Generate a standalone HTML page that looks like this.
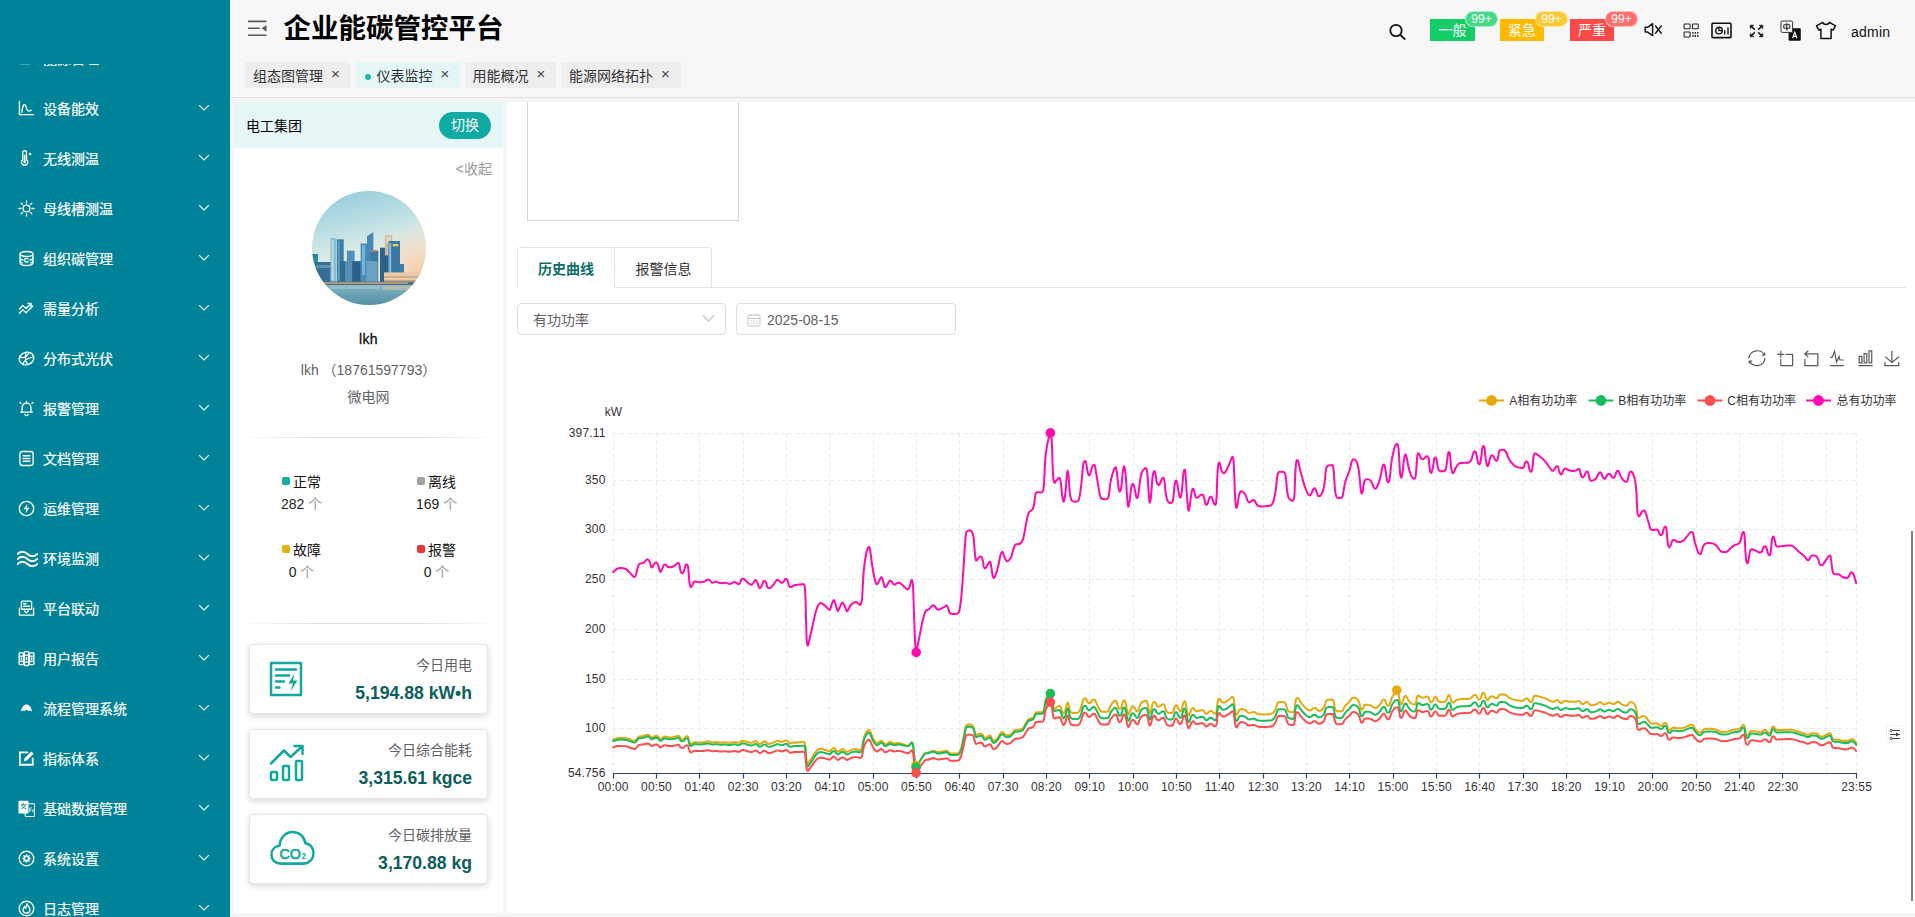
<!DOCTYPE html>
<html lang="zh-CN">
<head>
<meta charset="utf-8">
<title>企业能碳管控平台</title>
<style>
*{box-sizing:border-box;margin:0;padding:0}
html,body{width:1915px;height:917px;overflow:hidden;background:#f5f5f5;font-family:"Liberation Sans","Noto Sans CJK SC",sans-serif;font-size:14px;color:#303133}
.abs{position:absolute}
#side{position:absolute;left:0;top:0;width:230px;height:917px;background:#008299;overflow:hidden}
#side .mi{position:absolute;left:0;width:230px;height:50px;color:#fff;font-size:14px;line-height:50px;letter-spacing:0;-webkit-text-stroke:.2px #fff}
#side .mi span{position:absolute;left:43px;top:0;white-space:nowrap}
#side .mi svg.ic{position:absolute;left:17.8px;top:15.5px;width:17px;height:17px;fill:none;stroke:#fff;stroke-width:1.4;stroke-linecap:round;stroke-linejoin:round}
#side .mi svg.ar{position:absolute;left:198px;top:19px;width:12px;height:10px;fill:none;stroke:#fff;stroke-width:1.1;stroke-linecap:round;stroke-linejoin:round;opacity:.9}
#head{position:absolute;left:230px;top:0;width:1685px;height:98px;background:#f7f7f7;border-bottom:1px solid #e2e2e2}
#title{position:absolute;left:53.5px;top:10px;font-size:27.5px;font-weight:700;color:#000;line-height:38px;white-space:nowrap;letter-spacing:0}
.tag{position:absolute;top:62px;height:26px;background:#eeeeee;color:#303133;font-size:14px;line-height:28px;white-space:nowrap;padding-left:8px}
.tag.on{background:#e5f6f6}
.tag i{font-style:normal;position:absolute;top:-2px;font-size:15px;color:#444}
.lv{position:absolute;top:19px;width:45px;height:22px;color:#fff;font-size:14px;line-height:22px;text-align:center}
.bd{position:absolute;top:11px;width:33px;height:16px;border-radius:8px;color:#fff;font-size:12px;line-height:14px;text-align:center;border:1px solid rgba(255,255,255,.55)}
#lp{position:absolute;left:234px;top:102px;width:269px;height:811px;background:#fff;overflow:hidden}
#rp{position:absolute;left:507px;top:102px;width:1408px;height:811px;background:#fff;overflow:hidden}
.card{position:absolute;left:15px;width:239px;height:70px;background:#fff;border:1px solid #e6e6e6;border-radius:4px;box-shadow:0 2px 6px rgba(0,0,0,.16)}
.card .t{position:absolute;right:15px;top:11px;font-size:14px;color:#606266;line-height:18px;white-space:nowrap}
.card .v{position:absolute;right:15px;top:36px;font-size:17.6px;font-weight:700;color:#0b5e5c;line-height:24px;white-space:nowrap}
.st{position:absolute;font-size:14px;color:#111;white-space:nowrap;line-height:18px}
.st b{display:inline-block;width:8px;height:8px;border-radius:2px;margin-right:3px;position:relative;top:-2px}
.sv{position:absolute;font-size:14px;color:#222;white-space:nowrap;line-height:18px}
.sv em{font-style:normal;color:#999;font-size:14px}
</style>
</head>
<body>
<!-- SIDEBAR -->
<div id="side">
<div style="position:absolute;left:0;top:0;width:230px;height:64px;background:#008299;z-index:3"></div>
<div class="mi" style="top:34px"><svg class="ic" viewBox="0 0 18 18"><rect x="1.5" y="2" width="12.5" height="12.5" rx="1.5"/></svg><span>能源管理</span></div>
<div class="mi" style="top:84px"><svg class="ic" viewBox="0 0 18 18"><path d="M1.5 1.5v14h15"/><path d="M4 13c1.2-9 3.2-10.5 4.6-5.5s2.6 5 5.4 3.2"/></svg><span>设备能效</span><svg class="ar" viewBox="0 0 12 10"><path d="M1.5 2.5L6 7l4.5-4.5"/></svg></div>
<div class="mi" style="top:134px"><svg class="ic" viewBox="0 0 18 18"><path d="M5 2.8a2 2 0 0 1 4 0v7.4a3.3 3.3 0 1 1-4 0z"/><path d="M7 6v6.5" stroke-width="1.8"/><circle cx="7" cy="12.8" r="1.3" fill="#fff" stroke="none"/><circle cx="12.8" cy="4.2" r="1.3" fill="#fff" stroke="none"/></svg><span>无线测温</span><svg class="ar" viewBox="0 0 12 10"><path d="M1.5 2.5L6 7l4.5-4.5"/></svg></div>
<div class="mi" style="top:184px"><svg class="ic" viewBox="0 0 18 18"><circle cx="9" cy="9" r="3.6"/><path d="M9 1v2.2M9 14.8V17M1 9h2.2M14.8 9H17M3.3 3.3l1.6 1.6M13.1 13.1l1.6 1.6M3.3 14.7l1.6-1.6M13.1 4.9l1.6-1.6"/></svg><span>母线槽测温</span><svg class="ar" viewBox="0 0 12 10"><path d="M1.5 2.5L6 7l4.5-4.5"/></svg></div>
<div class="mi" style="top:234px"><svg class="ic" viewBox="0 0 18 18"><ellipse cx="9" cy="4.2" rx="6.8" ry="2.6"/><path d="M2.2 4.2v9.6c0 1.5 3 2.6 6.8 2.6s6.8-1.1 6.8-2.6V4.2"/><path d="M2.2 8.4c0 1 1.4 1.8 3 2.2M15.8 8.4c0 1-1.4 1.8-3 2.2M2.2 12c0 .8 1 1.4 2.4 1.9M15.8 12c0 .8-1 1.4-2.4 1.9"/><path d="M10.6 9.3a2.1 2.1 0 1 0 0 2.8" stroke-width="1.5"/></svg><span>组织碳管理</span><svg class="ar" viewBox="0 0 12 10"><path d="M1.5 2.5L6 7l4.5-4.5"/></svg></div>
<div class="mi" style="top:284px"><svg class="ic" viewBox="0 0 18 18"><path d="M1.5 9.5l3.5-3.7 3.6 3.2 4.8-5"/><path d="M10.6 3.6h3.2v3.2"/><path d="M1.5 14l3.5-3.7 3.6 3.2 7-7.2"/></svg><span>需量分析</span><svg class="ar" viewBox="0 0 12 10"><path d="M1.5 2.5L6 7l4.5-4.5"/></svg></div>
<div class="mi" style="top:334px"><svg class="ic" viewBox="0 0 18 18"><ellipse cx="9" cy="9" rx="7.8" ry="6.6" transform="rotate(-18 9 9)"/><path d="M2 7.5c4 1.5 7 .5 9.5-4.3M5 15c1.5-4 4.5-6.5 11-7.5M8.5 2.6c-1 4-1 8 1.5 12.8"/></svg><span>分布式光伏</span><svg class="ar" viewBox="0 0 12 10"><path d="M1.5 2.5L6 7l4.5-4.5"/></svg></div>
<div class="mi" style="top:384px"><svg class="ic" viewBox="0 0 18 18"><path d="M4.3 12.8V8a4.7 4.7 0 0 1 9.4 0v4.8"/><path d="M2.6 12.8h12.8"/><path d="M7.3 15.3a1.8 1.8 0 0 0 3.4 0"/><path d="M3.2 3.6l-1 -1M14.8 3.6l1-1"/><path d="M9 1.6v1.6"/></svg><span>报警管理</span><svg class="ar" viewBox="0 0 12 10"><path d="M1.5 2.5L6 7l4.5-4.5"/></svg></div>
<div class="mi" style="top:434px"><svg class="ic" viewBox="0 0 18 18"><rect x="2" y="1.6" width="14" height="14.8" rx="2.6"/><path d="M5.5 6h7M5.5 9h7M5.5 12h7" stroke-width="1.6"/></svg><span>文档管理</span><svg class="ar" viewBox="0 0 12 10"><path d="M1.5 2.5L6 7l4.5-4.5"/></svg></div>
<div class="mi" style="top:484px"><svg class="ic" viewBox="0 0 18 18"><circle cx="9" cy="9" r="7.6"/><path d="M10.2 3.8L5.8 9.8h3L7.8 14.2l4.4-6h-3z" fill="#fff" stroke="none"/></svg><span>运维管理</span><svg class="ar" viewBox="0 0 12 10"><path d="M1.5 2.5L6 7l4.5-4.5"/></svg></div>
<div class="mi" style="top:534px"><svg class="ic" viewBox="0 0 21 18" style="width:21px;height:18px;left:17px;top:16px"><path d="M0.5 4.6c3.5-3.2 6.5-3.2 10 0s6.5 3.2 10 0M0.5 9.6c3.5-3.2 6.5-3.2 10 0s6.5 3.2 10 0M0.5 14.6c3.5-3.2 6.5-3.2 10 0s6.5 3.2 10 0" stroke-width="1.9" transform="translate(0 -0.6)"/></svg><span>环境监测</span><svg class="ar" viewBox="0 0 12 10"><path d="M1.5 2.5L6 7l4.5-4.5"/></svg></div>
<div class="mi" style="top:584px"><svg class="ic" viewBox="0 0 18 18"><rect x="3.6" y="1.2" width="10.8" height="8.6" rx="1"/><path d="M6 4h2.5M6 6.6h6" stroke-width="1.5"/><path d="M1.5 8.6v7.4h15V8.6"/><path d="M7 11.6l2 1.8 2-1.8"/></svg><span>平台联动</span><svg class="ar" viewBox="0 0 12 10"><path d="M1.5 2.5L6 7l4.5-4.5"/></svg></div>
<div class="mi" style="top:634px"><svg class="ic" viewBox="0 0 18 18"><rect x="1.2" y="3" width="4.6" height="12.4" rx=".8"/><rect x="6.7" y="1.8" width="4.6" height="14.6" rx=".8"/><rect x="12.2" y="3" width="4.6" height="12.4" rx=".8"/><path d="M1.2 6.4h4.6M1.2 12h4.6M6.7 5.4h4.6M6.7 12.8h4.6M12.2 6.4h4.6M12.2 12h4.6"/><path d="M3.5 8.4v1.6M9 8v2.4M14.5 8.4v1.6" stroke-width="1.6"/></svg><span>用户报告</span><svg class="ar" viewBox="0 0 12 10"><path d="M1.5 2.5L6 7l4.5-4.5"/></svg></div>
<div class="mi" style="top:684px"><svg class="ic" viewBox="0 0 18 18"><path d="M3 12.4c1-5.4 3.4-7.6 6-7.6s5 2.2 6 7.6c-1.4-1.6-2.6-1.6-3.6-.4c-1.4-2-3.4-2-4.8 0c-1-1.2-2.2-1.2-3.6.4z" fill="#fff" stroke="none"/></svg><span>流程管理系统</span><svg class="ar" viewBox="0 0 12 10"><path d="M1.5 2.5L6 7l4.5-4.5"/></svg></div>
<div class="mi" style="top:734px"><svg class="ic" viewBox="0 0 18 18"><path d="M15.6 9v6.6H2V2.6h8" stroke-width="1.9" stroke-linejoin="miter"/><path d="M6 12.2l1-3.4 7.2-7.2 2.3 2.3-7.2 7.2z" fill="#fff" stroke="none"/></svg><span>指标体系</span><svg class="ar" viewBox="0 0 12 10"><path d="M1.5 2.5L6 7l4.5-4.5"/></svg></div>
<div class="mi" style="top:784px"><svg class="ic" viewBox="0 0 18 18"><rect x="7.6" y="4" width="10" height="13.4" rx="1" fill="none" stroke="#fff" stroke-width="1.1"/><rect x="0.5" y="0.8" width="10.6" height="13.6" rx="1" fill="#fff" stroke="none"/><path d="M3.6 5h4.6M5.9 3.8v1.2M4 5.2c.6 2 2 3.2 4 3.8M8 5.2c-.6 2-2 3.2-4 3.8" stroke="#008299" stroke-width=".9"/><path d="M12.4 12.6v-4.2h2M12.4 10.5h1.6M15.6 12.6v-2c0-.8 1.4-.8 1.4 0v2" stroke-width=".8"/></svg><span>基础数据管理</span><svg class="ar" viewBox="0 0 12 10"><path d="M1.5 2.5L6 7l4.5-4.5"/></svg></div>
<div class="mi" style="top:834px"><svg class="ic" viewBox="0 0 18 18"><circle cx="9" cy="9" r="7.7"/><path d="M12.32 8.26L13.56 8.42L13.56 9.58L12.32 9.74L11.87 10.82L12.63 11.82L11.82 12.63L10.82 11.87L9.74 12.32L9.58 13.56L8.42 13.56L8.26 12.32L7.18 11.87L6.18 12.63L5.37 11.82L6.13 10.82L5.68 9.74L4.44 9.58L4.44 8.42L5.68 8.26L6.13 7.18L5.37 6.18L6.18 5.37L7.18 6.13L8.26 5.68L8.42 4.44L9.58 4.44L9.74 5.68L10.82 6.13L11.82 5.37L12.63 6.18L11.87 7.18zM10.5 9a1.5 1.5 0 1 0-3 0a1.5 1.5 0 1 0 3 0z" fill="#fff" fill-rule="evenodd" stroke="none"/></svg><span>系统设置</span><svg class="ar" viewBox="0 0 12 10"><path d="M1.5 2.5L6 7l4.5-4.5"/></svg></div>
<div class="mi" style="top:884px"><svg class="ic" viewBox="0 0 18 18"><circle cx="9" cy="9" r="7.7"/><path d="M9.6 4c.2 2.2 3 3.4 3 6.2a3.6 3.6 0 0 1-7.2 0c0-1.6 1-2.6 1.8-3.4 0 1.2.4 1.8 1 2 .6-1.4.6-3.2 1.4-4.8z"/></svg><span>日志管理</span><svg class="ar" viewBox="0 0 12 10"><path d="M1.5 2.5L6 7l4.5-4.5"/></svg></div>
</div>

<!-- HEADER -->
<div id="head">
<svg class="abs" style="left:17px;top:18.5px;width:21px;height:19px" viewBox="0 0 20 18" fill="none" stroke="#55595f" stroke-width="1.5"><path d="M1 2.2h17.5M1 8.8h11M1 15.4h17.5"/><path d="M18.6 5.6v6.4l-4.6-3.2z" fill="#55595f" stroke="none"/></svg>
<div id="title">企业能碳管控平台</div>
<div class="tag" style="left:15px;width:105px">组态图管理<i style="left:86px">×</i></div>
<div class="tag on" style="left:125.5px;width:104px;padding-left:21px"><b style="position:absolute;left:9px;top:12px;width:6px;height:6px;border-radius:50%;background:#1fb5ad"></b>仪表监控<i style="left:85px">×</i></div>
<div class="tag" style="left:234.5px;width:91px">用能概况<i style="left:72px">×</i></div>
<div class="tag" style="left:331px;width:120px">能源网络拓扑<i style="left:100px">×</i></div>

<svg class="abs" style="left:1158px;top:22px;width:20px;height:20px" viewBox="0 0 20 20" fill="none" stroke="#111" stroke-width="1.75" stroke-linecap="round"><circle cx="8" cy="8.5" r="5.7"/><path d="M12.2 12.8l4.6 4.2"/></svg>
<div class="lv" style="left:1200px;background:#13ce66">一般</div>
<div class="bd" style="left:1235px;background:#42d885">99+</div>
<div class="lv" style="left:1270px;width:44px;background:#ffba00">紧急</div>
<div class="bd" style="left:1305px;background:#ffc833">99+</div>
<div class="lv" style="left:1340px;width:44px;background:#ff4949">严重</div>
<div class="bd" style="left:1375px;background:#ff6d6d">99+</div>

<!-- mute -->
<svg class="abs" style="left:1413px;top:21px;width:22px;height:17px" viewBox="1643 21 22 17" fill="none" stroke="#1a1a1a" stroke-width="1.5" stroke-linejoin="round"><path d="M1645.2 27.3h2.4l5-3.7v12l-5-3.5h-2.4z"/><path d="M1655.2 25.5l6.4 8.2M1661.6 25.5l-6.4 8.2" stroke-width="1.4"/></svg>
<!-- qr grid -->
<svg class="abs" style="left:1453px;top:22px;width:17px;height:17px" viewBox="1683 22 17 17" fill="none" stroke="#222" stroke-width="1.05"><rect x="1684.1" y="23.9" width="6" height="4.9" rx=".6"/><rect x="1692.5" y="23.9" width="5.7" height="4.9" rx=".6"/><rect x="1684.1" y="31.9" width="6" height="5.1" rx=".6"/><path d="M1693 32.1v1.6M1695.4 32.1v1.6M1697.8 32.1v1.6M1693 34.9v2.2M1695.4 34.9v2.2M1697.8 34.9v2.2" stroke-width="1.3"/></svg>
<!-- dashboard -->
<svg class="abs" style="left:1481px;top:22px;width:21px;height:17px" viewBox="0 0 21 17" fill="none" stroke="#111" stroke-width="1.6"><rect x="1" y="1.2" width="19" height="14.4" rx=".8"/><circle cx="8" cy="8.6" r="3.3" stroke-width="1.4"/><path d="M8 5.3v3.3h3.3" stroke-width="1.3"/><path d="M13.7 12.5V8.2M17 12.5V5.6" stroke-width="1.4"/></svg>
<!-- fullscreen -->
<svg class="abs" style="left:1519px;top:24px;width:15px;height:14px" viewBox="0 0 15 14" fill="#111" stroke="#111" stroke-width="1.3"><path d="M1.2 1.2h3.6L1.2 4.6zM13.8 1.2v3.4L10.2 1.2zM1.2 12.8V9.4l3.6 3.4zM13.8 12.8h-3.6l3.6-3.4z" stroke-width=".6"/><path d="M2.2 2.2l3.6 3.4M12.8 2.2L9.2 5.6M2.2 11.8l3.6-3.4M12.8 11.8L9.2 8.4" fill="none" stroke-width="1.5"/></svg>
<!-- lang -->
<svg class="abs" style="left:1550px;top:20px;width:22px;height:22px" viewBox="0 0 22 22" fill="none"><rect x="8.6" y="8.2" width="12.2" height="12.6" rx="1.2" fill="#111"/><rect x="1" y="1" width="11.6" height="11.4" rx="1.2" fill="#f7f7f7" stroke="#333" stroke-width="1"/><path d="M3.8 4.8h6v3.4h-6zM6.8 2.8v7.8" stroke="#222" stroke-width="1"/><path d="M12.6 18.2l2.2-5.8 2.2 5.8M13.4 16.4h2.8" stroke="#fff" stroke-width="1.1"/></svg>
<!-- shirt -->
<svg class="abs" style="left:1585px;top:21px;width:22px;height:19px" viewBox="0 0 22 19" fill="none" stroke="#111" stroke-width="1.5" stroke-linejoin="round"><path d="M7.6 1.4L1.5 4.8l2.4 4.4 2-1v9.2h10.2V8.2l2 1 2.4-4.4-6.1-3.4c-.8 1.6-2 2.2-3.4 2.2s-2.6-.6-3.4-2.2z"/></svg>
<div class="abs" style="left:1621px;top:22px;font-size:14px;line-height:20px;color:#111;letter-spacing:.25px">admin</div>

</div>

<!-- LEFT PANEL -->
<div id="lp">
<div class="abs" style="left:0;top:0;width:269px;height:46px;background:#e6f6f7"></div>
<div class="abs" style="left:12px;top:14px;font-size:14px;line-height:20px;color:#000">电工集团</div>
<div class="abs" style="left:205px;top:10px;width:52px;height:27px;border-radius:14px;background:#0faaa2;color:#fff;font-size:14px;line-height:27px;text-align:center">切换</div>
<div class="abs" style="right:11px;top:58px;font-size:14px;line-height:18px;color:#999">&lt;收起</div>
<svg class="abs" style="left:78px;top:89px;width:114px;height:114px" viewBox="0 0 114 114">
<defs>
<clipPath id="avc"><circle cx="57" cy="57" r="57"/></clipPath>
<linearGradient id="sky" x1="0" y1="0" x2="0.25" y2="1"><stop offset="0" stop-color="#8fcadb"/><stop offset=".3" stop-color="#b3dbe2"/><stop offset=".55" stop-color="#d6e9e6"/><stop offset=".8" stop-color="#eeeee2"/><stop offset="1" stop-color="#f1e6d6"/></linearGradient>
<radialGradient id="sun" cx="1" cy=".8" r=".55"><stop offset="0" stop-color="#f4bd96"/><stop offset=".45" stop-color="#f6d3b8" stop-opacity=".75"/><stop offset="1" stop-color="#f6dcc6" stop-opacity="0"/></radialGradient>
<linearGradient id="wat" x1="0" y1="0" x2="0" y2="1"><stop offset="0" stop-color="#8ab6c0"/><stop offset=".35" stop-color="#6fa5b6"/><stop offset="1" stop-color="#568fa8"/></linearGradient>
<filter id="bl" x="-5%" y="-5%" width="110%" height="110%"><feGaussianBlur stdDeviation=".55"/></filter>
</defs>
<g clip-path="url(#avc)">
<rect width="114" height="114" fill="url(#sky)"/>
<rect width="114" height="114" fill="url(#sun)"/>
<g filter="url(#bl)">
<rect x="-2" y="63" width="8" height="30" fill="#2c8aa6"/>
<rect x="3" y="71" width="16" height="22" fill="#356f93"/>
<rect x="4" y="74" width="14" height="3" fill="#5a93b3"/>
<rect x="18.4" y="47" width="5.8" height="45" fill="#8dbdd2"/>
<rect x="19.6" y="49" width="2" height="40" fill="#bcd9e2"/>
<rect x="24.8" y="48.3" width="6.9" height="44" fill="#3a7fa8"/>
<rect x="26" y="50" width="1.6" height="40" fill="#5aa3cb"/>
<rect x="34.9" y="59.7" width="7.7" height="33" fill="#4f8fb8"/>
<rect x="28" y="70" width="26.4" height="22" fill="#336c93"/>
<rect x="33" y="70" width="7" height="22" fill="#5690b6"/>
<rect x="41" y="72" width="7" height="20" fill="#2e6087"/>
<rect x="48.6" y="52.5" width="11.1" height="40" fill="#4a8eb9"/>
<rect x="50" y="54" width="3" height="30" fill="#74b4d8"/>
<path d="M55 45l6.4-3.8V70H55z" fill="#4687b3"/>
<rect x="58.6" y="59.7" width="7.7" height="33" fill="#3a79a5"/>
<rect x="59" y="59" width="6" height="1.8" fill="#d9737a"/>
<rect x="54.4" y="70" width="11.2" height="22" fill="#6aa2c3"/>
<rect x="68" y="56.7" width="8.5" height="36" fill="#2b628c"/>
<rect x="72.9" y="44.4" width="7.4" height="20" fill="#cbb9a3"/>
<rect x="74" y="46" width="5" height="6" fill="#ead3b2"/>
<rect x="76.5" y="50" width="11.5" height="43" fill="#3778a6"/>
<rect x="77.2" y="52" width="2" height="38" fill="#8bbcd8"/>
<rect x="80.7" y="53" width="5.6" height="2.3" fill="#f0d34a"/>
<rect x="88" y="73" width="4" height="20" fill="#3a7fae"/>
<rect x="72" y="81.4" width="42" height="12.6" fill="#e9c9a6"/>
<rect x="72" y="85" width="42" height="1.8" fill="#cfa988"/>
<rect x="72" y="89" width="42" height="1.5" fill="#c9a282"/>
<rect x="0" y="90.5" width="114" height="4" fill="#4f7388"/>
<rect x="12" y="91.3" width="84" height="1.4" fill="#e6ae78" opacity=".85"/>
</g>
<rect x="0" y="94.2" width="114" height="20" fill="url(#wat)"/>
<rect x="18" y="95" width="50" height="3" fill="#a9cfd5" opacity=".5"/>
<rect x="70" y="95" width="40" height="4" fill="#e8c8a8" opacity=".45"/>
</g>
</svg>
<div class="abs" style="left:0;width:269px;top:227px;text-align:center;font-size:14px;line-height:20px;color:#111;-webkit-text-stroke:.3px #111;letter-spacing:.4px">lkh</div>
<div class="abs" style="left:0;width:269px;top:258px;text-align:center;font-size:14px;line-height:20px;color:#606266;white-space:nowrap">lkh （18761597793）</div>
<div class="abs" style="left:0;width:269px;top:285px;text-align:center;font-size:14px;line-height:20px;color:#606266">微电网</div>
<div class="abs" style="left:2px;top:335px;width:265px;height:1px;background:linear-gradient(90deg,rgba(220,223,230,0),#dcdfe6 30%,#dcdfe6 70%,rgba(220,223,230,0))"></div>

<div class="st" style="left:48px;top:371px"><b style="background:#13ada6"></b>正常</div>
<div class="sv" style="left:0;width:135px;top:393px;text-align:center">282 <em>个</em></div>
<div class="st" style="left:183px;top:371px"><b style="background:#a0a0a0"></b>离线</div>
<div class="sv" style="left:135px;width:135px;top:393px;text-align:center">169 <em>个</em></div>
<div class="st" style="left:48px;top:439px"><b style="background:#e6b012"></b>故障</div>
<div class="sv" style="left:0;width:135px;top:461px;text-align:center">0 <em>个</em></div>
<div class="st" style="left:183px;top:439px"><b style="background:#ee3535"></b>报警</div>
<div class="sv" style="left:135px;width:135px;top:461px;text-align:center">0 <em>个</em></div>
<div class="abs" style="left:2px;top:521px;width:265px;height:1px;background:linear-gradient(90deg,rgba(220,223,230,0),#dcdfe6 30%,#dcdfe6 70%,rgba(220,223,230,0))"></div>

<div class="card" style="top:542px">
<svg class="abs" style="left:19px;top:16px;width:34px;height:36px" viewBox="0 0 34 36" fill="none" stroke="#12a79f" stroke-width="2.5" stroke-linejoin="round"><rect x="2" y="2" width="30" height="32"/><path d="M7 8.5h20M7 14.5h13M7 20.5h8M7 26.5h3.5" stroke-linecap="round"/><path d="M25.5 12.5l-6 10h4.5l-2.5 8 7-11h-4.5z" fill="#12a79f" stroke="none"/></svg>
<div class="t">今日用电</div><div class="v">5,194.88 kW•h</div></div>
<div class="card" style="top:627px">
<svg class="abs" style="left:19px;top:14px;width:36px;height:38px" viewBox="0 0 36 38" fill="none" stroke="#12a79f" stroke-width="2.5" stroke-linejoin="round" stroke-linecap="round"><path d="M2 19.5L15 6.5l6.5 6.5L33 2.5"/><path d="M25.5 2h8v8"/><rect x="2" y="28" width="6" height="8" rx="1"/><rect x="14" y="22" width="6" height="14" rx="1"/><rect x="27" y="17" width="6" height="19" rx="1"/></svg>
<div class="t">今日综合能耗</div><div class="v">3,315.61 kgce</div></div>
<div class="card" style="top:712px">
<svg class="abs" style="left:20px;top:15.3px;width:45px;height:35.6px" viewBox="0 0 47 36" preserveAspectRatio="none" fill="none" stroke="#12a79f" stroke-width="2.6" stroke-linejoin="round" stroke-linecap="round"><path d="M11 34c-5.5 0-9.5-4-9.5-9s3.5-8.5 8.5-9c.5-8 6-14 13.5-14s12.5 5 13.5 11.5c5 .5 8.5 4.5 8.5 10s-4.5 10.5-10 10.5z"/><text x="9.8" y="29.5" font-family="Liberation Sans,sans-serif" font-size="15" font-weight="400" fill="#12a79f" stroke="#12a79f" stroke-width=".7">CO</text><text x="33" y="29.3" font-family="Liberation Sans,sans-serif" font-size="8.4" font-weight="700" fill="#12a79f" stroke="none">2</text></svg>
<div class="t">今日碳排放量</div><div class="v">3,170.88 kg</div></div>

</div>

<!-- RIGHT PANEL -->
<div id="rp">
<div class="abs" style="left:20px;top:-2px;width:212px;height:121px;border:1px solid #d4d4d4;background:#fff"></div>
<div class="abs" style="left:10px;top:185px;width:1389px;height:1px;background:#e2e4e8"></div>
<div class="abs" style="left:10px;top:145px;width:195px;height:41px;border:1px solid #e2e4e8;border-bottom:none;border-radius:4px 4px 0 0"></div>
<div class="abs" style="left:11px;top:185px;width:96px;height:1px;background:#fff"></div>
<div class="abs" style="left:107px;top:146px;width:1px;height:39px;background:#e2e4e8"></div>
<div class="abs" style="left:10px;top:146px;width:98px;height:40px;line-height:42px;text-align:center;font-size:14px;font-weight:700;color:#0d6e6a">历史曲线</div>
<div class="abs" style="left:108px;top:146px;width:97px;height:40px;line-height:42px;text-align:center;font-size:14px;color:#303133">报警信息</div>
<div class="abs" style="left:10px;top:201px;width:209px;height:32px;border:1px solid #dcdee2;border-radius:4px;font-size:14px;line-height:32px;padding-left:15px;color:#606266">有功功率</div>
<svg class="abs" style="left:195px;top:212px;width:13px;height:9px" viewBox="0 0 13 9" fill="none" stroke="#c0c4cc" stroke-width="1.2" stroke-linecap="round" stroke-linejoin="round"><path d="M1.2 1.5L6.5 7l5.3-5.5"/></svg>
<div class="abs" style="left:229px;top:201px;width:220px;height:32px;border:1px solid #dcdee2;border-radius:4px;font-size:14px;line-height:32px;padding-left:30px;color:#606266">2025-08-15</div>
<svg class="abs" style="left:240px;top:211px;width:14px;height:14px" viewBox="0 0 14 14" fill="none" stroke="#c0c4cc" stroke-width="1"><rect x="1" y="2" width="12" height="11" rx="1"/><path d="M1 5.5h12M4 .8v2.4M10 .8v2.4"/><path d="M3.5 8h1.5M6.2 8h1.5M9 8h1.5M3.5 10.5h1.5M6.2 10.5h1.5M9 10.5h1.5" stroke-width="1.1"/></svg>
<svg class="abs" style="left:0;top:0;width:1408px;height:810px" viewBox="507 102 1408 810" font-family="Liberation Sans,Noto Sans CJK SC,sans-serif">
<path d="M613.2 433.5H1856.6M613.2 480.5H1856.6M613.2 529.5H1856.6M613.2 579.5H1856.6M613.2 629.5H1856.6M613.2 679.5H1856.6M613.2 728.5H1856.6M613.5 432.9V773.3M656.5 432.9V773.3M699.5 432.9V773.3M743.5 432.9V773.3M786.5 432.9V773.3M829.5 432.9V773.3M873.5 432.9V773.3M916.5 432.9V773.3M959.5 432.9V773.3M1003.5 432.9V773.3M1046.5 432.9V773.3M1089.5 432.9V773.3M1133.5 432.9V773.3M1176.5 432.9V773.3M1219.5 432.9V773.3M1263.5 432.9V773.3M1306.5 432.9V773.3M1349.5 432.9V773.3M1393.5 432.9V773.3M1436.5 432.9V773.3M1479.5 432.9V773.3M1523.5 432.9V773.3M1566.5 432.9V773.3M1609.5 432.9V773.3M1652.5 432.9V773.3M1696.5 432.9V773.3M1739.5 432.9V773.3M1782.5 432.9V773.3M1826.5 432.9V773.3M1856.5 432.9V773.3" fill="none" stroke="#e9e9e9" stroke-width="1" stroke-dasharray="4 3"/>
<path d="M612.9000000000001 773.5H1857.1M613.5 773.5v5M656.5 773.5v5M699.5 773.5v5M743.5 773.5v5M786.5 773.5v5M829.5 773.5v5M873.5 773.5v5M916.5 773.5v5M959.5 773.5v5M1003.5 773.5v5M1046.5 773.5v5M1089.5 773.5v5M1133.5 773.5v5M1176.5 773.5v5M1219.5 773.5v5M1263.5 773.5v5M1306.5 773.5v5M1349.5 773.5v5M1393.5 773.5v5M1436.5 773.5v5M1479.5 773.5v5M1523.5 773.5v5M1566.5 773.5v5M1609.5 773.5v5M1652.5 773.5v5M1696.5 773.5v5M1739.5 773.5v5M1782.5 773.5v5M1856.5 773.5v5" fill="none" stroke="#33416b" stroke-width="1.2"/>
<g font-size="12" fill="#333" letter-spacing=".15">
<text x="613.5" y="415.5" text-anchor="middle">kW</text>
<text x="605.5" y="436.8" text-anchor="end">397.11</text>
<text x="605.5" y="483.6" text-anchor="end">350</text>
<text x="605.5" y="533.4" text-anchor="end">300</text>
<text x="605.5" y="583.1" text-anchor="end">250</text>
<text x="605.5" y="632.8" text-anchor="end">200</text>
<text x="605.5" y="682.5" text-anchor="end">150</text>
<text x="605.5" y="732.2" text-anchor="end">100</text>
<text x="605.5" y="777.2" text-anchor="end">54.756</text>
<text x="613.2" y="791" text-anchor="middle">00:00</text>
<text x="656.5" y="791" text-anchor="middle">00:50</text>
<text x="699.8" y="791" text-anchor="middle">01:40</text>
<text x="743.2" y="791" text-anchor="middle">02:30</text>
<text x="786.5" y="791" text-anchor="middle">03:20</text>
<text x="829.8" y="791" text-anchor="middle">04:10</text>
<text x="873.1" y="791" text-anchor="middle">05:00</text>
<text x="916.5" y="791" text-anchor="middle">05:50</text>
<text x="959.8" y="791" text-anchor="middle">06:40</text>
<text x="1003.1" y="791" text-anchor="middle">07:30</text>
<text x="1046.4" y="791" text-anchor="middle">08:20</text>
<text x="1089.8" y="791" text-anchor="middle">09:10</text>
<text x="1133.1" y="791" text-anchor="middle">10:00</text>
<text x="1176.4" y="791" text-anchor="middle">10:50</text>
<text x="1219.7" y="791" text-anchor="middle">11:40</text>
<text x="1263.1" y="791" text-anchor="middle">12:30</text>
<text x="1306.4" y="791" text-anchor="middle">13:20</text>
<text x="1349.7" y="791" text-anchor="middle">14:10</text>
<text x="1393" y="791" text-anchor="middle">15:00</text>
<text x="1436.4" y="791" text-anchor="middle">15:50</text>
<text x="1479.7" y="791" text-anchor="middle">16:40</text>
<text x="1523" y="791" text-anchor="middle">17:30</text>
<text x="1566.3" y="791" text-anchor="middle">18:20</text>
<text x="1609.7" y="791" text-anchor="middle">19:10</text>
<text x="1653" y="791" text-anchor="middle">20:00</text>
<text x="1696.3" y="791" text-anchor="middle">20:50</text>
<text x="1739.6" y="791" text-anchor="middle">21:40</text>
<text x="1782.9" y="791" text-anchor="middle">22:30</text>
<text x="1856.6" y="791" text-anchor="middle">23:55</text>
</g>
<path d="M613.2 739.4C614 739.2 616 738.4 617.6 738.2C619.1 737.9 620.3 738 621.9 738C623.4 738 624.6 738 626.2 738.3C627.7 738.6 629 739.3 630.5 739.8C632.1 740.3 633.7 741.2 634.8 741C636 740.8 636.3 739.4 637.1 738.6C637.8 737.8 638 737 639.1 736.5C640.3 736.1 642.2 736.3 643.5 736.1C644.7 735.8 645.2 735.4 646 735.1C646.7 734.9 647.1 734.7 647.8 734.8C648.4 734.9 649 735.1 649.6 735.6C650.2 736 650.7 737 651.2 737.4C651.7 737.7 651.9 737.7 652.5 737.4C653.1 737.2 653.8 736.5 654.5 736.2C655.2 735.9 655.8 735.8 656.4 735.8C657.1 735.9 657.4 736.1 658 736.6C658.6 737.1 659.2 738.2 659.7 738.7C660.2 739.1 660.3 739.1 660.7 739C661.2 738.8 661.7 738.4 662.3 738C662.9 737.5 663.4 736.9 664 736.6C664.6 736.3 664.9 736.4 665.6 736.5C666.2 736.6 666.9 737 667.5 737.2C668.2 737.3 668.7 737.3 669.4 737.4C670.1 737.4 670.7 737.4 671.5 737.4C672.3 737.3 672.9 737.2 673.7 737C674.5 736.8 675.3 736.5 676.1 736.3C676.8 736.1 677.4 735.8 678 735.8C678.6 735.8 678.9 735.7 679.3 736.3C679.8 736.8 680.1 738.2 680.6 738.7C681.2 739.3 681.7 739.4 682.3 739.4C682.9 739.4 683.3 739.2 683.9 738.7C684.5 738.2 685 737.1 685.5 736.7C686 736.2 686.2 736.2 686.7 736.3C687.1 736.4 687.6 736.2 688.1 737.1C688.5 738 688.8 740.2 689.1 741.4C689.5 742.6 689.9 743.2 690.2 743.7C690.5 744.2 690.6 744.2 691 744.1C691.4 744.1 691.9 743.8 692.4 743.4C692.9 743.1 693.2 742.6 693.7 742.4C694.2 742.1 694.6 742.1 695.3 742.1C696 742.1 696.9 742.3 697.6 742.4C698.4 742.4 698.8 742.4 699.6 742.4C700.4 742.4 701.3 742.4 702.2 742.3C703.2 742.3 704 742.2 704.8 742C705.7 741.9 706.2 741.6 706.8 741.5C707.4 741.4 707.7 741.4 708.2 741.4C708.8 741.4 709.3 741.5 709.8 741.6C710.4 741.8 710.9 742.1 711.4 742.3C711.9 742.4 712 742.5 712.6 742.4C713.2 742.4 713.9 742.3 714.7 742.3C715.4 742.2 716.1 742.1 716.9 742.1C717.7 742.2 718.5 742.4 719.2 742.5C720 742.6 720.5 742.6 721.2 742.6C721.9 742.6 722.4 742.5 723.2 742.5C723.9 742.4 724.7 742.3 725.5 742.4C726.3 742.4 727 742.5 727.7 742.6C728.5 742.7 729.1 742.9 729.8 742.8C730.6 742.8 731.3 742.5 732.1 742.4C732.8 742.2 733.4 742 734.2 742C734.9 742 735.5 742.2 736.3 742.3C737 742.5 737.8 742.8 738.5 742.8C739.2 742.7 739.6 742.5 740.2 742.2C740.7 741.8 741 741.2 741.5 741C742 740.8 742.3 740.8 742.8 740.8C743.3 740.8 743.6 740.8 744.4 741C745.1 741.2 746.2 741.7 747.1 741.9C748 742.2 748.6 742.4 749.3 742.5C750.1 742.7 750.7 742.9 751.4 742.8C752.1 742.8 752.7 742.5 753.3 742.2C753.9 742 754.3 741.5 754.8 741.3C755.4 741.1 755.7 741 756.1 741.2C756.6 741.4 757.1 741.8 757.6 742.2C758.1 742.6 758.4 743.3 758.9 743.6C759.3 743.9 759.6 743.9 760.1 743.9C760.6 743.8 761.2 743.5 761.8 743.1C762.4 742.7 762.8 741.9 763.3 741.6C763.9 741.3 764.2 741.3 764.7 741.3C765.1 741.4 765.5 741.5 766 741.9C766.5 742.3 766.9 743.1 767.4 743.5C767.9 743.8 768.1 743.8 768.7 743.8C769.3 743.8 770.2 743.7 770.9 743.5C771.7 743.3 772.3 743.1 773 742.7C773.8 742.4 774.5 742 775.3 741.6C776 741.3 776.6 740.9 777.3 740.8C778.1 740.7 778.7 741.1 779.4 741.3C780.2 741.5 780.9 741.8 781.7 741.8C782.4 741.9 783 741.6 783.6 741.4C784.2 741.1 784.6 740.7 785.1 740.5C785.5 740.3 785.8 740.3 786.2 740.4C786.7 740.4 787.1 740.5 787.6 741C788.1 741.4 788.5 742.5 789 742.9C789.5 743.3 789.7 743.2 790.3 743.2C790.9 743.2 791.5 743.1 792.1 743C792.8 742.9 793.1 742.7 793.8 742.6C794.6 742.5 795.3 742.4 796.5 742.4C797.6 742.3 799.2 742.3 800.4 742.2C801.6 742.1 802.5 741.9 803.3 742C804 742.1 804.2 741.9 804.6 742.6C804.9 743.3 805.1 743.8 805.4 745.8C805.6 747.9 805.8 751.3 806 754.1C806.2 756.9 806.4 759.8 806.7 761.5C806.9 763.2 807.2 763.3 807.6 763.5C807.9 763.8 808.2 763.4 808.6 762.9C809.1 762.3 809.6 761.3 810.2 760.4C810.8 759.4 811.5 758.5 812.2 757.4C812.9 756.3 813.4 755.3 814.1 754.2C814.8 753.1 815.4 752.3 816.1 751.5C816.8 750.6 817.3 750.1 818.1 749.6C818.8 749.2 819.3 749.1 820 748.9C820.7 748.8 820.9 748.8 822 749C823 749.2 824.5 749.7 825.9 750.1C827.2 750.5 828.7 751.5 829.7 751.4C830.7 751.3 830.9 750.2 831.6 749.6C832.3 749 833 748 833.7 748C834.4 747.9 834.7 748.6 835.4 749.3C836.2 750 836.9 751.6 837.7 751.8C838.6 752 839.3 750.8 840.2 750.3C841 749.8 841.6 749 842.4 748.9C843.2 748.9 843.7 749.5 844.5 750.1C845.3 750.6 846 751.9 846.8 752.1C847.6 752.2 848.3 751.4 849.1 751C849.8 750.7 850 750.2 851.1 749.9C852.3 749.5 854.2 749 855.5 749C856.8 749 857.6 749.5 858.5 749.7C859.4 749.8 859.8 750.3 860.4 750C861 749.7 861.5 749.6 862 748.2C862.4 746.8 862.6 744.2 863 742.1C863.4 740.1 863.6 738.5 864.2 736.7C864.9 734.8 865.7 733 866.5 731.9C867.3 730.7 868 730.2 868.6 730.1C869.2 729.9 869.4 729.9 870 731C870.6 732.1 871.3 734.5 872.1 736.2C872.8 737.9 873.4 739.3 874.2 740.5C875 741.7 875.7 742.7 876.4 743.1C877.2 743.4 877.7 742.8 878.5 742.4C879.4 742 880.4 740.8 881.2 740.7C881.9 740.6 882.3 741.3 882.9 741.8C883.5 742.4 883.8 743.4 884.3 743.8C884.8 744.2 885 744.4 885.5 744.3C886.1 744.2 886.6 743.8 887.4 743.4C888.2 743 889.1 742.2 889.9 742.1C890.7 741.9 891.2 742.4 892 742.7C892.8 743 893.4 743.5 894.2 743.5C895.1 743.6 895.7 743.3 896.5 743.1C897.3 743 897.8 742.8 898.6 742.9C899.4 742.9 900.1 743.1 900.9 743.4C901.7 743.6 901.7 743.6 903 744.1C904.2 744.5 906.4 745.6 907.7 745.7C908.9 745.7 909.2 744.9 909.9 744.4C910.7 743.8 911.3 742.4 911.9 742.5C912.4 742.7 912.7 743 913.1 745.1C913.5 747.2 913.6 750.9 914 754.1C914.3 757.4 914.6 760.8 915 763.2C915.4 765.5 915.6 767.2 916.2 767.4C916.8 767.5 917.5 765.5 918.3 764C919.2 762.6 920.1 760.9 920.9 759.4C921.8 758 922.4 756.9 923.2 755.8C924 754.7 924.5 753.9 925.3 753.3C926.1 752.7 926.8 752.8 927.6 752.6C928.3 752.4 928.9 752.3 929.7 752C930.4 751.8 931.1 751.4 931.7 751.1C932.4 750.9 932.9 750.7 933.5 750.8C934.1 750.8 934.5 751 935.2 751.2C936 751.5 936.7 752 937.5 752.1C938.3 752.2 938.9 752 939.8 751.9C940.6 751.8 941.3 751.7 942.2 751.5C943.2 751.4 944.2 751.1 945 750.9C945.8 750.8 946.2 750.5 946.8 750.6C947.3 750.8 947.6 751.1 948.1 751.5C948.7 752 949 752.9 949.7 753.2C950.5 753.6 951.4 753.5 952.3 753.5C953.3 753.6 954 753.6 955 753.5C955.9 753.5 956.8 753.6 957.6 753.4C958.4 753.2 958.7 753.3 959.3 752.5C959.9 751.6 960.4 750.5 961.1 748.5C961.7 746.5 962.2 744.2 962.8 741.3C963.4 738.3 964 735 964.5 732.2C965.1 729.4 965.4 727.2 965.9 725.8C966.5 724.5 967 725 967.7 724.8C968.4 724.6 969 724.6 969.8 724.6C970.5 724.7 971.2 724.6 971.9 725C972.6 725.5 973.1 725.9 973.6 727C974.1 728.2 974.3 730.2 974.7 731.6C975.1 733 975.3 734.4 975.9 734.9C976.5 735.4 977.2 734.5 978.2 734.3C979.1 734.1 980.3 733.5 981.1 733.6C981.9 733.6 982 734 982.5 734.6C983 735.2 983.3 736.5 983.7 737C984.2 737.6 984.5 737.8 985.1 737.7C985.8 737.7 986.4 737.2 987.2 736.7C988.1 736.3 989.2 735.3 989.8 735.3C990.5 735.3 990.6 735.9 991.1 736.7C991.5 737.6 992 739.3 992.5 740C993 740.8 993.2 741.1 993.9 741.1C994.5 741 995.2 740.5 995.9 739.7C996.7 739 997.4 738.2 998.2 737C999 735.9 999.6 734.3 1000.3 733.4C1001.1 732.5 1001.7 732 1002.4 732C1003.1 732.1 1003.5 733.2 1004.3 733.8C1005.1 734.4 1005.9 735.1 1006.8 735.3C1007.6 735.6 1008.2 735.3 1009 735.1C1009.8 734.8 1010.6 734.5 1011.3 733.9C1012 733.3 1012.4 732.5 1013 731.8C1013.7 731.1 1014.4 730.3 1015.1 729.9C1015.9 729.5 1016.6 729.7 1017.4 729.7C1018.2 729.6 1018.7 729.8 1019.5 729.6C1020.3 729.5 1021 729.3 1021.8 729C1022.5 728.6 1022.8 728.5 1023.5 727.5C1024.3 726.4 1025.1 724.5 1026 723C1026.8 721.6 1027.5 720.2 1028.2 719.4C1029 718.6 1029.2 718.9 1030 718.6C1030.8 718.3 1032.1 718.3 1032.9 717.7C1033.7 717.2 1034 716.4 1034.4 715.6C1034.8 714.8 1034.8 713.8 1035.2 713.2C1035.5 712.6 1035.8 712.4 1036.3 712.3C1036.8 712.1 1037.1 712.2 1038 712.2C1039 712.2 1040.6 712.4 1041.5 712.3C1042.4 712.2 1042.8 712.1 1043.2 711.6C1043.7 711.1 1043.7 710.7 1044 709.5C1044.3 708.2 1044.4 706.4 1044.7 704.7C1045 703 1045.1 701.5 1045.5 700C1045.9 698.6 1046.5 697.7 1047 696.7C1047.5 695.7 1047.9 695.3 1048.4 694.7C1048.9 694.1 1049.3 693.8 1049.8 693.4C1050.2 693.1 1050.3 692.5 1050.7 692.7C1051 692.9 1051.3 693.8 1051.6 694.6C1051.8 695.4 1051.9 695.9 1052.1 697.3C1052.2 698.6 1052.4 700.7 1052.5 702.3C1052.7 703.9 1052.8 705 1053 706.1C1053.2 707.2 1053.4 707.8 1053.7 708.3C1053.9 708.8 1054.1 708.9 1054.5 708.9C1054.9 708.8 1055.4 708.2 1055.8 708C1056.3 707.7 1056.5 707.6 1057 707.3C1057.5 707 1058 706.4 1058.5 706.2C1059 706 1059.2 705.9 1059.6 706C1060.1 706.2 1060.4 706.3 1060.8 707.1C1061.2 708 1061.5 709.5 1061.9 710.7C1062.4 711.8 1062.9 713.1 1063.3 713.4C1063.8 713.7 1064 713.2 1064.5 712.5C1064.9 711.9 1065.2 711.1 1065.6 709.7C1066 708.2 1066.4 705.7 1066.8 704.4C1067.1 703 1067.3 702.4 1067.7 702.4C1068 702.3 1068.2 703 1068.6 704.2C1069 705.5 1069.2 708 1069.6 709.4C1070 710.8 1070.3 711.4 1070.8 712C1071.3 712.6 1071.4 712.7 1072.3 712.8C1073.1 713 1074.4 713 1075.4 713C1076.3 712.9 1077 712.9 1077.7 712.6C1078.4 712.4 1078.7 712.2 1079.2 711.5C1079.7 710.8 1080.1 710 1080.5 708.8C1081 707.7 1081.3 706.5 1081.7 705.2C1082.1 703.9 1082.3 702.6 1082.6 701.5C1082.9 700.5 1083.2 699.7 1083.5 699.1C1083.9 698.5 1084.2 698.5 1084.7 698.4C1085.1 698.3 1085.5 698.2 1085.9 698.7C1086.4 699.2 1086.8 700.6 1087.2 701.3C1087.6 702.1 1088 702.6 1088.4 703C1088.8 703.3 1089 703.4 1089.4 703.3C1089.8 703.1 1090.2 702.8 1090.7 702.4C1091.1 701.9 1091.5 701 1092 700.5C1092.5 700.1 1092.9 699.8 1093.4 699.7C1093.9 699.6 1094.5 699.6 1094.9 699.9C1095.3 700.3 1095.4 700.9 1095.7 701.5C1096 702.2 1096.3 702.8 1096.6 703.6C1097 704.4 1097.4 705.1 1097.8 706C1098.2 706.9 1098.5 707.6 1098.9 708.4C1099.3 709.2 1099.6 709.9 1100.1 710.5C1100.5 711 1100.6 711.3 1101.5 711.6C1102.3 711.8 1103.6 711.8 1104.7 711.8C1105.8 711.8 1106.8 711.8 1107.5 711.6C1108.3 711.3 1108.3 711.5 1108.8 710.5C1109.3 709.5 1109.9 707.2 1110.4 706C1111 704.8 1111.4 704.3 1111.9 703.6C1112.4 702.8 1112.8 702.5 1113.3 702C1113.8 701.4 1114.3 701 1114.8 700.7C1115.3 700.5 1115.6 700.4 1115.9 700.6C1116.3 700.8 1116.4 701.3 1116.7 702C1117 702.6 1117.2 703.3 1117.5 704.4C1117.9 705.5 1118.3 707.2 1118.7 708C1119.1 708.9 1119.2 709 1119.6 709C1120 709.1 1120.4 708.9 1120.8 708.4C1121.1 708 1121.3 707.4 1121.7 706.4C1122 705.4 1122.2 703.8 1122.6 702.8C1122.9 701.7 1123.3 701 1123.6 700.5C1124 700.1 1124.1 700.1 1124.4 700.3C1124.7 700.6 1125 701 1125.3 702C1125.7 702.9 1125.8 704 1126.2 705.6C1126.5 707.2 1126.7 709.4 1127.1 710.9C1127.4 712.4 1127.7 713.3 1128 713.9C1128.3 714.5 1128.3 714.5 1128.6 714.3C1128.8 714.1 1129.1 713.7 1129.5 712.9C1129.8 712.1 1130.1 710.7 1130.5 709.7C1130.9 708.6 1131.3 707.6 1131.7 707C1132.1 706.4 1132.4 706.3 1132.8 706.3C1133.2 706.3 1133.5 706.6 1134 707C1134.4 707.5 1134.7 708.2 1135.1 708.8C1135.5 709.5 1135.9 710.4 1136.3 710.9C1136.6 711.3 1136.8 711.4 1137.2 711.4C1137.5 711.3 1137.8 711.2 1138.2 710.5C1138.6 709.7 1138.9 708.5 1139.4 707.2C1139.8 706 1140.3 704.5 1140.9 703.6C1141.4 702.6 1141.8 702.4 1142.3 702C1142.9 701.5 1143.3 701.4 1144 701.2C1144.6 701 1145.3 700.7 1145.8 700.7C1146.3 700.8 1146.6 700.8 1146.9 701.5C1147.3 702.3 1147.6 703.3 1147.9 704.8C1148.2 706.3 1148.4 708.3 1148.7 709.7C1149 711 1149.2 711.9 1149.5 712.5C1149.7 713.1 1149.8 713.1 1150 712.9C1150.3 712.7 1150.5 712.3 1150.9 711.3C1151.2 710.3 1151.4 708.6 1151.8 707.2C1152.1 705.8 1152.3 704.5 1152.7 703.6C1153 702.7 1153.3 702.4 1153.7 702.2C1154.1 701.9 1154.5 701.8 1154.9 702C1155.2 702.3 1155.4 702.9 1155.8 703.6C1156.2 704.3 1156.4 705.4 1156.9 706C1157.5 706.6 1158.1 706.8 1158.7 706.8C1159.2 706.9 1159.5 706.6 1160 706.2C1160.6 705.8 1161 705.2 1161.5 704.8C1162.1 704.4 1162.6 704.2 1163 704.2C1163.5 704.2 1163.8 704.2 1164.2 704.8C1164.5 705.3 1164.6 706.2 1165 707.2C1165.3 708.2 1165.7 709.6 1166.1 710.5C1166.5 711.3 1166.8 711.7 1167.3 712.1C1167.8 712.5 1168.4 712.7 1169 712.9C1169.6 713.1 1170.1 713.1 1170.7 713.1C1171.3 713.1 1171.9 713.2 1172.4 712.7C1173 712.2 1173.2 711.5 1173.6 710.5C1174 709.5 1174.2 708.1 1174.5 707.2C1174.8 706.3 1175.1 705.9 1175.4 705.5C1175.8 705.2 1176 705.2 1176.4 705.3C1176.7 705.4 1176.9 705.6 1177.3 706.2C1177.6 706.9 1178 708 1178.4 708.8C1178.9 709.7 1179.3 710.6 1179.7 711C1180.1 711.4 1180.4 711.3 1180.7 711.1C1181.1 710.8 1181.3 710.6 1181.6 709.7C1182 708.7 1182.2 707.3 1182.6 706C1182.9 704.7 1183.1 703.4 1183.5 702.6C1183.8 701.7 1184.2 701.4 1184.5 701.3C1184.9 701.3 1185.1 701.4 1185.4 702.4C1185.7 703.3 1185.9 704.7 1186.2 706.4C1186.5 708.1 1186.8 710.2 1187.2 711.7C1187.5 713.2 1187.8 714.2 1188.1 714.9C1188.4 715.7 1188.5 716 1188.9 715.7C1189.2 715.5 1189.5 714.7 1189.9 713.7C1190.3 712.8 1190.6 711.4 1191.1 710.5C1191.5 709.5 1191.8 708.9 1192.2 708.5C1192.6 708.1 1192.9 708 1193.4 708.1C1193.8 708.2 1194.1 708.8 1194.5 709.3C1194.9 709.7 1195.1 710.5 1195.7 710.9C1196.2 711.2 1196.8 711.3 1197.5 711.3C1198.2 711.2 1198.8 710.9 1199.4 710.7C1200.1 710.5 1200.5 710.3 1201.2 710.2C1201.8 710.1 1202.4 710.1 1202.9 710.3C1203.4 710.4 1203.6 710.6 1204 711.1C1204.5 711.6 1204.8 712.6 1205.2 713.1C1205.6 713.6 1205.9 713.8 1206.3 713.8C1206.8 713.8 1207.3 713.5 1207.8 713.1C1208.3 712.7 1208.7 711.9 1209.2 711.5C1209.7 711.1 1210.1 710.9 1210.6 710.9C1211.1 710.8 1211.4 710.9 1211.8 711.2C1212.3 711.5 1212.7 712.3 1213.2 712.7C1213.7 713.1 1214.1 713.5 1214.6 713.6C1215.1 713.8 1215.5 714 1215.9 713.4C1216.2 712.8 1216.4 712 1216.7 710.5C1216.9 708.9 1217 706.7 1217.2 704.8C1217.5 702.9 1217.7 701 1218.1 699.9C1218.4 698.8 1218.9 698.8 1219.3 698.8C1219.7 698.8 1219.9 699.4 1220.4 699.9C1220.8 700.5 1221 701.3 1221.6 701.8C1222.2 702.2 1222.9 702.6 1223.6 702.6C1224.2 702.7 1224.6 702.5 1225.3 702.2C1226 701.8 1226.7 701.4 1227.6 700.7C1228.5 700.1 1229.4 699.4 1230.1 698.7C1230.8 698.1 1231.2 697.5 1231.6 697.2C1232.1 696.8 1232.3 696.7 1232.6 696.9C1233 697.1 1233.3 697.1 1233.6 698.3C1233.9 699.5 1234 701.5 1234.3 703.6C1234.5 705.6 1234.7 707.8 1234.9 709.7C1235.2 711.6 1235.5 713.2 1235.9 714.1C1236.2 715 1236.4 714.8 1236.8 714.7C1237.1 714.6 1237.3 714.2 1237.7 713.5C1238.1 712.8 1238.4 711.4 1238.8 710.7C1239.3 709.9 1239.7 709.6 1240.2 709.3C1240.7 709 1241 709 1241.6 709C1242.2 709 1242.9 709.2 1243.7 709.5C1244.4 709.7 1245 709.9 1245.7 710.4C1246.4 710.9 1246.9 711.8 1247.5 712.3C1248.1 712.7 1248.4 712.9 1249 712.9C1249.6 713 1250.1 712.7 1250.7 712.6C1251.4 712.4 1251.8 712.3 1252.5 712.2C1253.1 712.1 1253.7 712 1254.2 712.1C1254.7 712.2 1254.9 712.4 1255.3 712.7C1255.8 713 1256 713.3 1256.5 713.5C1257 713.8 1257.5 714 1258.2 714.1C1258.9 714.3 1259.6 714.3 1260.5 714.3C1261.4 714.4 1262 714.4 1263.4 714.4C1264.7 714.3 1266.6 714.2 1268 714.2C1269.3 714.1 1270 714.1 1270.8 713.9C1271.7 713.7 1272.2 713.6 1272.8 713.1C1273.4 712.6 1273.8 712.1 1274.3 711.3C1274.8 710.4 1275.3 709.6 1275.8 708.4C1276.3 707.3 1276.5 705.9 1276.9 704.8C1277.3 703.7 1277.5 703 1278 702.6C1278.4 702.1 1278.8 702.2 1279.5 702.1C1280.1 702 1280.9 702 1281.8 702.1C1282.6 702.1 1283.4 702.1 1284.1 702.3C1284.7 702.5 1285 702.5 1285.4 703.2C1285.9 703.8 1286 704.9 1286.4 706C1286.7 707.1 1286.9 708.3 1287.3 709.3C1287.6 710.2 1287.9 710.6 1288.4 711.1C1288.9 711.6 1289.4 711.7 1290 711.9C1290.7 712.1 1291.5 712.3 1292.1 712.3C1292.7 712.4 1293.1 712.4 1293.5 712.1C1293.9 711.8 1294.1 711.5 1294.4 710.5C1294.6 709.4 1294.7 707.9 1294.9 706.4C1295 704.9 1295.2 703.4 1295.4 702C1295.7 700.5 1296 699.2 1296.3 698.5C1296.7 697.8 1297.1 697.9 1297.5 698C1297.9 698 1298.1 698.1 1298.5 698.7C1299 699.3 1299.3 700.2 1299.9 701.1C1300.5 702.1 1301.1 702.8 1301.9 703.8C1302.6 704.8 1303.3 705.7 1304.2 706.6C1305 707.5 1305.7 708.2 1306.5 708.8C1307.2 709.5 1307.7 709.9 1308.4 710.1C1309.1 710.4 1309.7 710.5 1310.2 710.4C1310.8 710.3 1311.1 710 1311.6 709.7C1312.1 709.3 1312.5 708.7 1313 708.4C1313.5 708.1 1313.8 708 1314.3 708C1314.7 707.9 1315.2 708 1315.6 708.2C1316.1 708.5 1316.4 709 1316.8 709.5C1317.2 709.9 1317.6 710.3 1318.1 710.6C1318.5 710.8 1318.9 710.7 1319.4 710.7C1320 710.6 1320.4 710.6 1321 710.3C1321.7 709.9 1322.3 709.5 1322.9 708.8C1323.5 708.2 1323.9 707.5 1324.3 706.6C1324.7 705.7 1324.9 705 1325.2 704C1325.5 703 1325.6 701.8 1326 701.1C1326.3 700.4 1326.6 700.4 1327.1 700.1C1327.7 699.9 1328.1 699.9 1328.9 699.8C1329.6 699.8 1330.4 699.7 1331.2 699.8C1331.9 699.8 1332.4 699.6 1332.9 699.9C1333.3 700.2 1333.4 700.5 1333.7 701.5C1334 702.6 1334.1 704.2 1334.4 705.6C1334.7 707 1334.9 708.3 1335.3 709.3C1335.7 710.2 1336 710.6 1336.6 711C1337.2 711.3 1337.8 711.3 1338.6 711.4C1339.5 711.4 1340.5 711.4 1341.3 711.3C1342 711.2 1342.2 711.1 1342.6 710.7C1343.1 710.2 1343.2 709.6 1343.6 708.8C1343.9 708.1 1344.3 707.3 1344.7 706.6C1345.2 705.9 1345.5 705.4 1346.1 704.8C1346.6 704.2 1347.2 703.7 1347.8 703.2C1348.4 702.6 1349 702.3 1349.5 701.8C1350.1 701.2 1350.3 700.5 1350.7 699.9C1351.1 699.3 1351.4 698.7 1351.8 698.3C1352.3 697.9 1352.8 697.8 1353.3 697.7C1353.9 697.6 1354.4 697.7 1354.9 697.8C1355.5 698 1355.9 698.1 1356.4 698.5C1357 698.9 1357.4 699.2 1357.9 699.9C1358.4 700.6 1358.7 701.3 1359.1 702.4C1359.5 703.5 1359.8 704.8 1360.1 706C1360.5 707.2 1360.7 708.4 1361 709C1361.4 709.7 1361.6 709.8 1361.9 709.7C1362.3 709.7 1362.6 709.4 1362.9 708.8C1363.2 708.3 1363.3 707.3 1363.7 706.6C1364 706 1364.2 705.5 1364.7 705.2C1365.2 704.9 1365.5 704.9 1366.2 704.8C1366.9 704.7 1367.7 704.7 1368.5 704.8C1369.3 704.9 1369.8 705 1370.4 705.2C1371.1 705.4 1371.4 705.6 1371.9 706C1372.5 706.4 1372.9 706.9 1373.4 707.3C1373.9 707.7 1374.3 707.9 1374.8 708C1375.3 708.1 1375.7 708.1 1376.3 707.8C1376.9 707.6 1377.4 707.1 1378 706.6C1378.6 706.1 1379.1 705.7 1379.6 705C1380.2 704.3 1380.7 703.6 1381.1 702.8C1381.6 702 1381.9 701.1 1382.3 700.5C1382.7 700 1383 699.7 1383.4 699.6C1383.8 699.5 1384.2 699.5 1384.6 699.8C1385 700.2 1385.2 700.7 1385.6 701.5C1386 702.4 1386.2 703.6 1386.6 704.4C1387 705.1 1387.4 705.5 1387.8 705.7C1388.2 705.9 1388.5 705.8 1388.8 705.6C1389.2 705.4 1389.4 705.2 1389.7 704.4C1390.1 703.6 1390.3 702.3 1390.7 701.1C1391 700 1391.4 698.9 1391.8 697.9C1392.3 696.9 1392.7 696.3 1393.2 695.5C1393.7 694.7 1394.2 694 1394.7 693.4C1395.2 692.9 1395.6 692.6 1396.1 692.4C1396.6 692.2 1397 692.2 1397.4 692.3C1397.9 692.5 1398 692.5 1398.4 693.4C1398.7 694.4 1398.9 695.9 1399.2 697.5C1399.5 699.1 1399.7 701.2 1400 702.4C1400.3 703.5 1400.6 703.8 1400.9 704.1C1401.2 704.3 1401.5 704.2 1401.8 703.8C1402.1 703.4 1402.4 702.9 1402.7 702C1403.1 701 1403.4 699.3 1403.8 698.3C1404.2 697.3 1404.5 696.7 1404.9 696.3C1405.3 695.9 1405.7 696 1406.1 696.2C1406.4 696.4 1406.6 696.9 1407 697.5C1407.3 698.1 1407.7 699 1408.1 699.7C1408.6 700.5 1408.9 701.1 1409.5 701.8C1410.1 702.4 1410.6 703 1411.2 703.5C1411.8 703.9 1412.4 704.2 1412.9 704.4C1413.5 704.6 1414 704.6 1414.4 704.5C1414.9 704.4 1415.2 704.5 1415.6 703.8C1415.9 703.1 1416.1 701.9 1416.4 700.7C1416.7 699.5 1416.8 698 1417.1 697.1C1417.4 696.2 1417.6 695.9 1417.9 695.7C1418.2 695.4 1418.4 695.5 1418.8 695.7C1419.2 695.8 1419.5 696.2 1420 696.5C1420.4 696.8 1420.8 697.2 1421.3 697.4C1421.8 697.6 1422.2 697.7 1422.7 697.7C1423.2 697.7 1423.6 697.6 1424.2 697.4C1424.8 697.2 1425.4 696.9 1425.9 696.8C1426.5 696.6 1426.9 696.5 1427.4 696.6C1427.9 696.7 1428.2 696.7 1428.6 697.3C1428.9 697.9 1429.1 699.1 1429.4 699.9C1429.7 700.8 1429.9 701.6 1430.2 702C1430.5 702.5 1430.8 702.6 1431.1 702.6C1431.4 702.6 1431.7 702.5 1432 702C1432.4 701.6 1432.7 700.9 1433.1 700.1C1433.4 699.3 1433.8 698.2 1434.2 697.7C1434.6 697.1 1434.9 697.1 1435.4 697.1C1435.8 697.1 1436.1 697.3 1436.5 697.7C1436.9 698.1 1437.1 698.9 1437.4 699.5C1437.7 700.1 1437.9 700.7 1438.3 701.1C1438.8 701.5 1439.1 701.6 1439.7 701.8C1440.4 701.9 1441.2 701.9 1442 701.9C1442.8 701.9 1443.6 701.9 1444.3 701.8C1445 701.6 1445.3 701.6 1445.8 701.1C1446.3 700.7 1446.5 700 1446.8 699.1C1447.2 698.2 1447.4 697 1447.8 696.3C1448.1 695.6 1448.3 695.3 1448.7 695.2C1449 695 1449.4 695 1449.7 695.5C1450 695.9 1450.1 696.5 1450.4 697.5C1450.7 698.4 1450.9 699.9 1451.2 700.7C1451.5 701.6 1451.8 701.9 1452.1 702.3C1452.5 702.6 1452.8 702.6 1453.2 702.6C1453.5 702.5 1453.8 702.2 1454.3 701.9C1454.8 701.5 1455.2 701 1455.8 700.7C1456.4 700.3 1456.9 700 1457.5 699.7C1458.1 699.5 1458.6 699.3 1459.2 699.2C1459.9 699.1 1460 699 1461 699C1461.9 698.9 1463.3 698.9 1464.6 698.9C1465.9 698.9 1467 699 1468 698.9C1469.1 698.8 1469.7 698.7 1470.3 698.4C1471 698.2 1471.3 698 1471.7 697.5C1472.2 697 1472.5 696.3 1472.9 695.9C1473.3 695.4 1473.5 695.2 1474 695.1C1474.5 694.9 1475.1 694.8 1475.5 695C1475.9 695.1 1476.1 695.3 1476.4 695.9C1476.8 696.4 1477.1 697.3 1477.5 697.9C1477.8 698.5 1478 698.9 1478.4 699.2C1478.8 699.5 1479.2 699.4 1479.5 699.4C1479.9 699.3 1480.1 699.2 1480.4 698.7C1480.8 698.2 1481 697.4 1481.4 696.5C1481.7 695.6 1482 694.3 1482.4 693.6C1482.8 693 1483.2 693 1483.5 693C1483.9 693 1484.2 693.1 1484.5 693.6C1484.8 694.2 1485 695.4 1485.3 696.3C1485.6 697.2 1485.8 698 1486.2 698.7C1486.6 699.4 1486.9 699.9 1487.3 700C1487.8 700.2 1488.1 700 1488.5 699.6C1488.9 699.2 1489.2 698.4 1489.6 697.9C1490.1 697.4 1490.3 697 1490.8 696.7C1491.2 696.4 1491.7 696.3 1492.2 696.3C1492.7 696.3 1493 696.4 1493.5 696.7C1494.1 696.9 1494.5 697.4 1495 697.7C1495.6 698 1496.1 698.3 1496.5 698.3C1497 698.3 1497.3 698.1 1497.7 697.7C1498 697.3 1498.2 696.6 1498.5 696.1C1498.8 695.5 1499 695 1499.4 694.7C1499.8 694.4 1500.1 694.4 1500.8 694.4C1501.4 694.3 1502.3 694.3 1503.1 694.3C1503.8 694.4 1504.4 694.5 1505 694.7C1505.7 694.8 1506 695 1506.5 695.4C1507.1 695.8 1507.5 696.4 1508 696.9C1508.6 697.4 1509 697.6 1509.6 698C1510.3 698.3 1510.8 698.6 1511.7 698.9C1512.6 699.3 1513.5 699.6 1514.6 699.9C1515.6 700.2 1516.4 700.3 1517.4 700.5C1518.5 700.6 1519.4 700.6 1520.3 700.7C1521.2 700.7 1521.9 700.8 1522.6 700.7C1523.3 700.7 1523.6 700.6 1524 700.3C1524.4 700 1524.5 699.4 1524.9 699.1C1525.3 698.8 1525.6 698.6 1526.1 698.5C1526.5 698.4 1527 698.4 1527.4 698.6C1527.9 698.8 1528.1 699 1528.5 699.5C1528.8 700 1529.1 700.9 1529.5 701.3C1529.9 701.8 1530.2 702 1530.6 702C1531.1 702.1 1531.4 702.1 1531.8 701.8C1532.1 701.4 1532.3 701 1532.6 700.1C1532.9 699.3 1533.2 697.7 1533.5 696.9C1533.9 696.1 1534.1 696 1534.4 695.8C1534.8 695.6 1535 695.6 1535.6 695.7C1536.1 695.7 1536.7 695.9 1537.5 696.1C1538.4 696.3 1539.4 696.6 1540.4 696.9C1541.4 697.2 1542 697.3 1542.9 697.6C1543.9 697.9 1544.6 698.2 1545.6 698.6C1546.6 699.1 1547.5 699.6 1548.5 700C1549.4 700.5 1550 700.9 1550.8 701.2C1551.5 701.5 1551.9 701.7 1552.5 701.8C1553.1 701.8 1553.5 701.7 1554 701.5C1554.5 701.4 1554.9 700.9 1555.3 700.7C1555.8 700.4 1556.3 700.2 1556.7 700.1C1557.2 700.1 1557.6 700 1558 700.3C1558.4 700.6 1558.6 701.3 1559 701.8C1559.4 702.2 1559.8 702.5 1560.2 702.8C1560.6 703 1560.9 703.1 1561.3 703C1561.8 702.9 1562.1 702.6 1562.6 702.3C1563.1 702 1563.4 701.5 1564 701.2C1564.5 701 1564.9 701 1565.5 700.9C1566 700.9 1566.3 701 1566.8 701.1C1567.4 701.2 1567.8 701.4 1568.6 701.5C1569.3 701.7 1569.8 701.7 1570.9 701.8C1571.9 701.8 1573.3 701.8 1574.3 701.8C1575.3 701.7 1575.6 701.7 1576.3 701.6C1576.9 701.5 1577.5 701.2 1578.1 701.1C1578.7 701.1 1579.1 701 1579.5 701.2C1579.9 701.4 1580 701.9 1580.4 702.4C1580.7 702.8 1581 703.3 1581.4 703.7C1581.9 704 1582.4 704.1 1582.9 704.1C1583.4 704 1583.8 703.8 1584.3 703.5C1584.8 703.2 1585.1 702.7 1585.6 702.4C1586 702.2 1586.5 702.1 1586.9 702C1587.4 702 1587.7 702 1588.1 702.3C1588.5 702.6 1588.6 703.3 1589 703.8C1589.4 704.3 1589.7 704.7 1590.2 705C1590.6 705.3 1590.9 705.3 1591.5 705.3C1592.2 705.3 1593 705.2 1593.8 705C1594.7 704.8 1595.4 704.7 1596.1 704.4C1596.9 704.1 1597.3 703.6 1597.9 703.3C1598.4 702.9 1598.8 702.6 1599.2 702.4C1599.7 702.3 1600.1 702.2 1600.5 702.3C1600.9 702.4 1601.2 702.5 1601.6 702.8C1602.1 703.2 1602.4 703.7 1602.8 704C1603.2 704.3 1603.5 704.4 1603.9 704.5C1604.4 704.6 1604.8 704.6 1605.3 704.4C1605.9 704.2 1606.5 703.6 1607 703.4C1607.6 703.1 1607.9 702.9 1608.4 702.8C1608.9 702.8 1609.2 702.8 1609.7 702.8C1610.2 702.9 1610.5 703.1 1611.1 703.4C1611.6 703.6 1612 704 1612.6 704.1C1613.1 704.2 1613.4 704.2 1613.9 704.1C1614.4 704 1614.9 703.7 1615.3 703.4C1615.8 703 1616 702.4 1616.5 702.2C1616.9 701.9 1617.3 701.8 1617.7 701.8C1618.2 701.7 1618.5 701.8 1618.9 702C1619.3 702.3 1619.5 702.6 1619.9 703C1620.3 703.3 1620.7 703.6 1621.2 704C1621.7 704.3 1622.1 704.6 1622.8 704.9C1623.4 705.1 1624.2 705.3 1624.8 705.5C1625.5 705.6 1626.1 705.7 1626.6 705.6C1627.1 705.5 1627.3 705.4 1627.7 705C1628.1 704.6 1628.3 704 1628.6 703.6C1629 703.1 1629.3 702.6 1629.7 702.4C1630.1 702.1 1630.5 702 1630.9 702C1631.4 702 1631.8 702.1 1632.3 702.4C1632.8 702.6 1633.2 702.9 1633.7 703.4C1634.1 703.8 1634.5 704.2 1634.8 704.8C1635.2 705.4 1635.5 705.9 1635.8 706.8C1636.1 707.7 1636.2 708.6 1636.5 709.7C1636.7 710.8 1636.7 711.7 1636.9 712.9C1637.1 714.1 1637.2 715.7 1637.5 716.6C1637.7 717.4 1638 717.3 1638.3 717.6C1638.6 717.8 1638.8 717.8 1639.2 717.8C1639.6 717.7 1640.1 717.4 1640.6 717.1C1641.1 716.9 1641.6 716.5 1642.1 716.3C1642.6 716.1 1643 716 1643.5 716C1643.9 716 1644.3 716.1 1644.7 716.3C1645.2 716.5 1645.5 716.7 1645.9 717.2C1646.3 717.6 1646.6 718.1 1647 718.7C1647.5 719.2 1648 719.9 1648.4 720.4C1648.8 720.9 1648.9 720.9 1649.2 721.3C1649.5 721.7 1649.8 722.2 1650.1 722.6C1650.4 722.9 1650.4 723.1 1650.9 723.2C1651.5 723.4 1652.3 723.4 1653.2 723.5C1654.1 723.5 1655.3 723.5 1656.1 723.5C1656.9 723.6 1657.3 723.6 1657.8 723.8C1658.3 724 1658.5 724.5 1659 724.8C1659.4 725.1 1659.6 725.4 1660.1 725.6C1660.6 725.8 1661.1 726 1661.6 725.9C1662.1 725.8 1662.4 725.6 1662.7 725.2C1663.1 724.8 1663.4 724 1663.8 723.6C1664.2 723.2 1664.5 723.1 1664.9 723C1665.3 722.9 1665.7 722.8 1666.1 723.2C1666.4 723.6 1666.5 724.1 1666.8 725C1667 725.9 1667.3 727.4 1667.6 728.2C1667.9 729.1 1668.1 729.4 1668.5 729.7C1668.9 730.1 1669.2 730.2 1669.6 730.1C1670.1 730 1670.3 729.7 1670.8 729.3C1671.2 729 1671.7 728.3 1672.2 728C1672.7 727.7 1673 727.7 1673.5 727.6C1674.1 727.6 1674.4 727.6 1675 727.7C1675.7 727.8 1676.4 728.1 1677.3 728.2C1678.3 728.3 1679.2 728.4 1680.2 728.3C1681.2 728.2 1682.1 728.1 1683.1 727.9C1684 727.7 1684.5 727.4 1685.4 727.1C1686.2 726.8 1686.9 726.4 1687.7 726.1C1688.4 725.7 1689 725.5 1689.6 725.2C1690.3 725 1690.8 724.9 1691.3 724.8C1691.9 724.8 1692.4 724.8 1692.8 725.1C1693.3 725.5 1693.4 726 1693.8 726.6C1694.1 727.2 1694.5 727.8 1694.9 728.4C1695.4 729.1 1695.8 729.5 1696.3 730C1696.8 730.6 1697.2 731.2 1697.7 731.6C1698.1 732.1 1698.3 732.2 1698.8 732.4C1699.4 732.5 1700.1 732.7 1700.7 732.5C1701.2 732.3 1701.4 731.9 1701.8 731.5C1702.2 731 1702.5 730.5 1703 730.1C1703.4 729.6 1703.9 729.4 1704.6 729.1C1705.2 728.9 1705.8 728.9 1706.6 728.8C1707.4 728.8 1708 728.7 1708.9 728.7C1709.9 728.7 1710.8 728.8 1711.8 728.8C1712.8 728.9 1713.5 729 1714.4 729.2C1715.4 729.3 1716.1 729.6 1717 729.9C1717.8 730.2 1718.4 730.6 1719 730.9C1719.7 731.2 1719.9 731.4 1720.6 731.6C1721.3 731.7 1721.8 731.8 1722.9 731.9C1724 731.9 1725.7 731.9 1726.7 731.8C1727.8 731.7 1728 731.5 1728.7 731.3C1729.4 731.1 1729.9 730.8 1730.8 730.5C1731.6 730.2 1732.5 730 1733.3 729.8C1734.1 729.6 1734.5 729.5 1735.3 729.4C1736.2 729.3 1737.1 729.3 1737.9 729.2C1738.6 729.1 1739.1 729 1739.6 728.7C1740.1 728.4 1740.4 728.1 1740.9 727.5C1741.3 727 1741.6 726.2 1742 725.7C1742.4 725.3 1742.8 725 1743.2 725C1743.6 724.9 1743.9 724.9 1744.2 725.3C1744.5 725.8 1744.6 726.5 1744.8 727.5C1745 728.6 1745.1 729.9 1745.3 731.1C1745.6 732.3 1745.8 733.5 1746 734.3C1746.3 735.1 1746.5 735.3 1746.8 735.6C1747.1 735.8 1747.4 735.9 1747.8 735.7C1748.1 735.5 1748.3 735.1 1748.7 734.5C1749 733.9 1749.2 732.9 1749.6 732.3C1749.9 731.7 1750.1 731.5 1750.6 731.2C1751.1 731 1751.6 730.9 1752.3 730.9C1753.1 730.9 1753.7 731.1 1754.6 731.3C1755.6 731.4 1756.8 731.7 1757.7 731.8C1758.7 732 1759.3 732.1 1760 732.1C1760.8 732.1 1761.3 732.1 1761.8 731.8C1762.3 731.6 1762.5 731 1762.9 730.7C1763.3 730.4 1763.5 730.2 1764.1 730.1C1764.6 730 1765.3 729.9 1765.8 730.1C1766.3 730.3 1766.5 730.7 1766.9 731.1C1767.4 731.6 1767.7 732.2 1768.1 732.5C1768.5 732.9 1768.8 733 1769.2 733.1C1769.6 733.1 1770 733.2 1770.4 732.7C1770.7 732.2 1770.9 731.3 1771.2 730.4C1771.5 729.4 1771.7 728.2 1772 727.6C1772.3 726.9 1772.6 726.8 1772.9 726.6C1773.3 726.5 1773.6 726.6 1773.9 726.8C1774.3 727.1 1774.6 727.7 1775 728.2C1775.3 728.7 1775.5 729.3 1775.9 729.6C1776.3 730 1776.6 730.1 1777.3 730.1C1777.9 730.2 1778.5 730.1 1779.6 730C1780.6 730 1781.6 729.9 1783 729.9C1784.5 729.8 1786.2 729.7 1787.6 729.7C1789.1 729.7 1790 729.6 1791.1 729.7C1792.1 729.8 1792.5 729.9 1793.4 730.1C1794.2 730.3 1794.8 730.5 1795.7 730.8C1796.5 731.1 1797.1 731.3 1798 731.6C1798.8 731.9 1799.4 732.1 1800.3 732.3C1801.1 732.5 1801.7 732.7 1802.6 732.9C1803.4 733.1 1804.2 733.3 1804.8 733.6C1805.5 733.9 1805.8 734.2 1806.3 734.4C1806.9 734.6 1807.2 734.7 1807.7 734.8C1808.2 734.8 1808.6 734.9 1809.1 734.7C1809.6 734.5 1809.8 734.1 1810.2 733.8C1810.7 733.6 1811.1 733.4 1811.7 733.3C1812.4 733.2 1813.2 733.1 1814 733.2C1814.9 733.2 1815.6 733.2 1816.3 733.5C1817.1 733.7 1817.5 734 1818.1 734.4C1818.6 734.8 1818.8 735.4 1819.2 735.8C1819.6 736.2 1819.9 736.3 1820.4 736.5C1820.8 736.6 1821.3 736.7 1821.8 736.6C1822.4 736.5 1822.8 736.4 1823.5 736.1C1824.1 735.8 1824.8 735.4 1825.5 735C1826.2 734.6 1826.9 734.3 1827.5 734C1828.1 733.7 1828.5 733.5 1829 733.4C1829.5 733.3 1830 733.1 1830.4 733.3C1830.7 733.5 1830.8 733.8 1831 734.4C1831.3 735.1 1831.5 736 1831.8 736.8C1832.2 737.6 1832.3 738.5 1832.8 739C1833.2 739.5 1833.5 739.5 1834.1 739.6C1834.8 739.7 1835.6 739.7 1836.4 739.7C1837.3 739.8 1838.1 739.7 1839 739.8C1839.8 739.9 1840.4 740.2 1841.3 740.4C1842.2 740.6 1842.9 740.8 1843.9 740.9C1844.9 741 1846 741.1 1846.8 741C1847.6 741 1847.9 741 1848.5 740.8C1849.1 740.5 1849.5 739.9 1850 739.6C1850.5 739.4 1850.7 739.2 1851.1 739.2C1851.6 739.1 1852 739.1 1852.5 739.2C1853 739.4 1853.4 739.7 1853.9 740.1C1854.4 740.5 1854.6 740.9 1855 741.4C1855.5 741.9 1856 742.6 1856.2 742.9" fill="none" stroke="#e6a80c" stroke-width="2" stroke-linejoin="round" stroke-linecap="round"/>
<path d="M613.2 741C614 740.7 616 740 617.6 739.8C619.1 739.5 620.3 739.6 621.9 739.6C623.4 739.7 624.6 739.6 626.2 739.9C627.7 740.3 629 740.9 630.5 741.4C632.1 741.9 633.7 742.8 634.8 742.6C636 742.4 636.3 741.1 637.1 740.3C637.8 739.5 638 738.7 639.1 738.3C640.3 737.8 642.2 738.1 643.5 737.8C644.7 737.6 645.2 737.2 646 736.9C646.7 736.7 647.1 736.5 647.8 736.6C648.4 736.7 649 736.9 649.6 737.4C650.2 737.8 650.7 738.8 651.2 739.2C651.7 739.5 651.9 739.4 652.5 739.2C653.1 739 653.8 738.3 654.5 738C655.2 737.8 655.8 737.6 656.4 737.7C657.1 737.8 657.4 738 658 738.5C658.6 739 659.2 740.1 659.7 740.5C660.2 740.9 660.3 740.9 660.7 740.8C661.2 740.7 661.7 740.2 662.3 739.8C662.9 739.4 663.4 738.7 664 738.5C664.6 738.2 664.9 738.3 665.6 738.4C666.2 738.5 666.9 738.9 667.5 739C668.2 739.2 668.7 739.2 669.4 739.3C670.1 739.3 670.7 739.3 671.5 739.3C672.3 739.2 672.9 739.1 673.7 738.9C674.5 738.7 675.3 738.4 676.1 738.2C676.8 738 677.4 737.8 678 737.8C678.6 737.8 678.9 737.7 679.3 738.2C679.8 738.8 680.1 740.1 680.6 740.7C681.2 741.2 681.7 741.3 682.3 741.3C682.9 741.3 683.3 741.2 683.9 740.7C684.5 740.2 685 739.1 685.5 738.7C686 738.3 686.2 738.2 686.7 738.3C687.1 738.4 687.6 738.2 688.1 739.1C688.5 740 688.8 742.2 689.1 743.3C689.5 744.5 689.9 745.1 690.2 745.6C690.5 746 690.6 746 691 746C691.4 746 691.9 745.6 692.4 745.3C692.9 745 693.2 744.5 693.7 744.3C694.2 744.1 694.6 744 695.3 744C696 744 696.9 744.3 697.6 744.3C698.4 744.4 698.8 744.4 699.6 744.4C700.4 744.4 701.3 744.4 702.2 744.3C703.2 744.2 704 744.2 704.8 744C705.7 743.9 706.2 743.7 706.8 743.5C707.4 743.4 707.7 743.4 708.2 743.4C708.8 743.4 709.3 743.5 709.8 743.7C710.4 743.8 710.9 744.2 711.4 744.3C711.9 744.4 712 744.5 712.6 744.5C713.2 744.5 713.9 744.3 714.7 744.3C715.4 744.2 716.1 744.2 716.9 744.2C717.7 744.3 718.5 744.5 719.2 744.6C720 744.6 720.5 744.7 721.2 744.7C721.9 744.7 722.4 744.6 723.2 744.6C723.9 744.5 724.7 744.5 725.5 744.5C726.3 744.5 727 744.7 727.7 744.8C728.5 744.9 729.1 745.1 729.8 745C730.6 745 731.3 744.8 732.1 744.7C732.8 744.5 733.4 744.3 734.2 744.3C734.9 744.3 735.5 744.5 736.3 744.7C737 744.9 737.8 745.2 738.5 745.2C739.2 745.2 739.6 744.9 740.2 744.6C740.7 744.3 741 743.7 741.5 743.5C742 743.3 742.3 743.3 742.8 743.4C743.3 743.4 743.6 743.3 744.4 743.5C745.1 743.8 746.2 744.3 747.1 744.6C748 744.8 748.6 745 749.3 745.2C750.1 745.3 750.7 745.5 751.4 745.5C752.1 745.5 752.7 745.2 753.3 745C753.9 744.7 754.3 744.3 754.8 744.1C755.4 743.9 755.7 743.9 756.1 744C756.6 744.2 757.1 744.6 757.6 745C758.1 745.4 758.4 746.1 758.9 746.4C759.3 746.7 759.6 746.8 760.1 746.7C760.6 746.6 761.2 746.3 761.8 746C762.4 745.6 762.8 744.8 763.3 744.6C763.9 744.3 764.2 744.3 764.7 744.4C765.1 744.4 765.5 744.5 766 744.9C766.5 745.3 766.9 746.1 767.4 746.5C767.9 746.8 768.1 746.8 768.7 746.8C769.3 746.9 770.2 746.8 770.9 746.6C771.7 746.4 772.3 746.2 773 745.9C773.8 745.6 774.5 745.2 775.3 744.9C776 744.6 776.6 744.1 777.3 744.1C778.1 744 778.7 744.4 779.4 744.6C780.2 744.8 780.9 745.2 781.7 745.2C782.4 745.2 783 745 783.6 744.8C784.2 744.6 784.6 744.2 785.1 744C785.5 743.8 785.8 743.8 786.2 743.9C786.7 744 787.1 744 787.6 744.5C788.1 744.9 788.5 745.9 789 746.3C789.5 746.7 789.7 746.7 790.3 746.7C790.9 746.7 791.5 746.6 792.1 746.5C792.8 746.4 793.1 746.3 793.8 746.2C794.6 746.1 795.3 746.1 796.5 746C797.6 746 799.2 746 800.4 745.9C801.6 745.9 802.5 745.8 803.3 745.8C804 745.9 804.2 745.8 804.6 746.4C804.9 747.1 805.1 747.5 805.4 749.5C805.6 751.5 805.8 754.7 806 757.4C806.2 760.1 806.4 762.9 806.7 764.5C806.9 766.1 807.2 766.2 807.6 766.5C807.9 766.7 808.2 766.3 808.6 765.8C809.1 765.2 809.6 764.3 810.2 763.4C810.8 762.4 811.5 761.6 812.2 760.5C812.9 759.4 813.4 758.4 814.1 757.4C814.8 756.3 815.4 755.5 816.1 754.7C816.8 753.9 817.3 753.4 818.1 752.9C818.8 752.5 819.3 752.4 820 752.2C820.7 752.1 820.9 752 822 752.2C823 752.4 824.5 752.8 825.9 753.2C827.2 753.6 828.7 754.5 829.7 754.3C830.7 754.2 830.9 753.2 831.6 752.6C832.3 751.9 833 751 833.7 750.9C834.4 750.9 834.7 751.6 835.4 752.2C836.2 752.9 836.9 754.4 837.7 754.6C838.6 754.7 839.3 753.6 840.2 753.1C841 752.5 841.6 751.7 842.4 751.7C843.2 751.6 843.7 752.2 844.5 752.7C845.3 753.2 846 754.4 846.8 754.6C847.6 754.7 848.3 754 849.1 753.6C849.8 753.2 850 752.8 851.1 752.4C852.3 752 854.2 751.5 855.5 751.4C856.8 751.4 857.6 751.9 858.5 752C859.4 752.2 859.8 752.6 860.4 752.3C861 752 861.5 751.9 862 750.5C862.4 749.1 862.6 746.6 863 744.6C863.4 742.6 863.6 741.1 864.2 739.3C864.9 737.4 865.7 735.7 866.5 734.5C867.3 733.3 868 732.9 868.6 732.7C869.2 732.5 869.4 732.5 870 733.6C870.6 734.6 871.3 736.9 872.1 738.6C872.8 740.2 873.4 741.5 874.2 742.7C875 743.9 875.7 744.8 876.4 745.1C877.2 745.5 877.7 744.9 878.5 744.4C879.4 744 880.4 742.8 881.2 742.7C881.9 742.6 882.3 743.3 882.9 743.8C883.5 744.3 883.8 745.2 884.3 745.7C884.8 746.1 885 746.2 885.5 746.1C886.1 746 886.6 745.6 887.4 745.2C888.2 744.8 889.1 744 889.9 743.8C890.7 743.7 891.2 744.2 892 744.4C892.8 744.6 893.4 745.1 894.2 745.1C895.1 745.2 895.7 744.8 896.5 744.7C897.3 744.6 897.8 744.4 898.6 744.4C899.4 744.4 900.1 744.6 900.9 744.7C901.7 744.9 901.7 744.9 903 745.2C904.2 745.4 906.4 746.3 907.7 746.2C908.9 746.1 909.2 745.3 909.9 744.6C910.7 744 911.3 742.5 911.9 742.6C912.4 742.6 912.7 742.9 913.1 745C913.5 747 913.6 750.7 914 753.9C914.3 757.2 914.6 760.5 915 762.9C915.4 765.2 915.6 766.9 916.2 767C916.8 767.2 917.5 765.2 918.3 763.8C919.2 762.4 920.1 760.8 920.9 759.4C921.8 758 922.4 757 923.2 755.9C924 754.9 924.5 754.1 925.3 753.6C926.1 753.1 926.8 753.3 927.6 753.1C928.3 753 928.9 752.9 929.7 752.7C930.4 752.5 931.1 752.2 931.7 752C932.4 751.8 932.9 751.7 933.5 751.8C934.1 751.8 934.5 752.1 935.2 752.4C936 752.7 936.7 753.3 937.5 753.4C938.3 753.6 938.9 753.5 939.8 753.4C940.6 753.4 941.3 753.3 942.2 753.1C943.2 752.9 944.2 752.7 945 752.5C945.8 752.4 946.2 752.1 946.8 752.2C947.3 752.3 947.6 752.7 948.1 753.1C948.7 753.6 949 754.4 949.7 754.8C950.5 755.1 951.4 755 952.3 755.1C953.3 755.1 954 755.1 955 755.1C955.9 755.1 956.8 755.1 957.6 754.9C958.4 754.7 958.7 754.9 959.3 754C959.9 753.2 960.4 752.2 961.1 750.2C961.7 748.2 962.2 746 962.8 743.1C963.4 740.2 964 736.9 964.5 734.2C965.1 731.5 965.4 729.3 965.9 728C966.5 726.7 967 727.2 967.7 727C968.4 726.8 969 726.8 969.8 726.8C970.5 726.9 971.2 726.8 971.9 727.3C972.6 727.7 973.1 728.1 973.6 729.2C974.1 730.4 974.3 732.3 974.7 733.7C975.1 735.1 975.3 736.5 975.9 736.9C976.5 737.4 977.2 736.6 978.2 736.4C979.1 736.1 980.3 735.6 981.1 735.7C981.9 735.7 982 736.1 982.5 736.7C983 737.3 983.3 738.5 983.7 739C984.2 739.6 984.5 739.8 985.1 739.8C985.8 739.7 986.4 739.2 987.2 738.8C988.1 738.3 989.2 737.4 989.8 737.4C990.5 737.4 990.6 737.9 991.1 738.8C991.5 739.6 992 741.3 992.5 742C993 742.8 993.2 743.1 993.9 743C994.5 743 995.2 742.5 995.9 741.8C996.7 741 997.4 740.2 998.2 739.1C999 738 999.6 736.4 1000.3 735.6C1001.1 734.7 1001.7 734.1 1002.4 734.2C1003.1 734.2 1003.5 735.3 1004.3 735.8C1005.1 736.4 1005.9 737.1 1006.8 737.3C1007.6 737.5 1008.2 737.3 1009 737C1009.8 736.7 1010.6 736.4 1011.3 735.8C1012 735.2 1012.4 734.4 1013 733.7C1013.7 733 1014.4 732.2 1015.1 731.8C1015.9 731.4 1016.6 731.6 1017.4 731.5C1018.2 731.4 1018.7 731.6 1019.5 731.4C1020.3 731.3 1021 731.1 1021.8 730.7C1022.5 730.3 1022.8 730.3 1023.5 729.2C1024.3 728.1 1025.1 726.2 1026 724.7C1026.8 723.3 1027.5 722 1028.2 721.2C1029 720.4 1029.2 720.6 1030 720.3C1030.8 720 1032.1 719.9 1032.9 719.4C1033.7 718.8 1034 718 1034.4 717.2C1034.8 716.4 1034.8 715.5 1035.2 714.9C1035.5 714.3 1035.8 714.1 1036.3 713.9C1036.8 713.7 1037.1 713.8 1038 713.8C1039 713.7 1040.6 713.9 1041.5 713.7C1042.4 713.6 1042.8 713.6 1043.2 713.1C1043.7 712.5 1043.7 712.1 1044 710.9C1044.3 709.7 1044.4 707.9 1044.7 706.2C1045 704.5 1045.1 703 1045.5 701.5C1045.9 700 1046.5 699 1047 698C1047.5 696.9 1047.9 696.4 1048.4 695.6C1048.9 694.9 1049.3 694.5 1049.8 694.1C1050.2 693.7 1050.3 693.3 1050.7 693.6C1051 693.9 1051.3 695 1051.6 695.9C1051.8 696.8 1051.9 697.3 1052.1 698.7C1052.2 700.1 1052.4 702.2 1052.5 703.8C1052.7 705.5 1052.8 706.7 1053 707.8C1053.2 709 1053.4 709.6 1053.7 710.2C1053.9 710.8 1054.1 711 1054.5 711.1C1054.9 711.2 1055.4 710.9 1055.8 710.7C1056.3 710.6 1056.5 710.6 1057 710.5C1057.5 710.4 1058 710.1 1058.5 710.1C1059 710.1 1059.2 710 1059.6 710.3C1060.1 710.6 1060.4 710.9 1060.8 711.8C1061.2 712.8 1061.5 714.5 1061.9 715.7C1062.4 716.9 1062.9 718.1 1063.3 718.4C1063.8 718.8 1064 718.3 1064.5 717.7C1064.9 717.1 1065.2 716.4 1065.6 715C1066 713.7 1066.4 711.3 1066.8 710.1C1067.1 708.9 1067.3 708.3 1067.7 708.3C1068 708.3 1068.2 708.9 1068.6 710.2C1069 711.4 1069.2 713.8 1069.6 715.2C1070 716.6 1070.3 717.1 1070.8 717.7C1071.3 718.4 1071.4 718.4 1072.3 718.7C1073.1 718.9 1074.4 719 1075.4 719C1076.3 719.1 1077 719.1 1077.7 718.9C1078.4 718.8 1078.7 718.6 1079.2 718C1079.7 717.4 1080.1 716.6 1080.5 715.6C1081 714.5 1081.3 713.4 1081.7 712.1C1082.1 710.9 1082.3 709.7 1082.6 708.7C1082.9 707.7 1083.2 706.9 1083.5 706.4C1083.9 705.9 1084.2 705.8 1084.7 705.7C1085.1 705.6 1085.5 705.5 1085.9 706C1086.4 706.5 1086.8 707.8 1087.2 708.5C1087.6 709.2 1088 709.7 1088.4 710C1088.8 710.4 1089 710.4 1089.4 710.3C1089.8 710.2 1090.2 709.9 1090.7 709.5C1091.1 709 1091.5 708.2 1092 707.7C1092.5 707.3 1092.9 707.1 1093.4 707C1093.9 706.9 1094.5 706.9 1094.9 707.2C1095.3 707.5 1095.4 708.1 1095.7 708.7C1096 709.3 1096.3 709.9 1096.6 710.6C1097 711.4 1097.4 712.1 1097.8 712.9C1098.2 713.7 1098.5 714.4 1098.9 715.2C1099.3 716 1099.6 716.6 1100.1 717.1C1100.5 717.6 1100.6 717.9 1101.5 718.1C1102.3 718.4 1103.6 718.3 1104.7 718.3C1105.8 718.3 1106.8 718.4 1107.5 718.1C1108.3 717.9 1108.3 718.1 1108.8 717.1C1109.3 716.2 1109.9 714.1 1110.4 712.9C1111 711.7 1111.4 711.3 1111.9 710.6C1112.4 709.9 1112.8 709.6 1113.3 709.1C1113.8 708.6 1114.3 708.2 1114.8 707.9C1115.3 707.7 1115.6 707.6 1115.9 707.8C1116.3 708 1116.4 708.4 1116.7 709.1C1117 709.7 1117.2 710.3 1117.5 711.4C1117.9 712.4 1118.3 714 1118.7 714.8C1119.1 715.6 1119.2 715.7 1119.6 715.8C1120 715.8 1120.4 715.6 1120.8 715.2C1121.1 714.8 1121.3 714.3 1121.7 713.3C1122 712.3 1122.2 710.8 1122.6 709.8C1122.9 708.8 1123.3 708.2 1123.6 707.7C1124 707.3 1124.1 707.3 1124.4 707.5C1124.7 707.8 1125 708.2 1125.3 709.1C1125.7 710 1125.8 711 1126.2 712.5C1126.5 714 1126.7 716.1 1127.1 717.5C1127.4 718.9 1127.7 719.8 1128 720.4C1128.3 721 1128.3 720.9 1128.6 720.7C1128.8 720.6 1129.1 720.2 1129.5 719.4C1129.8 718.6 1130.1 717.3 1130.5 716.3C1130.9 715.3 1131.3 714.4 1131.7 713.9C1132.1 713.3 1132.4 713.2 1132.8 713.2C1133.2 713.2 1133.5 713.4 1134 713.9C1134.4 714.3 1134.7 714.9 1135.1 715.6C1135.5 716.2 1135.9 717.1 1136.3 717.5C1136.6 717.9 1136.8 718 1137.2 718C1137.5 717.9 1137.8 717.8 1138.2 717.1C1138.6 716.4 1138.9 715.2 1139.4 714.1C1139.8 712.9 1140.3 711.5 1140.9 710.6C1141.4 709.7 1141.8 709.5 1142.3 709.1C1142.9 708.7 1143.3 708.6 1144 708.4C1144.6 708.2 1145.3 707.9 1145.8 707.9C1146.3 708 1146.6 708 1146.9 708.7C1147.3 709.4 1147.6 710.4 1147.9 711.8C1148.2 713.1 1148.4 715 1148.7 716.3C1149 717.7 1149.2 718.5 1149.5 719C1149.7 719.6 1149.8 719.6 1150 719.4C1150.3 719.2 1150.5 718.8 1150.9 717.9C1151.2 716.9 1151.4 715.4 1151.8 714.1C1152.1 712.7 1152.3 711.5 1152.7 710.6C1153 709.7 1153.3 709.5 1153.7 709.3C1154.1 709 1154.5 708.9 1154.9 709.2C1155.2 709.4 1155.4 709.9 1155.8 710.6C1156.2 711.3 1156.4 712.4 1156.9 712.9C1157.5 713.5 1158.1 713.6 1158.7 713.7C1159.2 713.7 1159.5 713.4 1160 713.1C1160.6 712.8 1161 712.1 1161.5 711.8C1162.1 711.4 1162.6 711.2 1163 711.2C1163.5 711.2 1163.8 711.2 1164.2 711.8C1164.5 712.3 1164.6 713.1 1165 714.1C1165.3 715 1165.7 716.3 1166.1 717.1C1166.5 717.9 1166.8 718.2 1167.3 718.6C1167.8 719.1 1168.4 719.2 1169 719.4C1169.6 719.6 1170.1 719.6 1170.7 719.6C1171.3 719.6 1171.9 719.7 1172.4 719.2C1173 718.8 1173.2 718 1173.6 717.1C1174 716.2 1174.2 714.9 1174.5 714.1C1174.8 713.2 1175.1 712.8 1175.4 712.4C1175.8 712.1 1176 712.1 1176.4 712.2C1176.7 712.3 1176.9 712.5 1177.3 713.1C1177.6 713.7 1178 714.8 1178.4 715.6C1178.9 716.4 1179.3 717.2 1179.7 717.6C1180.1 718 1180.4 717.9 1180.7 717.7C1181.1 717.5 1181.3 717.2 1181.6 716.3C1182 715.5 1182.2 714.1 1182.6 712.9C1182.9 711.7 1183.1 710.4 1183.5 709.7C1183.8 708.9 1184.2 708.5 1184.5 708.5C1184.9 708.5 1185.1 708.6 1185.4 709.5C1185.7 710.3 1185.9 711.7 1186.2 713.3C1186.5 714.9 1186.8 716.8 1187.2 718.3C1187.5 719.7 1187.8 720.6 1188.1 721.3C1188.4 722 1188.5 722.3 1188.9 722.1C1189.2 721.9 1189.5 721.1 1189.9 720.2C1190.3 719.3 1190.6 718 1191.1 717.1C1191.5 716.2 1191.8 715.7 1192.2 715.3C1192.6 714.9 1192.9 714.8 1193.4 714.9C1193.8 715 1194.1 715.5 1194.5 716C1194.9 716.4 1195.1 717.2 1195.7 717.5C1196.2 717.8 1196.8 717.9 1197.5 717.9C1198.2 717.8 1198.8 717.5 1199.4 717.3C1200.1 717.1 1200.5 716.9 1201.2 716.8C1201.8 716.8 1202.4 716.8 1202.9 716.9C1203.4 717.1 1203.6 717.2 1204 717.7C1204.5 718.2 1204.8 719.1 1205.2 719.6C1205.6 720.1 1205.9 720.3 1206.3 720.3C1206.8 720.3 1207.3 720 1207.8 719.6C1208.3 719.2 1208.7 718.4 1209.2 718.1C1209.7 717.7 1210.1 717.5 1210.6 717.5C1211.1 717.4 1211.4 717.5 1211.8 717.8C1212.3 718.1 1212.7 718.8 1213.2 719.2C1213.7 719.6 1214.1 720 1214.6 720.1C1215.1 720.2 1215.5 720.4 1215.9 719.9C1216.2 719.3 1216.4 718.6 1216.7 717.1C1216.9 715.7 1217 713.5 1217.2 711.8C1217.5 710 1217.7 708.2 1218.1 707.2C1218.4 706.1 1218.9 706.1 1219.3 706.1C1219.7 706.1 1219.9 706.7 1220.4 707.2C1220.8 707.7 1221 708.4 1221.6 708.9C1222.2 709.4 1222.9 709.7 1223.6 709.7C1224.2 709.8 1224.6 709.6 1225.3 709.3C1226 708.9 1226.7 708.5 1227.6 707.9C1228.5 707.3 1229.4 706.6 1230.1 706C1230.8 705.4 1231.2 704.9 1231.6 704.6C1232.1 704.3 1232.3 704.1 1232.6 704.3C1233 704.5 1233.3 704.5 1233.6 705.6C1233.9 706.8 1234 708.7 1234.3 710.6C1234.5 712.5 1234.7 714.6 1234.9 716.3C1235.2 718.1 1235.5 719.7 1235.9 720.6C1236.2 721.4 1236.4 721.2 1236.8 721.1C1237.1 721 1237.3 720.7 1237.7 720C1238.1 719.3 1238.4 718 1238.8 717.3C1239.3 716.6 1239.7 716.2 1240.2 716C1240.7 715.7 1241 715.7 1241.6 715.7C1242.2 715.8 1242.9 715.9 1243.7 716.2C1244.4 716.4 1245 716.6 1245.7 717C1246.4 717.5 1246.9 718.4 1247.5 718.8C1248.1 719.3 1248.4 719.4 1249 719.4C1249.6 719.5 1250.1 719.2 1250.7 719.1C1251.4 719 1251.8 718.8 1252.5 718.7C1253.1 718.6 1253.7 718.6 1254.2 718.6C1254.7 718.7 1254.9 719 1255.3 719.2C1255.8 719.5 1256 719.7 1256.5 720C1257 720.2 1257.5 720.4 1258.2 720.6C1258.9 720.7 1259.6 720.7 1260.5 720.7C1261.4 720.8 1262 720.8 1263.4 720.8C1264.7 720.8 1266.6 720.7 1268 720.6C1269.3 720.5 1270 720.5 1270.8 720.4C1271.7 720.2 1272.2 720 1272.8 719.6C1273.4 719.2 1273.8 718.7 1274.3 717.9C1274.8 717.1 1275.3 716.3 1275.8 715.2C1276.3 714.1 1276.5 712.8 1276.9 711.8C1277.3 710.8 1277.5 710.1 1278 709.7C1278.4 709.2 1278.8 709.3 1279.5 709.2C1280.1 709.2 1280.9 709.2 1281.8 709.2C1282.6 709.2 1283.4 709.2 1284.1 709.4C1284.7 709.6 1285 709.6 1285.4 710.2C1285.9 710.9 1286 711.9 1286.4 712.9C1286.7 713.9 1286.9 715.1 1287.3 716C1287.6 716.8 1287.9 717.2 1288.4 717.7C1288.9 718.1 1289.4 718.2 1290 718.5C1290.7 718.7 1291.5 718.8 1292.1 718.9C1292.7 718.9 1293.1 719 1293.5 718.6C1293.9 718.3 1294.1 718.1 1294.4 717.1C1294.6 716.1 1294.7 714.7 1294.9 713.3C1295 711.8 1295.2 710.4 1295.4 709.1C1295.7 707.7 1296 706.5 1296.3 705.8C1296.7 705.2 1297.1 705.3 1297.5 705.3C1297.9 705.4 1298.1 705.5 1298.5 706C1299 706.6 1299.3 707.5 1299.9 708.3C1300.5 709.2 1301.1 709.9 1301.9 710.8C1302.6 711.7 1303.3 712.6 1304.2 713.5C1305 714.3 1305.7 715 1306.5 715.6C1307.2 716.2 1307.7 716.5 1308.4 716.8C1309.1 717.1 1309.7 717.1 1310.2 717C1310.8 717 1311.1 716.7 1311.6 716.3C1312.1 716 1312.5 715.4 1313 715.1C1313.5 714.8 1313.8 714.8 1314.3 714.7C1314.7 714.7 1315.2 714.8 1315.6 715C1316.1 715.3 1316.4 715.8 1316.8 716.2C1317.2 716.5 1317.6 717 1318.1 717.2C1318.5 717.4 1318.9 717.4 1319.4 717.3C1320 717.3 1320.4 717.2 1321 716.9C1321.7 716.6 1322.3 716.2 1322.9 715.6C1323.5 715 1323.9 714.3 1324.3 713.5C1324.7 712.7 1324.9 711.9 1325.2 711C1325.5 710.1 1325.6 709 1326 708.3C1326.3 707.7 1326.6 707.6 1327.1 707.4C1327.7 707.1 1328.1 707.2 1328.9 707.1C1329.6 707 1330.4 707 1331.2 707C1331.9 707 1332.4 706.9 1332.9 707.2C1333.3 707.5 1333.4 707.7 1333.7 708.7C1334 709.7 1334.1 711.2 1334.4 712.5C1334.7 713.8 1334.9 715.1 1335.3 716C1335.7 716.9 1336 717.2 1336.6 717.6C1337.2 717.9 1337.8 717.9 1338.6 718C1339.5 718 1340.5 718 1341.3 717.9C1342 717.8 1342.2 717.7 1342.6 717.3C1343.1 716.9 1343.2 716.3 1343.6 715.6C1343.9 714.9 1344.3 714.2 1344.7 713.5C1345.2 712.8 1345.5 712.3 1346.1 711.8C1346.6 711.2 1347.2 710.7 1347.8 710.2C1348.4 709.7 1349 709.4 1349.5 708.9C1350.1 708.3 1350.3 707.8 1350.7 707.2C1351.1 706.6 1351.4 706 1351.8 705.6C1352.3 705.3 1352.8 705.1 1353.3 705.1C1353.9 705 1354.4 705 1354.9 705.2C1355.5 705.3 1355.9 705.5 1356.4 705.8C1357 706.2 1357.4 706.5 1357.9 707.2C1358.4 707.8 1358.7 708.4 1359.1 709.5C1359.5 710.5 1359.8 711.8 1360.1 712.9C1360.5 714 1360.7 715.1 1361 715.8C1361.4 716.4 1361.6 716.5 1361.9 716.4C1362.3 716.4 1362.6 716.1 1362.9 715.6C1363.2 715.1 1363.3 714.1 1363.7 713.5C1364 712.9 1364.2 712.5 1364.7 712.1C1365.2 711.8 1365.5 711.8 1366.2 711.8C1366.9 711.7 1367.7 711.7 1368.5 711.8C1369.3 711.8 1369.8 711.9 1370.4 712.1C1371.1 712.3 1371.4 712.5 1371.9 712.9C1372.5 713.3 1372.9 713.8 1373.4 714.1C1373.9 714.5 1374.3 714.7 1374.8 714.8C1375.3 714.9 1375.7 714.9 1376.3 714.6C1376.9 714.4 1377.4 714 1378 713.5C1378.6 713 1379.1 712.6 1379.6 711.9C1380.2 711.3 1380.7 710.6 1381.1 709.8C1381.6 709.1 1381.9 708.3 1382.3 707.7C1382.7 707.2 1383 707 1383.4 706.9C1383.8 706.7 1384.2 706.8 1384.6 707.1C1385 707.4 1385.2 707.9 1385.6 708.7C1386 709.5 1386.2 710.7 1386.6 711.4C1387 712.1 1387.4 712.4 1387.8 712.6C1388.2 712.8 1388.5 712.7 1388.8 712.5C1389.2 712.3 1389.4 712.1 1389.7 711.4C1390.1 710.6 1390.3 709.4 1390.7 708.3C1391 707.2 1391.4 706.2 1391.8 705.3C1392.3 704.3 1392.7 703.7 1393.2 703C1393.7 702.2 1394.2 701.6 1394.7 701C1395.2 700.5 1395.6 700.3 1396.1 700.1C1396.6 699.9 1397 699.8 1397.4 700C1397.9 700.2 1398 700.2 1398.4 701C1398.7 701.9 1398.9 703.4 1399.2 704.9C1399.5 706.4 1399.7 708.3 1400 709.5C1400.3 710.6 1400.6 710.8 1400.9 711.1C1401.2 711.3 1401.5 711.2 1401.8 710.8C1402.1 710.4 1402.4 710 1402.7 709.1C1403.1 708.2 1403.4 706.6 1403.8 705.6C1404.2 704.7 1404.5 704.1 1404.9 703.7C1405.3 703.4 1405.7 703.4 1406.1 703.6C1406.4 703.9 1406.6 704.3 1407 704.9C1407.3 705.5 1407.7 706.3 1408.1 707C1408.6 707.7 1408.9 708.3 1409.5 708.9C1410.1 709.5 1410.6 710 1411.2 710.5C1411.8 710.9 1412.4 711.2 1412.9 711.4C1413.5 711.6 1414 711.6 1414.4 711.5C1414.9 711.4 1415.2 711.4 1415.6 710.8C1415.9 710.2 1416.1 709.1 1416.4 707.9C1416.7 706.8 1416.8 705.4 1417.1 704.5C1417.4 703.6 1417.6 703.4 1417.9 703.2C1418.2 702.9 1418.4 703 1418.8 703.2C1419.2 703.3 1419.5 703.6 1420 703.9C1420.4 704.2 1420.8 704.6 1421.3 704.8C1421.8 705 1422.2 705.1 1422.7 705.1C1423.2 705.1 1423.6 705 1424.2 704.8C1424.8 704.6 1425.4 704.3 1425.9 704.2C1426.5 704 1426.9 703.9 1427.4 704C1427.9 704.1 1428.2 704.1 1428.6 704.7C1428.9 705.2 1429.1 706.4 1429.4 707.2C1429.7 708 1429.9 708.7 1430.2 709.2C1430.5 709.6 1430.8 709.7 1431.1 709.7C1431.4 709.7 1431.7 709.6 1432 709.2C1432.4 708.7 1432.7 708.1 1433.1 707.4C1433.4 706.6 1433.8 705.6 1434.2 705.1C1434.6 704.5 1434.9 704.5 1435.4 704.5C1435.8 704.5 1436.1 704.7 1436.5 705.1C1436.9 705.5 1437.1 706.2 1437.4 706.8C1437.7 707.4 1437.9 707.9 1438.3 708.3C1438.8 708.7 1439.1 708.8 1439.7 708.9C1440.4 709 1441.2 709 1442 709C1442.8 709 1443.6 709 1444.3 708.9C1445 708.8 1445.3 708.8 1445.8 708.3C1446.3 707.9 1446.5 707.2 1446.8 706.4C1447.2 705.6 1447.4 704.4 1447.8 703.7C1448.1 703.1 1448.3 702.8 1448.7 702.7C1449 702.6 1449.4 702.6 1449.7 703C1450 703.4 1450.1 704 1450.4 704.9C1450.7 705.8 1450.9 707.1 1451.2 707.9C1451.5 708.7 1451.8 709.1 1452.1 709.4C1452.5 709.7 1452.8 709.7 1453.2 709.7C1453.5 709.6 1453.8 709.3 1454.3 709C1454.8 708.7 1455.2 708.2 1455.8 707.9C1456.4 707.5 1456.9 707.2 1457.5 707C1458.1 706.7 1458.6 706.6 1459.2 706.5C1459.9 706.4 1460 706.3 1461 706.3C1461.9 706.2 1463.3 706.2 1464.6 706.2C1465.9 706.2 1467 706.3 1468 706.2C1469.1 706.1 1469.7 706 1470.3 705.8C1471 705.5 1471.3 705.3 1471.7 704.9C1472.2 704.4 1472.5 703.8 1472.9 703.3C1473.3 702.9 1473.5 702.7 1474 702.6C1474.5 702.4 1475.1 702.4 1475.5 702.5C1475.9 702.6 1476.1 702.8 1476.4 703.3C1476.8 703.8 1477.1 704.7 1477.5 705.3C1477.8 705.8 1478 706.2 1478.4 706.5C1478.8 706.7 1479.2 706.7 1479.5 706.6C1479.9 706.5 1480.1 706.5 1480.4 706C1480.8 705.5 1481 704.8 1481.4 703.9C1481.7 703.1 1482 701.8 1482.4 701.2C1482.8 700.7 1483.2 700.7 1483.5 700.7C1483.9 700.7 1484.2 700.7 1484.5 701.2C1484.8 701.8 1485 702.9 1485.3 703.7C1485.6 704.6 1485.8 705.4 1486.2 706C1486.6 706.7 1486.9 707.1 1487.3 707.3C1487.8 707.4 1488.1 707.2 1488.5 706.9C1488.9 706.5 1489.2 705.8 1489.6 705.3C1490.1 704.8 1490.3 704.4 1490.8 704.1C1491.2 703.8 1491.7 703.7 1492.2 703.7C1492.7 703.7 1493 703.9 1493.5 704.1C1494.1 704.3 1494.5 704.8 1495 705.1C1495.6 705.3 1496.1 705.6 1496.5 705.6C1497 705.6 1497.3 705.4 1497.7 705.1C1498 704.7 1498.2 704 1498.5 703.5C1498.8 703 1499 702.6 1499.4 702.3C1499.8 702 1500.1 702 1500.8 701.9C1501.4 701.9 1502.3 701.8 1503.1 701.9C1503.8 701.9 1504.4 702 1505 702.2C1505.7 702.4 1506 702.5 1506.5 702.9C1507.1 703.3 1507.5 703.9 1508 704.3C1508.6 704.7 1509 705 1509.6 705.3C1510.3 705.7 1510.8 705.9 1511.7 706.2C1512.6 706.5 1513.5 706.9 1514.6 707.2C1515.6 707.4 1516.4 707.5 1517.4 707.7C1518.5 707.8 1519.4 707.8 1520.3 707.9C1521.2 707.9 1521.9 708 1522.6 707.9C1523.3 707.9 1523.6 707.8 1524 707.5C1524.4 707.3 1524.5 706.7 1524.9 706.4C1525.3 706.1 1525.6 705.9 1526.1 705.8C1526.5 705.7 1527 705.7 1527.4 705.9C1527.9 706.1 1528.1 706.3 1528.5 706.8C1528.8 707.3 1529.1 708.1 1529.5 708.5C1529.9 708.9 1530.2 709.1 1530.6 709.2C1531.1 709.2 1531.4 709.2 1531.8 708.9C1532.1 708.6 1532.3 708.2 1532.6 707.4C1532.9 706.5 1533.2 705 1533.5 704.3C1533.9 703.6 1534.1 703.5 1534.4 703.3C1534.8 703.1 1535 703.1 1535.6 703.2C1536.1 703.2 1536.7 703.3 1537.5 703.5C1538.4 703.7 1539.4 704 1540.4 704.3C1541.4 704.6 1542 704.7 1542.9 704.9C1543.9 705.2 1544.6 705.5 1545.6 705.9C1546.6 706.4 1547.5 706.8 1548.5 707.3C1549.4 707.7 1550 708.1 1550.8 708.4C1551.5 708.7 1551.9 708.8 1552.5 708.9C1553.1 708.9 1553.5 708.9 1554 708.7C1554.5 708.5 1554.9 708.1 1555.3 707.9C1555.8 707.6 1556.3 707.4 1556.7 707.4C1557.2 707.3 1557.6 707.3 1558 707.5C1558.4 707.8 1558.6 708.5 1559 708.9C1559.4 709.3 1559.8 709.6 1560.2 709.8C1560.6 710.1 1560.9 710.1 1561.3 710C1561.8 710 1562.1 709.7 1562.6 709.4C1563.1 709.1 1563.4 708.6 1564 708.4C1564.5 708.2 1564.9 708.2 1565.5 708.1C1566 708.1 1566.3 708.1 1566.8 708.2C1567.4 708.3 1567.8 708.6 1568.6 708.7C1569.3 708.8 1569.8 708.9 1570.9 708.9C1571.9 708.9 1573.3 708.9 1574.3 708.9C1575.3 708.9 1575.6 708.8 1576.3 708.7C1576.9 708.6 1577.5 708.4 1578.1 708.3C1578.7 708.3 1579.1 708.2 1579.5 708.4C1579.9 708.6 1580 709 1580.4 709.5C1580.7 709.9 1581 710.4 1581.4 710.7C1581.9 711 1582.4 711.1 1582.9 711.1C1583.4 711 1583.8 710.8 1584.3 710.5C1584.8 710.3 1585.1 709.8 1585.6 709.5C1586 709.3 1586.5 709.2 1586.9 709.2C1587.4 709.1 1587.7 709.1 1588.1 709.4C1588.5 709.7 1588.6 710.3 1589 710.8C1589.4 711.3 1589.7 711.7 1590.2 711.9C1590.6 712.2 1590.9 712.3 1591.5 712.3C1592.2 712.3 1593 712.1 1593.8 711.9C1594.7 711.8 1595.4 711.7 1596.1 711.4C1596.9 711.1 1597.3 710.6 1597.9 710.3C1598.4 710 1598.8 709.7 1599.2 709.5C1599.7 709.4 1600.1 709.3 1600.5 709.4C1600.9 709.5 1601.2 709.6 1601.6 709.9C1602.1 710.2 1602.4 710.7 1602.8 711C1603.2 711.3 1603.5 711.4 1603.9 711.5C1604.4 711.6 1604.8 711.6 1605.3 711.4C1605.9 711.2 1606.5 710.7 1607 710.4C1607.6 710.2 1607.9 710 1608.4 709.9C1608.9 709.8 1609.2 709.8 1609.7 709.9C1610.2 710 1610.5 710.2 1611.1 710.4C1611.6 710.6 1612 711 1612.6 711.1C1613.1 711.2 1613.4 711.2 1613.9 711.1C1614.4 711 1614.9 710.7 1615.3 710.4C1615.8 710.1 1616 709.5 1616.5 709.3C1616.9 709 1617.3 708.9 1617.7 708.9C1618.2 708.9 1618.5 709 1618.9 709.2C1619.3 709.4 1619.5 709.7 1619.9 710C1620.3 710.4 1620.7 710.7 1621.2 711C1621.7 711.3 1622.1 711.6 1622.8 711.8C1623.4 712.1 1624.2 712.3 1624.8 712.4C1625.5 712.5 1626.1 712.6 1626.6 712.5C1627.1 712.4 1627.3 712.3 1627.7 711.9C1628.1 711.6 1628.3 711.1 1628.6 710.6C1629 710.2 1629.3 709.7 1629.7 709.5C1630.1 709.2 1630.5 709.2 1630.9 709.2C1631.4 709.2 1631.8 709.2 1632.3 709.5C1632.8 709.7 1633.2 710 1633.7 710.4C1634.1 710.8 1634.5 711.2 1634.8 711.8C1635.2 712.3 1635.5 712.8 1635.8 713.7C1636.1 714.5 1636.2 715.3 1636.5 716.3C1636.7 717.4 1636.7 718.2 1636.9 719.4C1637.1 720.6 1637.2 722.1 1637.5 722.9C1637.7 723.6 1638 723.6 1638.3 723.8C1638.6 724 1638.8 724.1 1639.2 724C1639.6 723.9 1640.1 723.6 1640.6 723.3C1641.1 723 1641.6 722.6 1642.1 722.3C1642.6 722.1 1643 721.9 1643.5 721.9C1643.9 721.8 1644.3 721.8 1644.7 721.9C1645.2 722.1 1645.5 722.3 1645.9 722.6C1646.3 723 1646.6 723.4 1647 723.9C1647.5 724.4 1648 724.9 1648.4 725.3C1648.8 725.7 1648.9 725.8 1649.2 726.1C1649.5 726.5 1649.8 726.9 1650.1 727.2C1650.4 727.5 1650.4 727.7 1650.9 727.7C1651.5 727.8 1652.3 727.7 1653.2 727.7C1654.1 727.6 1655.3 727.4 1656.1 727.3C1656.9 727.2 1657.3 727.2 1657.8 727.3C1658.3 727.5 1658.5 727.9 1659 728.2C1659.4 728.4 1659.6 728.6 1660.1 728.8C1660.6 728.9 1661.1 729 1661.6 728.9C1662.1 728.8 1662.4 728.6 1662.7 728.1C1663.1 727.7 1663.4 727 1663.8 726.6C1664.2 726.2 1664.5 726.1 1664.9 726C1665.3 725.9 1665.7 725.9 1666.1 726.2C1666.4 726.5 1666.5 727.1 1666.8 727.9C1667 728.8 1667.3 730.2 1667.6 731.1C1667.9 731.9 1668.1 732.2 1668.5 732.5C1668.9 732.9 1669.2 732.9 1669.6 732.9C1670.1 732.8 1670.3 732.5 1670.8 732.1C1671.2 731.8 1671.7 731.2 1672.2 730.8C1672.7 730.5 1673 730.5 1673.5 730.5C1674.1 730.4 1674.4 730.5 1675 730.6C1675.7 730.7 1676.4 730.9 1677.3 731C1678.3 731.1 1679.2 731.2 1680.2 731.1C1681.2 731.1 1682.1 730.9 1683.1 730.7C1684 730.5 1684.5 730.3 1685.4 729.9C1686.2 729.6 1686.9 729.3 1687.7 728.9C1688.4 728.6 1689 728.3 1689.6 728.1C1690.3 727.9 1690.8 727.7 1691.3 727.7C1691.9 727.7 1692.4 727.7 1692.8 728C1693.3 728.3 1693.4 728.9 1693.8 729.5C1694.1 730 1694.5 730.6 1694.9 731.2C1695.4 731.8 1695.8 732.2 1696.3 732.8C1696.8 733.3 1697.2 733.9 1697.7 734.3C1698.1 734.7 1698.3 734.9 1698.8 735C1699.4 735.2 1700.1 735.3 1700.7 735.1C1701.2 735 1701.4 734.5 1701.8 734.1C1702.2 733.7 1702.5 733.2 1703 732.7C1703.4 732.3 1703.9 732.1 1704.6 731.9C1705.2 731.6 1705.8 731.6 1706.6 731.5C1707.4 731.5 1708 731.5 1708.9 731.5C1709.9 731.5 1710.8 731.5 1711.8 731.5C1712.8 731.6 1713.5 731.7 1714.4 731.8C1715.4 732 1716.1 732.2 1717 732.5C1717.8 732.8 1718.4 733.2 1719 733.5C1719.7 733.8 1719.9 734 1720.6 734.2C1721.3 734.3 1721.8 734.4 1722.9 734.5C1724 734.5 1725.7 734.5 1726.7 734.4C1727.8 734.3 1728 734.1 1728.7 733.9C1729.4 733.6 1729.9 733.4 1730.8 733.1C1731.6 732.8 1732.5 732.6 1733.3 732.4C1734.1 732.2 1734.5 732.1 1735.3 732C1736.2 731.9 1737.1 731.9 1737.9 731.8C1738.6 731.7 1739.1 731.6 1739.6 731.3C1740.1 731 1740.4 730.7 1740.9 730.2C1741.3 729.6 1741.6 728.9 1742 728.4C1742.4 728 1742.8 727.7 1743.2 727.7C1743.6 727.6 1743.9 727.6 1744.2 728C1744.5 728.5 1744.6 729.1 1744.8 730.2C1745 731.2 1745.1 732.5 1745.3 733.7C1745.6 734.8 1745.8 736 1746 736.8C1746.3 737.6 1746.5 737.8 1746.8 738C1747.1 738.3 1747.4 738.3 1747.8 738.1C1748.1 737.9 1748.3 737.6 1748.7 737C1749 736.4 1749.2 735.4 1749.6 734.8C1749.9 734.2 1750.1 734 1750.6 733.7C1751.1 733.5 1751.6 733.4 1752.3 733.5C1753.1 733.5 1753.7 733.6 1754.6 733.8C1755.6 734 1756.8 734.2 1757.7 734.3C1758.7 734.4 1759.3 734.6 1760 734.6C1760.8 734.6 1761.3 734.5 1761.8 734.3C1762.3 734 1762.5 733.5 1762.9 733.2C1763.3 732.9 1763.5 732.7 1764.1 732.6C1764.6 732.5 1765.3 732.4 1765.8 732.6C1766.3 732.8 1766.5 733.2 1766.9 733.6C1767.4 734.1 1767.7 734.7 1768.1 735C1768.5 735.3 1768.8 735.5 1769.2 735.5C1769.6 735.5 1770 735.6 1770.4 735.1C1770.7 734.6 1770.9 733.7 1771.2 732.8C1771.5 731.9 1771.7 730.8 1772 730.1C1772.3 729.5 1772.6 729.4 1772.9 729.2C1773.3 729.1 1773.6 729.2 1773.9 729.4C1774.3 729.7 1774.6 730.2 1775 730.7C1775.3 731.2 1775.5 731.8 1775.9 732.1C1776.3 732.5 1776.6 732.5 1777.3 732.6C1777.9 732.7 1778.5 732.5 1779.6 732.5C1780.6 732.4 1781.6 732.4 1783 732.3C1784.5 732.3 1786.2 732.2 1787.6 732.2C1789.1 732.1 1790 732.1 1791.1 732.2C1792.1 732.2 1792.5 732.3 1793.4 732.5C1794.2 732.7 1794.8 732.9 1795.7 733.2C1796.5 733.5 1797.1 733.7 1798 734C1798.8 734.2 1799.4 734.4 1800.3 734.7C1801.1 734.9 1801.7 735 1802.6 735.2C1803.4 735.5 1804.2 735.6 1804.8 735.9C1805.5 736.2 1805.8 736.5 1806.3 736.7C1806.9 736.9 1807.2 737 1807.7 737.1C1808.2 737.1 1808.6 737.1 1809.1 737C1809.6 736.8 1809.8 736.3 1810.2 736.1C1810.7 735.8 1811.1 735.7 1811.7 735.6C1812.4 735.5 1813.2 735.4 1814 735.5C1814.9 735.5 1815.6 735.5 1816.3 735.7C1817.1 736 1817.5 736.3 1818.1 736.7C1818.6 737.1 1818.8 737.7 1819.2 738C1819.6 738.4 1819.9 738.5 1820.4 738.7C1820.8 738.8 1821.3 738.9 1821.8 738.8C1822.4 738.7 1822.8 738.6 1823.5 738.3C1824.1 738.1 1824.8 737.6 1825.5 737.2C1826.2 736.9 1826.9 736.6 1827.5 736.3C1828.1 736 1828.5 735.8 1829 735.6C1829.5 735.5 1830 735.4 1830.4 735.6C1830.7 735.7 1830.8 736 1831 736.7C1831.3 737.3 1831.5 738.2 1831.8 739C1832.2 739.8 1832.3 740.6 1832.8 741.1C1833.2 741.6 1833.5 741.6 1834.1 741.7C1834.8 741.8 1835.6 741.8 1836.4 741.8C1837.3 741.9 1838.1 741.8 1839 741.9C1839.8 742 1840.4 742.3 1841.3 742.5C1842.2 742.7 1842.9 742.8 1843.9 742.9C1844.9 743 1846 743.1 1846.8 743.1C1847.6 743 1847.9 743 1848.5 742.8C1849.1 742.5 1849.5 742 1850 741.7C1850.5 741.4 1850.7 741.3 1851.1 741.2C1851.6 741.1 1852 741.1 1852.5 741.3C1853 741.5 1853.4 741.8 1853.9 742.1C1854.4 742.5 1854.6 742.9 1855 743.4C1855.5 743.9 1856 744.6 1856.2 744.9" fill="none" stroke="#19be5b" stroke-width="2" stroke-linejoin="round" stroke-linecap="round"/>
<path d="M613.2 747.2C614 747 616 746.3 617.6 746.1C619.1 745.9 620.3 745.9 621.9 746C623.4 746 624.6 746 626.2 746.3C627.7 746.6 629 747.2 630.5 747.7C632.1 748.2 633.7 749.1 634.8 748.9C636 748.7 636.3 747.4 637.1 746.7C637.8 746 638 745.3 639.1 744.9C640.3 744.5 642.2 744.7 643.5 744.5C644.7 744.3 645.2 743.9 646 743.7C646.7 743.5 647.1 743.4 647.8 743.4C648.4 743.5 649 743.7 649.6 744.1C650.2 744.6 650.7 745.5 651.2 745.8C651.7 746.1 651.9 746.1 652.5 745.9C653.1 745.7 653.8 745.1 654.5 744.8C655.2 744.5 655.8 744.4 656.4 744.5C657.1 744.6 657.4 744.8 658 745.2C658.6 745.7 659.2 746.7 659.7 747.1C660.2 747.5 660.3 747.5 660.7 747.4C661.2 747.3 661.7 746.9 662.3 746.5C662.9 746.1 663.4 745.5 664 745.3C664.6 745.1 664.9 745.1 665.6 745.2C666.2 745.3 666.9 745.7 667.5 745.8C668.2 746 668.7 746 669.4 746.1C670.1 746.1 670.7 746.1 671.5 746.1C672.3 746 672.9 745.9 673.7 745.8C674.5 745.6 675.3 745.4 676.1 745.2C676.8 745 677.4 744.8 678 744.8C678.6 744.8 678.9 744.7 679.3 745.2C679.8 745.7 680.1 746.9 680.6 747.5C681.2 748 681.7 748.1 682.3 748.1C682.9 748.1 683.3 747.9 683.9 747.5C684.5 747.1 685 746 685.5 745.7C686 745.3 686.2 745.3 686.7 745.3C687.1 745.4 687.6 745.3 688.1 746.1C688.5 746.9 688.8 748.9 689.1 750C689.5 751.1 689.9 751.6 690.2 752C690.5 752.5 690.6 752.5 691 752.5C691.4 752.4 691.9 752.1 692.4 751.9C692.9 751.6 693.2 751.1 693.7 750.9C694.2 750.7 694.6 750.7 695.3 750.7C696 750.7 696.9 750.9 697.6 751C698.4 751 698.8 751 699.6 751C700.4 751 701.3 751 702.2 751C703.2 750.9 704 750.9 704.8 750.8C705.7 750.6 706.2 750.4 706.8 750.3C707.4 750.2 707.7 750.2 708.2 750.2C708.8 750.2 709.3 750.3 709.8 750.5C710.4 750.6 710.9 750.9 711.4 751.1C711.9 751.2 712 751.2 712.6 751.2C713.2 751.2 713.9 751.1 714.7 751.1C715.4 751 716.1 751 716.9 751C717.7 751.1 718.5 751.3 719.2 751.4C720 751.4 720.5 751.5 721.2 751.5C721.9 751.5 722.4 751.4 723.2 751.4C723.9 751.4 724.7 751.3 725.5 751.3C726.3 751.3 727 751.5 727.7 751.5C728.5 751.6 729.1 751.8 729.8 751.8C730.6 751.7 731.3 751.5 732.1 751.4C732.8 751.3 733.4 751.1 734.2 751.1C734.9 751.1 735.5 751.2 736.3 751.4C737 751.5 737.8 751.8 738.5 751.8C739.2 751.8 739.6 751.5 740.2 751.3C740.7 751 741 750.4 741.5 750.2C742 750 742.3 750.1 742.8 750.1C743.3 750.1 743.6 750 744.4 750.2C745.1 750.4 746.2 750.9 747.1 751.1C748 751.4 748.6 751.5 749.3 751.7C750.1 751.8 750.7 752 751.4 751.9C752.1 751.9 752.7 751.7 753.3 751.5C753.9 751.2 754.3 750.8 754.8 750.6C755.4 750.5 755.7 750.4 756.1 750.6C756.6 750.7 757.1 751.1 757.6 751.5C758.1 751.8 758.4 752.4 758.9 752.7C759.3 753 759.6 753 760.1 753C760.6 752.9 761.2 752.6 761.8 752.3C762.4 751.9 762.8 751.2 763.3 751C763.9 750.7 764.2 750.7 764.7 750.8C765.1 750.8 765.5 750.9 766 751.3C766.5 751.6 766.9 752.4 767.4 752.7C767.9 753 768.1 753 768.7 753C769.3 753 770.2 752.9 770.9 752.8C771.7 752.6 772.3 752.4 773 752.1C773.8 751.8 774.5 751.4 775.3 751.1C776 750.8 776.6 750.4 777.3 750.4C778.1 750.3 778.7 750.7 779.4 750.8C780.2 751 780.9 751.3 781.7 751.4C782.4 751.4 783 751.2 783.6 751C784.2 750.8 784.6 750.4 785.1 750.2C785.5 750.1 785.8 750 786.2 750.1C786.7 750.2 787.1 750.2 787.6 750.6C788.1 751 788.5 752 789 752.3C789.5 752.7 789.7 752.7 790.3 752.7C790.9 752.7 791.5 752.6 792.1 752.5C792.8 752.4 793.1 752.2 793.8 752.1C794.6 752.1 795.3 752 796.5 752C797.6 751.9 799.2 751.9 800.4 751.9C801.6 751.8 802.5 751.7 803.3 751.7C804 751.8 804.2 751.6 804.6 752.3C804.9 752.9 805.1 753.3 805.4 755.1C805.6 757 805.8 760 806 762.5C806.2 765 806.4 767.5 806.7 769C806.9 770.5 807.2 770.6 807.6 770.8C807.9 771.1 808.2 770.7 808.6 770.2C809.1 769.7 809.6 768.9 810.2 768C810.8 767.1 811.5 766.3 812.2 765.3C812.9 764.3 813.4 763.4 814.1 762.4C814.8 761.5 815.4 760.7 816.1 760C816.8 759.2 817.3 758.7 818.1 758.3C818.8 757.9 819.3 757.8 820 757.7C820.7 757.5 820.9 757.5 822 757.7C823 757.8 824.5 758.2 825.9 758.6C827.2 759 828.7 759.8 829.7 759.7C830.7 759.6 830.9 758.6 831.6 758C832.3 757.5 833 756.6 833.7 756.5C834.4 756.5 834.7 757.1 835.4 757.7C836.2 758.3 836.9 759.8 837.7 759.9C838.6 760.1 839.3 759 840.2 758.5C841 758.1 841.6 757.3 842.4 757.3C843.2 757.2 843.7 757.8 844.5 758.2C845.3 758.7 846 759.8 846.8 760C847.6 760.1 848.3 759.4 849.1 759C849.8 758.7 850 758.3 851.1 757.9C852.3 757.6 854.2 757.1 855.5 757.1C856.8 757 857.6 757.5 858.5 757.6C859.4 757.8 859.8 758.1 860.4 757.9C861 757.6 861.5 757.5 862 756.2C862.4 755 862.6 752.6 863 750.8C863.4 748.9 863.6 747.5 864.2 745.8C864.9 744.2 865.7 742.6 866.5 741.5C867.3 740.4 868 740 868.6 739.8C869.2 739.7 869.4 739.6 870 740.6C870.6 741.6 871.3 743.7 872.1 745.3C872.8 746.8 873.4 748 874.2 749.1C875 750.2 875.7 751.1 876.4 751.4C877.2 751.7 877.7 751.1 878.5 750.7C879.4 750.3 880.4 749.2 881.2 749.1C881.9 749 882.3 749.6 882.9 750.1C883.5 750.6 883.8 751.5 884.3 751.9C884.8 752.3 885 752.4 885.5 752.3C886.1 752.2 886.6 751.8 887.4 751.5C888.2 751.1 889.1 750.3 889.9 750.2C890.7 750.1 891.2 750.5 892 750.7C892.8 751 893.4 751.4 894.2 751.4C895.1 751.5 895.7 751.2 896.5 751C897.3 750.9 897.8 750.7 898.6 750.8C899.4 750.8 900.1 751 900.9 751.2C901.7 751.3 901.7 751.4 903 751.8C904.2 752.1 906.4 753.1 907.7 753.2C908.9 753.2 909.2 752.5 909.9 752C910.7 751.5 911.3 750.2 911.9 750.3C912.4 750.4 912.7 750.7 913.1 752.6C913.5 754.5 913.6 757.9 914 760.8C914.3 763.8 914.6 766.8 915 769C915.4 771.2 915.6 772.7 916.2 772.8C916.8 773 917.5 771.1 918.3 769.8C919.2 768.6 920.1 767.1 920.9 765.7C921.8 764.4 922.4 763.4 923.2 762.4C924 761.5 924.5 760.7 925.3 760.2C926.1 759.7 926.8 759.9 927.6 759.7C928.3 759.5 928.9 759.4 929.7 759.2C930.4 759 931.1 758.6 931.7 758.4C932.4 758.2 932.9 758.1 933.5 758.1C934.1 758.2 934.5 758.4 935.2 758.6C936 758.9 936.7 759.3 937.5 759.5C938.3 759.6 938.9 759.4 939.8 759.3C940.6 759.3 941.3 759.2 942.2 759C943.2 758.8 944.2 758.6 945 758.5C945.8 758.3 946.2 758.1 946.8 758.2C947.3 758.3 947.6 758.6 948.1 759C948.7 759.4 949 760.2 949.7 760.5C950.5 760.8 951.4 760.7 952.3 760.8C953.3 760.8 954 760.8 955 760.8C955.9 760.7 956.8 760.8 957.6 760.6C958.4 760.4 958.7 760.6 959.3 759.8C959.9 759 960.4 758 961.1 756.2C961.7 754.4 962.2 752.3 962.8 749.6C963.4 747 964 743.9 964.5 741.4C965.1 738.9 965.4 736.9 965.9 735.7C966.5 734.5 967 734.9 967.7 734.7C968.4 734.5 969 734.5 969.8 734.6C970.5 734.6 971.2 734.6 971.9 734.9C972.6 735.3 973.1 735.7 973.6 736.7C974.1 737.8 974.3 739.6 974.7 740.8C975.1 742.1 975.3 743.4 975.9 743.8C976.5 744.3 977.2 743.5 978.2 743.3C979.1 743.1 980.3 742.6 981.1 742.6C981.9 742.7 982 743 982.5 743.5C983 744.1 983.3 745.2 983.7 745.7C984.2 746.2 984.5 746.4 985.1 746.4C985.8 746.3 986.4 745.8 987.2 745.4C988.1 745 989.2 744.2 989.8 744.2C990.5 744.2 990.6 744.6 991.1 745.4C991.5 746.2 992 747.7 992.5 748.4C993 749.1 993.2 749.4 993.9 749.3C994.5 749.3 995.2 748.8 995.9 748.1C996.7 747.5 997.4 746.7 998.2 745.7C999 744.6 999.6 743.2 1000.3 742.4C1001.1 741.5 1001.7 741 1002.4 741.1C1003.1 741.1 1003.5 742.1 1004.3 742.6C1005.1 743.1 1005.9 743.7 1006.8 743.9C1007.6 744.1 1008.2 743.9 1009 743.6C1009.8 743.4 1010.6 743.1 1011.3 742.5C1012 742 1012.4 741.2 1013 740.6C1013.7 739.9 1014.4 739.2 1015.1 738.8C1015.9 738.4 1016.6 738.5 1017.4 738.5C1018.2 738.4 1018.7 738.5 1019.5 738.4C1020.3 738.3 1021 738.1 1021.8 737.7C1022.5 737.3 1022.8 737.3 1023.5 736.3C1024.3 735.3 1025.1 733.5 1026 732.2C1026.8 730.8 1027.5 729.6 1028.2 728.8C1029 728.1 1029.2 728.3 1030 728C1030.8 727.7 1032.1 727.6 1032.9 727.1C1033.7 726.6 1034 725.9 1034.4 725.1C1034.8 724.3 1034.8 723.5 1035.2 722.9C1035.5 722.4 1035.8 722.2 1036.3 722C1036.8 721.8 1037.1 721.9 1038 721.9C1039 721.8 1040.6 721.9 1041.5 721.8C1042.4 721.7 1042.8 721.6 1043.2 721.2C1043.7 720.7 1043.7 720.3 1044 719.2C1044.3 718 1044.4 716.4 1044.7 714.8C1045 713.2 1045.1 711.8 1045.5 710.4C1045.9 709 1046.5 708 1047 706.9C1047.5 705.8 1047.9 705.2 1048.4 704.4C1048.9 703.6 1049.3 703 1049.8 702.6C1050.2 702.2 1050.3 701.8 1050.7 702.1C1051 702.4 1051.3 703.3 1051.6 704.2C1051.8 705 1051.9 705.5 1052.1 706.8C1052.2 708.1 1052.4 710.1 1052.5 711.6C1052.7 713.1 1052.8 714.2 1053 715.3C1053.2 716.4 1053.4 717 1053.7 717.5C1053.9 718.1 1054.1 718.3 1054.5 718.4C1054.9 718.4 1055.4 718.1 1055.8 717.9C1056.3 717.8 1056.5 717.8 1057 717.7C1057.5 717.6 1058 717.3 1058.5 717.2C1059 717.2 1059.2 717.1 1059.6 717.4C1060.1 717.7 1060.4 717.9 1060.8 718.8C1061.2 719.7 1061.5 721.3 1061.9 722.4C1062.4 723.5 1062.9 724.6 1063.3 724.9C1063.8 725.3 1064 724.8 1064.5 724.2C1064.9 723.6 1065.2 723 1065.6 721.7C1066 720.4 1066.4 718.2 1066.8 717C1067.1 715.9 1067.3 715.3 1067.7 715.3C1068 715.3 1068.2 715.9 1068.6 717.1C1069 718.2 1069.2 720.5 1069.6 721.8C1070 723.1 1070.3 723.6 1070.8 724.2C1071.3 724.7 1071.4 724.8 1072.3 725C1073.1 725.2 1074.4 725.3 1075.4 725.3C1076.3 725.4 1077 725.4 1077.7 725.2C1078.4 725 1078.7 724.9 1079.2 724.3C1079.7 723.7 1080.1 723 1080.5 722C1081 721 1081.3 719.9 1081.7 718.7C1082.1 717.6 1082.3 716.5 1082.6 715.5C1082.9 714.5 1083.2 713.8 1083.5 713.3C1083.9 712.8 1084.2 712.7 1084.7 712.7C1085.1 712.6 1085.5 712.5 1085.9 713C1086.4 713.4 1086.8 714.6 1087.2 715.3C1087.6 716 1088 716.4 1088.4 716.8C1088.8 717.1 1089 717.1 1089.4 717C1089.8 716.9 1090.2 716.6 1090.7 716.2C1091.1 715.8 1091.5 715 1092 714.6C1092.5 714.2 1092.9 714 1093.4 713.9C1093.9 713.8 1094.5 713.8 1094.9 714C1095.3 714.3 1095.4 714.9 1095.7 715.5C1096 716.1 1096.3 716.6 1096.6 717.3C1097 718 1097.4 718.7 1097.8 719.5C1098.2 720.2 1098.5 720.9 1098.9 721.6C1099.3 722.3 1099.6 722.9 1100.1 723.4C1100.5 723.9 1100.6 724.2 1101.5 724.4C1102.3 724.6 1103.6 724.6 1104.7 724.6C1105.8 724.6 1106.8 724.6 1107.5 724.4C1108.3 724.2 1108.3 724.3 1108.8 723.4C1109.3 722.5 1109.9 720.6 1110.4 719.5C1111 718.4 1111.4 717.9 1111.9 717.3C1112.4 716.6 1112.8 716.3 1113.3 715.9C1113.8 715.4 1114.3 715 1114.8 714.8C1115.3 714.6 1115.6 714.5 1115.9 714.7C1116.3 714.9 1116.4 715.2 1116.7 715.9C1117 716.5 1117.2 717 1117.5 718C1117.9 719 1118.3 720.5 1118.7 721.3C1119.1 722 1119.2 722.1 1119.6 722.2C1120 722.2 1120.4 722 1120.8 721.6C1121.1 721.2 1121.3 720.7 1121.7 719.8C1122 718.9 1122.2 717.5 1122.6 716.6C1122.9 715.6 1123.3 715 1123.6 714.6C1124 714.2 1124.1 714.2 1124.4 714.4C1124.7 714.6 1125 715 1125.3 715.9C1125.7 716.7 1125.8 717.7 1126.2 719.1C1126.5 720.5 1126.7 722.5 1127.1 723.8C1127.4 725.1 1127.7 725.9 1128 726.5C1128.3 727 1128.3 727 1128.6 726.9C1128.8 726.7 1129.1 726.3 1129.5 725.6C1129.8 724.8 1130.1 723.6 1130.5 722.7C1130.9 721.8 1131.3 720.9 1131.7 720.4C1132.1 719.8 1132.4 719.7 1132.8 719.7C1133.2 719.7 1133.5 720 1134 720.4C1134.4 720.8 1134.7 721.4 1135.1 722C1135.5 722.6 1135.9 723.4 1136.3 723.8C1136.6 724.2 1136.8 724.3 1137.2 724.2C1137.5 724.2 1137.8 724.1 1138.2 723.4C1138.6 722.8 1138.9 721.6 1139.4 720.5C1139.8 719.4 1140.3 718.1 1140.9 717.3C1141.4 716.4 1141.8 716.2 1142.3 715.9C1142.9 715.5 1143.3 715.4 1144 715.2C1144.6 715 1145.3 714.7 1145.8 714.8C1146.3 714.8 1146.6 714.8 1146.9 715.5C1147.3 716.1 1147.6 717.1 1147.9 718.4C1148.2 719.7 1148.4 721.5 1148.7 722.7C1149 723.9 1149.2 724.7 1149.5 725.2C1149.7 725.7 1149.8 725.8 1150 725.6C1150.3 725.4 1150.5 725.1 1150.9 724.1C1151.2 723.2 1151.4 721.8 1151.8 720.5C1152.1 719.3 1152.3 718.1 1152.7 717.3C1153 716.5 1153.3 716.3 1153.7 716C1154.1 715.8 1154.5 715.7 1154.9 715.9C1155.2 716.2 1155.4 716.7 1155.8 717.3C1156.2 717.9 1156.4 718.9 1156.9 719.5C1157.5 720 1158.1 720.1 1158.7 720.2C1159.2 720.2 1159.5 720 1160 719.6C1160.6 719.3 1161 718.7 1161.5 718.4C1162.1 718.1 1162.6 717.8 1163 717.8C1163.5 717.8 1163.8 717.9 1164.2 718.4C1164.5 718.9 1164.6 719.6 1165 720.5C1165.3 721.4 1165.7 722.6 1166.1 723.4C1166.5 724.2 1166.8 724.5 1167.3 724.9C1167.8 725.3 1168.4 725.4 1169 725.6C1169.6 725.8 1170.1 725.8 1170.7 725.8C1171.3 725.7 1171.9 725.8 1172.4 725.4C1173 725 1173.2 724.3 1173.6 723.4C1174 722.5 1174.2 721.3 1174.5 720.5C1174.8 719.7 1175.1 719.3 1175.4 719C1175.8 718.7 1176 718.7 1176.4 718.8C1176.7 718.9 1176.9 719.1 1177.3 719.6C1177.6 720.2 1178 721.2 1178.4 722C1178.9 722.7 1179.3 723.5 1179.7 723.9C1180.1 724.2 1180.4 724.2 1180.7 724C1181.1 723.8 1181.3 723.5 1181.6 722.7C1182 721.9 1182.2 720.6 1182.6 719.5C1182.9 718.3 1183.1 717.1 1183.5 716.4C1183.8 715.6 1184.2 715.3 1184.5 715.3C1184.9 715.3 1185.1 715.4 1185.4 716.2C1185.7 717 1185.9 718.3 1186.2 719.8C1186.5 721.3 1186.8 723.1 1187.2 724.5C1187.5 725.9 1187.8 726.7 1188.1 727.4C1188.4 728 1188.5 728.3 1188.9 728.1C1189.2 727.9 1189.5 727.2 1189.9 726.3C1190.3 725.5 1190.6 724.3 1191.1 723.4C1191.5 722.6 1191.8 722.1 1192.2 721.7C1192.6 721.3 1192.9 721.2 1193.4 721.3C1193.8 721.5 1194.1 721.9 1194.5 722.3C1194.9 722.8 1195.1 723.5 1195.7 723.8C1196.2 724.1 1196.8 724.2 1197.5 724.1C1198.2 724.1 1198.8 723.8 1199.4 723.6C1200.1 723.4 1200.5 723.2 1201.2 723.2C1201.8 723.1 1202.4 723.1 1202.9 723.2C1203.4 723.4 1203.6 723.5 1204 724C1204.5 724.4 1204.8 725.3 1205.2 725.8C1205.6 726.2 1205.9 726.4 1206.3 726.4C1206.8 726.4 1207.3 726.1 1207.8 725.8C1208.3 725.4 1208.7 724.7 1209.2 724.3C1209.7 724 1210.1 723.8 1210.6 723.8C1211.1 723.7 1211.4 723.8 1211.8 724.1C1212.3 724.4 1212.7 725 1213.2 725.4C1213.7 725.8 1214.1 726.1 1214.6 726.2C1215.1 726.3 1215.5 726.5 1215.9 726C1216.2 725.5 1216.4 724.8 1216.7 723.4C1216.9 722 1217 720.1 1217.2 718.4C1217.5 716.7 1217.7 715 1218.1 714C1218.4 713.1 1218.9 713 1219.3 713C1219.7 713 1219.9 713.6 1220.4 714C1220.8 714.5 1221 715.2 1221.6 715.7C1222.2 716.1 1222.9 716.4 1223.6 716.5C1224.2 716.5 1224.6 716.3 1225.3 716C1226 715.7 1226.7 715.3 1227.6 714.8C1228.5 714.2 1229.4 713.5 1230.1 713C1230.8 712.4 1231.2 711.9 1231.6 711.6C1232.1 711.3 1232.3 711.2 1232.6 711.3C1233 711.5 1233.3 711.5 1233.6 712.6C1233.9 713.7 1234 715.5 1234.3 717.3C1234.5 719.1 1234.7 721 1234.9 722.7C1235.2 724.4 1235.5 725.9 1235.9 726.7C1236.2 727.5 1236.4 727.3 1236.8 727.2C1237.1 727.1 1237.3 726.8 1237.7 726.1C1238.1 725.5 1238.4 724.3 1238.8 723.6C1239.3 722.9 1239.7 722.6 1240.2 722.3C1240.7 722.1 1241 722.1 1241.6 722.1C1242.2 722.2 1242.9 722.3 1243.7 722.5C1244.4 722.7 1245 722.9 1245.7 723.4C1246.4 723.8 1246.9 724.6 1247.5 725C1248.1 725.5 1248.4 725.5 1249 725.6C1249.6 725.6 1250.1 725.4 1250.7 725.3C1251.4 725.2 1251.8 725 1252.5 724.9C1253.1 724.9 1253.7 724.8 1254.2 724.9C1254.7 725 1254.9 725.2 1255.3 725.4C1255.8 725.6 1256 725.9 1256.5 726.1C1257 726.4 1257.5 726.5 1258.2 726.7C1258.9 726.8 1259.6 726.8 1260.5 726.9C1261.4 726.9 1262 726.9 1263.4 726.9C1264.7 726.9 1266.6 726.8 1268 726.7C1269.3 726.6 1270 726.7 1270.8 726.5C1271.7 726.3 1272.2 726.2 1272.8 725.8C1273.4 725.3 1273.8 724.9 1274.3 724.1C1274.8 723.4 1275.3 722.7 1275.8 721.6C1276.3 720.6 1276.5 719.3 1276.9 718.4C1277.3 717.4 1277.5 716.8 1278 716.4C1278.4 716 1278.8 716.1 1279.5 716C1280.1 715.9 1280.9 715.9 1281.8 716C1282.6 716 1283.4 716 1284.1 716.1C1284.7 716.3 1285 716.3 1285.4 716.9C1285.9 717.5 1286 718.5 1286.4 719.5C1286.7 720.4 1286.9 721.5 1287.3 722.3C1287.6 723.2 1287.9 723.5 1288.4 724C1288.9 724.4 1289.4 724.5 1290 724.7C1290.7 724.9 1291.5 725.1 1292.1 725.1C1292.7 725.1 1293.1 725.2 1293.5 724.9C1293.9 724.6 1294.1 724.3 1294.4 723.4C1294.6 722.5 1294.7 721.2 1294.9 719.8C1295 718.5 1295.2 717.1 1295.4 715.9C1295.7 714.6 1296 713.4 1296.3 712.8C1296.7 712.1 1297.1 712.3 1297.5 712.3C1297.9 712.3 1298.1 712.5 1298.5 713C1299 713.5 1299.3 714.3 1299.9 715.1C1300.5 715.9 1301.1 716.6 1301.9 717.5C1302.6 718.4 1303.3 719.2 1304.2 720C1305 720.8 1305.7 721.4 1306.5 722C1307.2 722.5 1307.7 722.9 1308.4 723.1C1309.1 723.4 1309.7 723.4 1310.2 723.4C1310.8 723.3 1311.1 723 1311.6 722.7C1312.1 722.4 1312.5 721.8 1313 721.5C1313.5 721.3 1313.8 721.2 1314.3 721.2C1314.7 721.2 1315.2 721.2 1315.6 721.4C1316.1 721.7 1316.4 722.2 1316.8 722.5C1317.2 722.9 1317.6 723.3 1318.1 723.5C1318.5 723.7 1318.9 723.7 1319.4 723.6C1320 723.6 1320.4 723.5 1321 723.2C1321.7 723 1322.3 722.6 1322.9 722C1323.5 721.4 1323.9 720.8 1324.3 720C1324.7 719.2 1324.9 718.5 1325.2 717.7C1325.5 716.8 1325.6 715.7 1326 715.1C1326.3 714.5 1326.6 714.4 1327.1 714.2C1327.7 714 1328.1 714 1328.9 714C1329.6 713.9 1330.4 713.9 1331.2 713.9C1331.9 713.9 1332.4 713.8 1332.9 714C1333.3 714.3 1333.4 714.6 1333.7 715.5C1334 716.4 1334.1 717.9 1334.4 719.1C1334.7 720.3 1334.9 721.5 1335.3 722.3C1335.7 723.2 1336 723.5 1336.6 723.9C1337.2 724.2 1337.8 724.2 1338.6 724.2C1339.5 724.3 1340.5 724.3 1341.3 724.1C1342 724 1342.2 724 1342.6 723.6C1343.1 723.2 1343.2 722.6 1343.6 722C1343.9 721.3 1344.3 720.6 1344.7 720C1345.2 719.3 1345.5 718.9 1346.1 718.4C1346.6 717.8 1347.2 717.4 1347.8 716.9C1348.4 716.4 1349 716.2 1349.5 715.7C1350.1 715.2 1350.3 714.6 1350.7 714C1351.1 713.5 1351.4 713 1351.8 712.6C1352.3 712.2 1352.8 712.1 1353.3 712.1C1353.9 712 1354.4 712 1354.9 712.2C1355.5 712.3 1355.9 712.4 1356.4 712.8C1357 713.1 1357.4 713.4 1357.9 714C1358.4 714.7 1358.7 715.2 1359.1 716.2C1359.5 717.2 1359.8 718.4 1360.1 719.5C1360.5 720.5 1360.7 721.6 1361 722.2C1361.4 722.8 1361.6 722.8 1361.9 722.8C1362.3 722.7 1362.6 722.5 1362.9 722C1363.2 721.5 1363.3 720.6 1363.7 720C1364 719.4 1364.2 719 1364.7 718.7C1365.2 718.4 1365.5 718.4 1366.2 718.4C1366.9 718.3 1367.7 718.3 1368.5 718.4C1369.3 718.4 1369.8 718.5 1370.4 718.7C1371.1 718.9 1371.4 719.1 1371.9 719.5C1372.5 719.8 1372.9 720.3 1373.4 720.6C1373.9 720.9 1374.3 721.2 1374.8 721.3C1375.3 721.3 1375.7 721.3 1376.3 721.1C1376.9 720.9 1377.4 720.5 1378 720C1378.6 719.5 1379.1 719.2 1379.6 718.6C1380.2 717.9 1380.7 717.3 1381.1 716.6C1381.6 715.9 1381.9 715.1 1382.3 714.6C1382.7 714.1 1383 713.9 1383.4 713.8C1383.8 713.6 1384.2 713.7 1384.6 714C1385 714.3 1385.2 714.8 1385.6 715.5C1386 716.2 1386.2 717.4 1386.6 718C1387 718.7 1387.4 719 1387.8 719.2C1388.2 719.4 1388.5 719.3 1388.8 719.1C1389.2 718.9 1389.4 718.7 1389.7 718C1390.1 717.3 1390.3 716.2 1390.7 715.1C1391 714.1 1391.4 713.2 1391.8 712.2C1392.3 711.3 1392.7 710.8 1393.2 710.1C1393.7 709.4 1394.2 708.8 1394.7 708.3C1395.2 707.8 1395.6 707.5 1396.1 707.4C1396.6 707.2 1397 707.1 1397.4 707.3C1397.9 707.5 1398 707.5 1398.4 708.3C1398.7 709.1 1398.9 710.5 1399.2 711.9C1399.5 713.3 1399.7 715.2 1400 716.2C1400.3 717.3 1400.6 717.5 1400.9 717.7C1401.2 718 1401.5 717.8 1401.8 717.5C1402.1 717.1 1402.4 716.7 1402.7 715.9C1403.1 715 1403.4 713.5 1403.8 712.6C1404.2 711.7 1404.5 711.1 1404.9 710.8C1405.3 710.5 1405.7 710.5 1406.1 710.7C1406.4 710.9 1406.6 711.3 1407 711.9C1407.3 712.4 1407.7 713.2 1408.1 713.9C1408.6 714.5 1408.9 715.1 1409.5 715.7C1410.1 716.3 1410.6 716.8 1411.2 717.2C1411.8 717.6 1412.4 717.8 1412.9 718C1413.5 718.2 1414 718.2 1414.4 718.1C1414.9 718 1415.2 718.1 1415.6 717.5C1415.9 716.9 1416.1 715.8 1416.4 714.8C1416.7 713.7 1416.8 712.3 1417.1 711.5C1417.4 710.7 1417.6 710.5 1417.9 710.3C1418.2 710 1418.4 710.1 1418.8 710.3C1419.2 710.4 1419.5 710.7 1420 711C1420.4 711.3 1420.8 711.6 1421.3 711.8C1421.8 712 1422.2 712.1 1422.7 712.1C1423.2 712.1 1423.6 712 1424.2 711.8C1424.8 711.7 1425.4 711.4 1425.9 711.2C1426.5 711.1 1426.9 711 1427.4 711.1C1427.9 711.2 1428.2 711.2 1428.6 711.7C1428.9 712.2 1429.1 713.3 1429.4 714C1429.7 714.8 1429.9 715.5 1430.2 715.9C1430.5 716.3 1430.8 716.4 1431.1 716.4C1431.4 716.4 1431.7 716.3 1432 715.9C1432.4 715.5 1432.7 714.9 1433.1 714.2C1433.4 713.5 1433.8 712.6 1434.2 712.1C1434.6 711.6 1434.9 711.5 1435.4 711.5C1435.8 711.5 1436.1 711.7 1436.5 712.1C1436.9 712.5 1437.1 713.1 1437.4 713.7C1437.7 714.2 1437.9 714.8 1438.3 715.1C1438.8 715.5 1439.1 715.6 1439.7 715.7C1440.4 715.8 1441.2 715.8 1442 715.8C1442.8 715.8 1443.6 715.8 1444.3 715.7C1445 715.6 1445.3 715.6 1445.8 715.1C1446.3 714.7 1446.5 714.1 1446.8 713.3C1447.2 712.5 1447.4 711.4 1447.8 710.8C1448.1 710.2 1448.3 710 1448.7 709.8C1449 709.7 1449.4 709.7 1449.7 710.1C1450 710.4 1450.1 711 1450.4 711.9C1450.7 712.7 1450.9 714 1451.2 714.8C1451.5 715.5 1451.8 715.8 1452.1 716.1C1452.5 716.4 1452.8 716.5 1453.2 716.4C1453.5 716.3 1453.8 716.1 1454.3 715.8C1454.8 715.5 1455.2 715 1455.8 714.7C1456.4 714.4 1456.9 714.1 1457.5 713.9C1458.1 713.6 1458.6 713.5 1459.2 713.4C1459.9 713.3 1460 713.3 1461 713.2C1461.9 713.2 1463.3 713.2 1464.6 713.1C1465.9 713.1 1467 713.2 1468 713.1C1469.1 713 1469.7 712.9 1470.3 712.7C1471 712.5 1471.3 712.3 1471.7 711.9C1472.2 711.5 1472.5 710.8 1472.9 710.4C1473.3 710.1 1473.5 709.9 1474 709.7C1474.5 709.6 1475.1 709.5 1475.5 709.6C1475.9 709.8 1476.1 710 1476.4 710.4C1476.8 710.9 1477.1 711.7 1477.5 712.2C1477.8 712.8 1478 713.2 1478.4 713.4C1478.8 713.6 1479.2 713.6 1479.5 713.5C1479.9 713.5 1480.1 713.4 1480.4 713C1480.8 712.5 1481 711.8 1481.4 711C1481.7 710.2 1482 709 1482.4 708.5C1482.8 707.9 1483.2 707.9 1483.5 707.9C1483.9 707.9 1484.2 707.9 1484.5 708.5C1484.8 709 1485 710 1485.3 710.8C1485.6 711.6 1485.8 712.4 1486.2 713C1486.6 713.6 1486.9 714 1487.3 714.2C1487.8 714.3 1488.1 714.1 1488.5 713.8C1488.9 713.4 1489.2 712.7 1489.6 712.2C1490.1 711.8 1490.3 711.4 1490.8 711.2C1491.2 710.9 1491.7 710.8 1492.2 710.8C1492.7 710.8 1493 710.9 1493.5 711.2C1494.1 711.4 1494.5 711.8 1495 712.1C1495.6 712.3 1496.1 712.6 1496.5 712.6C1497 712.6 1497.3 712.4 1497.7 712.1C1498 711.7 1498.2 711.1 1498.5 710.6C1498.8 710.1 1499 709.7 1499.4 709.4C1499.8 709.2 1500.1 709.2 1500.8 709.1C1501.4 709 1502.3 709 1503.1 709.1C1503.8 709.1 1504.4 709.2 1505 709.4C1505.7 709.5 1506 709.7 1506.5 710C1507.1 710.4 1507.5 710.9 1508 711.3C1508.6 711.8 1509 712 1509.6 712.3C1510.3 712.6 1510.8 712.8 1511.7 713.1C1512.6 713.5 1513.5 713.8 1514.6 714C1515.6 714.3 1516.4 714.4 1517.4 714.5C1518.5 714.6 1519.4 714.7 1520.3 714.7C1521.2 714.8 1521.9 714.8 1522.6 714.8C1523.3 714.7 1523.6 714.7 1524 714.4C1524.4 714.1 1524.5 713.6 1524.9 713.3C1525.3 713 1525.6 712.9 1526.1 712.8C1526.5 712.7 1527 712.7 1527.4 712.9C1527.9 713 1528.1 713.2 1528.5 713.7C1528.8 714.1 1529.1 714.9 1529.5 715.3C1529.9 715.7 1530.2 715.9 1530.6 715.9C1531.1 716 1531.4 716 1531.8 715.7C1532.1 715.4 1532.3 715 1532.6 714.2C1532.9 713.4 1533.2 712 1533.5 711.3C1533.9 710.6 1534.1 710.6 1534.4 710.4C1534.8 710.2 1535 710.2 1535.6 710.3C1536.1 710.3 1536.7 710.4 1537.5 710.6C1538.4 710.8 1539.4 711.1 1540.4 711.3C1541.4 711.6 1542 711.7 1542.9 712C1543.9 712.2 1544.6 712.5 1545.6 712.9C1546.6 713.3 1547.5 713.7 1548.5 714.2C1549.4 714.6 1550 714.9 1550.8 715.2C1551.5 715.5 1551.9 715.6 1552.5 715.7C1553.1 715.7 1553.5 715.7 1554 715.5C1554.5 715.3 1554.9 714.9 1555.3 714.7C1555.8 714.5 1556.3 714.3 1556.7 714.2C1557.2 714.2 1557.6 714.1 1558 714.4C1558.4 714.7 1558.6 715.3 1559 715.7C1559.4 716.1 1559.8 716.4 1560.2 716.6C1560.6 716.8 1560.9 716.8 1561.3 716.8C1561.8 716.7 1562.1 716.4 1562.6 716.1C1563.1 715.9 1563.4 715.4 1564 715.2C1564.5 715 1564.9 715 1565.5 714.9C1566 714.9 1566.3 715 1566.8 715.1C1567.4 715.2 1567.8 715.4 1568.6 715.5C1569.3 715.6 1569.8 715.6 1570.9 715.7C1571.9 715.7 1573.3 715.7 1574.3 715.7C1575.3 715.6 1575.6 715.6 1576.3 715.5C1576.9 715.4 1577.5 715.2 1578.1 715.1C1578.7 715.1 1579.1 715 1579.5 715.2C1579.9 715.4 1580 715.8 1580.4 716.2C1580.7 716.6 1581 717.1 1581.4 717.4C1581.9 717.6 1582.4 717.8 1582.9 717.7C1583.4 717.7 1583.8 717.5 1584.3 717.2C1584.8 717 1585.1 716.5 1585.6 716.3C1586 716 1586.5 715.9 1586.9 715.9C1587.4 715.9 1587.7 715.9 1588.1 716.1C1588.5 716.4 1588.6 717 1589 717.5C1589.4 717.9 1589.7 718.3 1590.2 718.6C1590.6 718.8 1590.9 718.8 1591.5 718.8C1592.2 718.8 1593 718.7 1593.8 718.6C1594.7 718.4 1595.4 718.3 1596.1 718C1596.9 717.7 1597.3 717.3 1597.9 717C1598.4 716.7 1598.8 716.4 1599.2 716.3C1599.7 716.1 1600.1 716.1 1600.5 716.1C1600.9 716.2 1601.2 716.4 1601.6 716.6C1602.1 716.9 1602.4 717.4 1602.8 717.7C1603.2 717.9 1603.5 718.1 1603.9 718.1C1604.4 718.2 1604.8 718.2 1605.3 718C1605.9 717.8 1606.5 717.4 1607 717.1C1607.6 716.9 1607.9 716.7 1608.4 716.6C1608.9 716.6 1609.2 716.6 1609.7 716.6C1610.2 716.7 1610.5 716.9 1611.1 717.1C1611.6 717.3 1612 717.6 1612.6 717.8C1613.1 717.9 1613.4 717.9 1613.9 717.8C1614.4 717.6 1614.9 717.4 1615.3 717.1C1615.8 716.8 1616 716.3 1616.5 716C1616.9 715.8 1617.3 715.7 1617.7 715.7C1618.2 715.7 1618.5 715.7 1618.9 715.9C1619.3 716.1 1619.5 716.4 1619.9 716.8C1620.3 717.1 1620.7 717.3 1621.2 717.7C1621.7 718 1622.1 718.2 1622.8 718.4C1623.4 718.7 1624.2 718.9 1624.8 719C1625.5 719.1 1626.1 719.2 1626.6 719.1C1627.1 719 1627.3 718.9 1627.7 718.6C1628.1 718.2 1628.3 717.7 1628.6 717.3C1629 716.9 1629.3 716.5 1629.7 716.2C1630.1 716 1630.5 715.9 1630.9 715.9C1631.4 715.9 1631.8 716 1632.3 716.2C1632.8 716.4 1633.2 716.7 1633.7 717.1C1634.1 717.5 1634.5 717.8 1634.8 718.4C1635.2 718.9 1635.5 719.4 1635.8 720.2C1636.1 721 1636.2 721.7 1636.5 722.7C1636.7 723.7 1636.7 724.5 1636.9 725.6C1637.1 726.7 1637.2 728.1 1637.5 728.8C1637.7 729.6 1638 729.5 1638.3 729.7C1638.6 729.9 1638.8 730 1639.2 729.9C1639.6 729.8 1640.1 729.6 1640.6 729.3C1641.1 729 1641.6 728.7 1642.1 728.5C1642.6 728.3 1643 728.2 1643.5 728.2C1643.9 728.1 1644.3 728.1 1644.7 728.3C1645.2 728.5 1645.5 728.7 1645.9 729C1646.3 729.4 1646.6 729.8 1647 730.3C1647.5 730.8 1648 731.3 1648.4 731.7C1648.8 732.1 1648.9 732.2 1649.2 732.5C1649.5 732.9 1649.8 733.3 1650.1 733.6C1650.4 733.9 1650.4 734 1650.9 734.1C1651.5 734.2 1652.3 734.2 1653.2 734.2C1654.1 734.2 1655.3 734.1 1656.1 734.1C1656.9 734.1 1657.3 734 1657.8 734.2C1658.3 734.4 1658.5 734.8 1659 735C1659.4 735.3 1659.6 735.5 1660.1 735.7C1660.6 735.8 1661.1 736 1661.6 735.9C1662.1 735.8 1662.4 735.6 1662.7 735.2C1663.1 734.8 1663.4 734.1 1663.8 733.8C1664.2 733.4 1664.5 733.3 1664.9 733.2C1665.3 733.2 1665.7 733.1 1666.1 733.4C1666.4 733.7 1666.5 734.2 1666.8 735C1667 735.8 1667.3 737.2 1667.6 737.9C1667.9 738.7 1668.1 739 1668.5 739.3C1668.9 739.6 1669.2 739.7 1669.6 739.6C1670.1 739.6 1670.3 739.3 1670.8 738.9C1671.2 738.6 1671.7 738 1672.2 737.7C1672.7 737.5 1673 737.4 1673.5 737.4C1674.1 737.3 1674.4 737.4 1675 737.5C1675.7 737.6 1676.4 737.8 1677.3 737.9C1678.3 738 1679.2 738 1680.2 738C1681.2 737.9 1682.1 737.8 1683.1 737.6C1684 737.4 1684.5 737.2 1685.4 736.9C1686.2 736.6 1686.9 736.3 1687.7 736C1688.4 735.7 1689 735.4 1689.6 735.2C1690.3 735 1690.8 734.9 1691.3 734.9C1691.9 734.8 1692.4 734.8 1692.8 735.1C1693.3 735.4 1693.4 735.9 1693.8 736.5C1694.1 737 1694.5 737.6 1694.9 738.1C1695.4 738.7 1695.8 739 1696.3 739.5C1696.8 740.1 1697.2 740.6 1697.7 741C1698.1 741.4 1698.3 741.5 1698.8 741.6C1699.4 741.8 1700.1 741.9 1700.7 741.7C1701.2 741.6 1701.4 741.2 1701.8 740.8C1702.2 740.4 1702.5 739.9 1703 739.5C1703.4 739.2 1703.9 738.9 1704.6 738.7C1705.2 738.5 1705.8 738.5 1706.6 738.4C1707.4 738.4 1708 738.4 1708.9 738.4C1709.9 738.4 1710.8 738.4 1711.8 738.4C1712.8 738.5 1713.5 738.5 1714.4 738.7C1715.4 738.9 1716.1 739.1 1717 739.4C1717.8 739.6 1718.4 740 1719 740.3C1719.7 740.5 1719.9 740.7 1720.6 740.9C1721.3 741 1721.8 741.1 1722.9 741.2C1724 741.2 1725.7 741.2 1726.7 741.1C1727.8 741 1728 740.8 1728.7 740.6C1729.4 740.4 1729.9 740.2 1730.8 739.9C1731.6 739.7 1732.5 739.4 1733.3 739.3C1734.1 739.1 1734.5 739 1735.3 738.9C1736.2 738.8 1737.1 738.8 1737.9 738.7C1738.6 738.6 1739.1 738.6 1739.6 738.3C1740.1 738 1740.4 737.7 1740.9 737.2C1741.3 736.7 1741.6 736 1742 735.6C1742.4 735.2 1742.8 735 1743.2 734.9C1743.6 734.8 1743.9 734.8 1744.2 735.2C1744.5 735.6 1744.6 736.3 1744.8 737.2C1745 738.1 1745.1 739.3 1745.3 740.4C1745.6 741.6 1745.8 742.6 1746 743.3C1746.3 744.1 1746.5 744.3 1746.8 744.5C1747.1 744.7 1747.4 744.8 1747.8 744.6C1748.1 744.4 1748.3 744.1 1748.7 743.5C1749 743 1749.2 742.1 1749.6 741.5C1749.9 741 1750.1 740.7 1750.6 740.5C1751.1 740.3 1751.6 740.3 1752.3 740.3C1753.1 740.3 1753.7 740.5 1754.6 740.6C1755.6 740.7 1756.8 740.9 1757.7 741.1C1758.7 741.2 1759.3 741.4 1760 741.4C1760.8 741.4 1761.3 741.3 1761.8 741.1C1762.3 740.8 1762.5 740.4 1762.9 740.1C1763.3 739.8 1763.5 739.6 1764.1 739.5C1764.6 739.4 1765.3 739.3 1765.8 739.5C1766.3 739.7 1766.5 740.1 1766.9 740.4C1767.4 740.8 1767.7 741.4 1768.1 741.7C1768.5 742 1768.8 742.2 1769.2 742.2C1769.6 742.2 1770 742.3 1770.4 741.8C1770.7 741.4 1770.9 740.6 1771.2 739.7C1771.5 738.9 1771.7 737.8 1772 737.2C1772.3 736.6 1772.6 736.5 1772.9 736.4C1773.3 736.3 1773.6 736.3 1773.9 736.6C1774.3 736.8 1774.6 737.3 1775 737.7C1775.3 738.2 1775.5 738.8 1775.9 739.1C1776.3 739.4 1776.6 739.5 1777.3 739.5C1777.9 739.6 1778.5 739.4 1779.6 739.4C1780.6 739.4 1781.6 739.3 1783 739.3C1784.5 739.2 1786.2 739.1 1787.6 739.1C1789.1 739.1 1790 739.1 1791.1 739.1C1792.1 739.2 1792.5 739.3 1793.4 739.4C1794.2 739.6 1794.8 739.8 1795.7 740.1C1796.5 740.3 1797.1 740.6 1798 740.8C1798.8 741.1 1799.4 741.2 1800.3 741.5C1801.1 741.7 1801.7 741.8 1802.6 742C1803.4 742.2 1804.2 742.4 1804.8 742.6C1805.5 742.9 1805.8 743.1 1806.3 743.3C1806.9 743.5 1807.2 743.7 1807.7 743.7C1808.2 743.7 1808.6 743.7 1809.1 743.6C1809.6 743.4 1809.8 743 1810.2 742.8C1810.7 742.6 1811.1 742.4 1811.7 742.3C1812.4 742.2 1813.2 742.2 1814 742.2C1814.9 742.2 1815.6 742.3 1816.3 742.5C1817.1 742.7 1817.5 743 1818.1 743.3C1818.6 743.7 1818.8 744.3 1819.2 744.6C1819.6 744.9 1819.9 745.1 1820.4 745.2C1820.8 745.3 1821.3 745.4 1821.8 745.3C1822.4 745.3 1822.8 745.1 1823.5 744.9C1824.1 744.6 1824.8 744.2 1825.5 743.9C1826.2 743.5 1826.9 743.2 1827.5 743C1828.1 742.7 1828.5 742.5 1829 742.4C1829.5 742.3 1830 742.2 1830.4 742.3C1830.7 742.5 1830.8 742.8 1831 743.3C1831.3 743.9 1831.5 744.8 1831.8 745.5C1832.2 746.2 1832.3 747 1832.8 747.5C1833.2 747.9 1833.5 747.9 1834.1 748C1834.8 748.1 1835.6 748.1 1836.4 748.1C1837.3 748.2 1838.1 748.1 1839 748.2C1839.8 748.3 1840.4 748.6 1841.3 748.7C1842.2 748.9 1842.9 749.1 1843.9 749.2C1844.9 749.3 1846 749.3 1846.8 749.3C1847.6 749.3 1847.9 749.3 1848.5 749C1849.1 748.8 1849.5 748.3 1850 748C1850.5 747.8 1850.7 747.7 1851.1 747.6C1851.6 747.5 1852 747.5 1852.5 747.7C1853 747.8 1853.4 748.1 1853.9 748.5C1854.4 748.8 1854.6 749.2 1855 749.6C1855.5 750.1 1856 750.7 1856.2 751" fill="none" stroke="#ff4d4d" stroke-width="2" stroke-linejoin="round" stroke-linecap="round"/>
<path d="M613.2 572.1C614 571.4 616 569.2 617.6 568.5C619.1 567.8 620.3 568 621.9 568.1C623.4 568.2 624.6 568.1 626.2 569.1C627.7 570 629 571.9 630.5 573.4C632.1 574.8 633.7 577.6 634.8 577C636 576.4 636.3 572.4 637.1 570.1C637.8 567.8 638 565.5 639.1 564.2C640.3 562.9 642.2 563.6 643.5 562.9C644.7 562.2 645.2 560.9 646 560.3C646.7 559.6 647.1 559.1 647.8 559.4C648.4 559.6 649 560.3 649.6 561.6C650.2 562.9 650.7 565.8 651.2 566.8C651.7 567.8 651.9 567.7 652.5 567.1C653.1 566.5 653.8 564.4 654.5 563.6C655.2 562.7 655.8 562.3 656.4 562.5C657.1 562.7 657.4 563.4 658 564.9C658.6 566.3 659.2 569.5 659.7 570.8C660.2 572 660.3 572 660.7 571.7C661.2 571.3 661.7 570 662.3 568.8C662.9 567.6 663.4 565.6 664 564.9C664.6 564.1 664.9 564.3 665.6 564.6C666.2 564.9 666.9 566.1 667.5 566.6C668.2 567 668.7 567.1 669.4 567.2C670.1 567.3 670.7 567.4 671.5 567.2C672.3 567 672.9 566.7 673.7 566.2C674.5 565.6 675.3 564.8 676.1 564.2C676.8 563.6 677.4 562.9 678 562.9C678.6 562.9 678.9 562.7 679.3 564.2C679.8 565.7 680.1 569.8 680.6 571.4C681.2 573.1 681.7 573.4 682.3 573.4C682.9 573.4 683.3 572.8 683.9 571.4C684.5 570 685 566.8 685.5 565.5C686 564.3 686.2 564.2 686.7 564.5C687.1 564.7 687.6 564.2 688.1 566.8C688.5 569.5 688.8 575.8 689.1 579.3C689.5 582.7 689.9 584.4 690.2 585.8C690.5 587.2 690.6 587.2 691 587.1C691.4 587 691.9 586 692.4 585.2C692.9 584.3 693.2 582.8 693.7 582.1C694.2 581.5 694.6 581.4 695.3 581.4C696 581.4 696.9 582 697.6 582.1C698.4 582.3 698.8 582.3 699.6 582.3C700.4 582.3 701.3 582.3 702.2 582.1C703.2 582 704 581.8 704.8 581.4C705.7 581 706.2 580.2 706.8 579.9C707.4 579.6 707.7 579.5 708.2 579.5C708.8 579.6 709.3 579.8 709.8 580.3C710.4 580.8 710.9 581.7 711.4 582.1C711.9 582.6 712 582.7 712.6 582.7C713.2 582.7 713.9 582.3 714.7 582.1C715.4 582 716.1 581.7 716.9 581.9C717.7 582 718.5 582.7 719.2 582.9C720 583.2 720.5 583.3 721.2 583.3C721.9 583.3 722.4 583 723.2 582.9C723.9 582.8 724.7 582.6 725.5 582.7C726.3 582.8 727 583.2 727.7 583.4C728.5 583.7 729.1 584.2 729.8 584.1C730.6 584 731.3 583.3 732.1 582.9C732.8 582.5 733.4 581.9 734.2 581.9C734.9 581.9 735.5 582.5 736.3 582.9C737 583.4 737.8 584.3 738.5 584.2C739.2 584.2 739.6 583.4 740.2 582.5C740.7 581.6 741 579.9 741.5 579.3C742 578.6 742.3 578.7 742.8 578.7C743.3 578.7 743.6 578.6 744.4 579.3C745.1 579.9 746.2 581.3 747.1 582.1C748 583 748.6 583.4 749.3 583.8C750.1 584.3 750.7 584.9 751.4 584.8C752.1 584.6 752.7 583.9 753.3 583.2C753.9 582.4 754.3 581.1 754.8 580.6C755.4 580.1 755.7 579.8 756.1 580.3C756.6 580.8 757.1 582 757.6 583.2C758.1 584.4 758.4 586.2 758.9 587.1C759.3 588 759.6 588.3 760.1 588C760.6 587.8 761.2 587 761.8 585.8C762.4 584.7 762.8 582.5 763.3 581.6C763.9 580.7 764.2 580.8 764.7 581C765.1 581.1 765.5 581.4 766 582.5C766.5 583.6 766.9 586.1 767.4 587.1C767.9 588.1 768.1 588.1 768.7 588.2C769.3 588.2 770.2 587.9 770.9 587.4C771.7 586.8 772.3 586.1 773 585.2C773.8 584.2 774.5 583.1 775.3 582.1C776 581.2 776.6 580 777.3 579.8C778.1 579.6 778.7 580.7 779.4 581.2C780.2 581.8 780.9 582.9 781.7 582.9C782.4 583 783 582.3 783.6 581.6C784.2 581 784.6 579.8 785.1 579.3C785.5 578.8 785.8 578.6 786.2 578.9C786.7 579.1 787.1 579.3 787.6 580.6C788.1 581.9 788.5 584.9 789 586.1C789.5 587.2 789.7 587 790.3 587.1C790.9 587.2 791.5 586.8 792.1 586.5C792.8 586.2 793.1 585.7 793.8 585.4C794.6 585.1 795.3 585.1 796.5 584.9C797.6 584.7 799.2 584.6 800.4 584.5C801.6 584.4 802.5 583.9 803.3 584.1C804 584.3 804.2 583.9 804.6 585.8C804.9 587.8 805.1 589.1 805.4 595C805.6 600.9 805.8 610.5 806 618.5C806.2 626.5 806.4 634.6 806.7 639.5C806.9 644.3 807.2 644.6 807.6 645.4C807.9 646.1 808.2 645 808.6 643.4C809.1 641.7 809.6 639 810.2 636.2C810.8 633.4 811.5 630.9 812.2 627.7C812.9 624.5 813.4 621.6 814.1 618.5C814.8 615.5 815.4 613 816.1 610.7C816.8 608.3 817.3 606.8 818.1 605.4C818.8 604.1 819.3 603.7 820 603.3C820.7 603 820.9 602.8 822 603.3C823 603.9 824.5 605.2 825.9 606.4C827.2 607.6 828.7 610.2 829.7 609.9C830.7 609.6 830.9 606.5 831.6 604.7C832.3 602.9 833 600.1 833.7 600C834.4 599.8 834.7 601.9 835.4 603.8C836.2 605.8 836.9 610.3 837.7 610.8C838.6 611.3 839.3 607.9 840.2 606.4C841 604.9 841.6 602.6 842.4 602.4C843.2 602.3 843.7 604 844.5 605.5C845.3 607.1 846 610.7 846.8 611.1C847.6 611.6 848.3 609.3 849.1 608.2C849.8 607 850 605.8 851.1 604.7C852.3 603.6 854.2 602.2 855.5 602.1C856.8 601.9 857.6 603.3 858.5 603.8C859.4 604.3 859.8 605.5 860.4 604.7C861 603.9 861.5 603.5 862 599.4C862.4 595.4 862.6 588 863 582C863.4 576 863.6 571.6 864.2 566.3C864.9 561 865.7 555.8 866.5 552.3C867.3 548.9 868 547.6 868.6 547.1C869.2 546.6 869.4 546.6 870 549.7C870.6 552.9 871.3 559.7 872.1 564.5C872.8 569.4 873.4 573.2 874.2 576.8C875 580.3 875.7 583.1 876.4 584.1C877.2 585 877.7 583.3 878.5 582C879.4 580.7 880.4 577.4 881.2 577.1C881.9 576.8 882.3 578.7 882.9 580.3C883.5 581.8 883.8 584.6 884.3 585.8C884.8 587.1 885 587.4 885.5 587.2C886.1 587 886.6 585.8 887.4 584.6C888.2 583.4 889.1 581 889.9 580.6C890.7 580.2 891.2 581.6 892 582.3C892.8 583.1 893.4 584.4 894.2 584.6C895.1 584.8 895.7 583.8 896.5 583.4C897.3 583 897.8 582.5 898.6 582.5C899.4 582.6 900.1 583.2 900.9 583.7C901.7 584.3 901.7 584.4 903 585.5C904.2 586.5 906.4 589.5 907.7 589.5C908.9 589.5 909.2 587.2 909.9 585.5C910.7 583.8 911.3 579.6 911.9 579.9C912.4 580.2 912.7 581.2 913.1 587.2C913.5 593.3 913.6 604 914 613.4C914.3 622.8 914.6 632.7 915 639.6C915.4 646.5 915.6 651.3 916.2 651.8C916.8 652.3 917.5 646.3 918.3 642.2C919.2 638.1 920.1 633.3 920.9 629.1C921.8 624.9 922.4 621.8 923.2 618.6C924 615.5 924.5 613.2 925.3 611.7C926.1 610.1 926.8 610.5 927.6 609.9C928.3 609.3 928.9 609.2 929.7 608.5C930.4 607.8 931.1 606.7 931.7 606.1C932.4 605.5 932.9 605.1 933.5 605.2C934.1 605.3 934.5 606 935.2 606.8C936 607.6 936.7 609.1 937.5 609.6C938.3 610 938.9 609.5 939.8 609.2C940.6 609 941.3 608.7 942.2 608.2C943.2 607.7 944.2 606.9 945 606.4C945.8 605.9 946.2 605.2 946.8 605.5C947.3 605.9 947.6 606.8 948.1 608.2C948.7 609.5 949 612 949.7 613C950.5 614.1 951.4 613.8 952.3 613.9C953.3 614.1 954 614 955 613.9C955.9 613.8 956.8 614 957.6 613.4C958.4 612.8 958.7 613.3 959.3 610.8C959.9 608.3 960.4 605.3 961.1 599.4C961.7 593.6 962.2 587 962.8 578.5C963.4 570 964 560.3 964.5 552.3C965.1 544.3 965.4 537.9 965.9 534C966.5 530.2 967 531.7 967.7 531.1C968.4 530.4 969 530.4 969.8 530.5C970.5 530.7 971.2 530.5 971.9 531.8C972.6 533 973.1 534.1 973.6 537.5C974.1 540.9 974.3 546.5 974.7 550.6C975.1 554.7 975.3 558.8 975.9 560.2C976.5 561.6 977.2 559.1 978.2 558.4C979.1 557.8 980.3 556.2 981.1 556.4C981.9 556.5 982 557.5 982.5 559.3C983 561.1 983.3 564.7 983.7 566.3C984.2 567.9 984.5 568.5 985.1 568.4C985.8 568.2 986.4 566.7 987.2 565.4C988.1 564.2 989.2 561.4 989.8 561.4C990.5 561.4 990.6 563 991.1 565.4C991.5 567.9 992 572.8 992.5 575C993 577.3 993.2 578.1 993.9 578C994.5 577.8 995.2 576.2 995.9 574.1C996.7 572 997.4 569.6 998.2 566.3C999 563 999.6 558.4 1000.3 555.8C1001.1 553.2 1001.7 551.7 1002.4 551.8C1003.1 552 1003.5 555 1004.3 556.7C1005.1 558.4 1005.9 560.4 1006.8 561.1C1007.6 561.7 1008.2 561 1009 560.2C1009.8 559.4 1010.6 558.4 1011.3 556.7C1012 555 1012.4 552.7 1013 550.6C1013.7 548.5 1014.4 546.2 1015.1 545C1015.9 543.8 1016.6 544.3 1017.4 544.1C1018.2 543.9 1018.7 544.4 1019.5 544C1020.3 543.6 1021 543 1021.8 541.9C1022.5 540.7 1022.8 540.6 1023.5 537.5C1024.3 534.4 1025.1 528.7 1026 524.4C1026.8 520.2 1027.5 516.3 1028.2 514C1029 511.6 1029.2 512.3 1030 511.4C1030.8 510.4 1032.1 510.3 1032.9 508.7C1033.7 507.1 1034 504.8 1034.4 502.4C1034.8 500 1034.8 497.3 1035.2 495.5C1035.5 493.8 1035.8 493.2 1036.3 492.6C1036.8 492.1 1037.1 492.4 1038 492.3C1039 492.2 1040.6 492.7 1041.5 492.3C1042.4 492 1042.8 491.8 1043.2 490.4C1043.7 488.9 1043.7 487.7 1044 484C1044.3 480.4 1044.4 475.2 1044.7 470.2C1045 465.3 1045.1 460.8 1045.5 456.5C1045.9 452.1 1046.5 449.2 1047 446.1C1047.5 443 1047.9 441.3 1048.4 439.2C1048.9 437.2 1049.3 435.8 1049.8 434.6C1050.2 433.5 1050.3 432.1 1050.7 432.9C1051 433.7 1051.3 436.6 1051.6 439.2C1051.8 441.8 1051.9 443.1 1052.1 447.3C1052.2 451.4 1052.4 457.5 1052.5 462.2C1052.7 467 1052.8 470.4 1053 473.7C1053.2 477 1053.4 478.9 1053.7 480.6C1053.9 482.2 1054.1 482.8 1054.5 482.9C1054.9 483 1055.4 481.7 1055.8 481.2C1056.3 480.6 1056.5 480.6 1057 480C1057.5 479.5 1058 478.4 1058.5 478.1C1059 477.7 1059.2 477.5 1059.6 478.3C1060.1 479.1 1060.4 479.6 1060.8 482.3C1061.2 485 1061.5 489.8 1061.9 493.2C1062.4 496.6 1062.9 500.2 1063.3 501.3C1063.8 502.3 1064 500.8 1064.5 499C1064.9 497.1 1065.2 495.1 1065.6 490.9C1066 486.8 1066.4 479.7 1066.8 476C1067.1 472.3 1067.3 470.5 1067.7 470.5C1068 470.5 1068.2 472.3 1068.6 476C1069 479.7 1069.2 486.9 1069.6 490.9C1070 495 1070.3 496.6 1070.8 498.4C1071.3 500.2 1071.4 500.4 1072.3 501C1073.1 501.7 1074.4 501.8 1075.4 501.8C1076.3 501.9 1077 501.9 1077.7 501.3C1078.4 500.6 1078.7 500.3 1079.2 498.4C1079.7 496.5 1080.1 494.1 1080.5 490.9C1081 487.7 1081.3 484.3 1081.7 480.6C1082.1 476.9 1082.3 473.3 1082.6 470.2C1082.9 467.1 1083.2 465 1083.5 463.4C1083.9 461.7 1084.2 461.5 1084.7 461.3C1085.1 461.1 1085.5 460.7 1085.9 462.2C1086.4 463.7 1086.8 467.5 1087.2 469.7C1087.6 471.8 1088 473.3 1088.4 474.3C1088.8 475.2 1089 475.4 1089.4 475.1C1089.8 474.8 1090.2 473.9 1090.7 472.5C1091.1 471.2 1091.5 468.7 1092 467.4C1092.5 466 1092.9 465.4 1093.4 465.1C1093.9 464.8 1094.5 464.7 1094.9 465.7C1095.3 466.6 1095.4 468.4 1095.7 470.2C1096 472.1 1096.3 473.7 1096.6 476C1097 478.3 1097.4 480.4 1097.8 482.9C1098.2 485.4 1098.5 487.5 1098.9 489.8C1099.3 492.1 1099.6 493.9 1100.1 495.5C1100.5 497.1 1100.6 498 1101.5 498.6C1102.3 499.3 1103.6 499.2 1104.7 499.2C1105.8 499.2 1106.8 499.3 1107.5 498.6C1108.3 498 1108.3 498.4 1108.8 495.5C1109.3 492.7 1109.9 486.4 1110.4 482.9C1111 479.4 1111.4 478.1 1111.9 476C1112.4 473.9 1112.8 472.8 1113.3 471.4C1113.8 469.9 1114.3 468.6 1114.8 468C1115.3 467.3 1115.6 467 1115.9 467.6C1116.3 468.2 1116.4 469.5 1116.7 471.4C1117 473.3 1117.2 475.2 1117.5 478.3C1117.9 481.4 1118.3 486.3 1118.7 488.6C1119.1 491 1119.2 491.3 1119.6 491.5C1120 491.7 1120.4 491.1 1120.8 489.8C1121.1 488.4 1121.3 486.9 1121.7 484C1122 481.1 1122.2 476.7 1122.6 473.7C1122.9 470.7 1123.3 468.6 1123.6 467.4C1124 466.1 1124.1 466.1 1124.4 466.8C1124.7 467.5 1125 468.7 1125.3 471.4C1125.7 474.1 1125.8 477.2 1126.2 481.7C1126.5 486.3 1126.7 492.4 1127.1 496.7C1127.4 500.9 1127.7 503.5 1128 505.3C1128.3 507 1128.3 507 1128.6 506.4C1128.8 505.9 1129.1 504.8 1129.5 502.4C1129.8 500 1130.1 496.2 1130.5 493.2C1130.9 490.2 1131.3 487.5 1131.7 485.8C1132.1 484 1132.4 483.7 1132.8 483.7C1133.2 483.7 1133.5 484.5 1134 485.8C1134.4 487.1 1134.7 489 1135.1 490.9C1135.5 492.9 1135.9 495.4 1136.3 496.7C1136.6 498 1136.8 498.3 1137.2 498C1137.5 497.8 1137.8 497.6 1138.2 495.5C1138.6 493.4 1138.9 489.8 1139.4 486.3C1139.8 482.8 1140.3 478.7 1140.9 476C1141.4 473.3 1141.8 472.6 1142.3 471.4C1142.9 470.2 1143.3 469.9 1144 469.3C1144.6 468.7 1145.3 467.8 1145.8 468C1146.3 468.1 1146.6 468.2 1146.9 470.2C1147.3 472.3 1147.6 475.3 1147.9 479.4C1148.2 483.6 1148.4 489.3 1148.7 493.2C1149 497.2 1149.2 499.6 1149.5 501.3C1149.7 502.9 1149.8 503 1150 502.4C1150.3 501.8 1150.5 500.7 1150.9 497.8C1151.2 494.9 1151.4 490.3 1151.8 486.3C1152.1 482.4 1152.3 478.6 1152.7 476C1153 473.4 1153.3 472.8 1153.7 472C1154.1 471.2 1154.5 470.9 1154.9 471.6C1155.2 472.4 1155.4 474 1155.8 476C1156.2 478 1156.4 481.2 1156.9 482.9C1157.5 484.5 1158.1 485.1 1158.7 485.2C1159.2 485.3 1159.5 484.5 1160 483.5C1160.6 482.4 1161 480.5 1161.5 479.4C1162.1 478.4 1162.6 477.7 1163 477.7C1163.5 477.7 1163.8 477.9 1164.2 479.4C1164.5 481 1164.6 483.4 1165 486.3C1165.3 489.2 1165.7 493 1166.1 495.5C1166.5 498 1166.8 498.9 1167.3 500.1C1167.8 501.4 1168.4 501.9 1169 502.4C1169.6 502.9 1170.1 503.1 1170.7 503C1171.3 502.9 1171.9 503.2 1172.4 501.8C1173 500.5 1173.2 498.3 1173.6 495.5C1174 492.7 1174.2 488.9 1174.5 486.3C1174.8 483.8 1175.1 482.5 1175.4 481.5C1175.8 480.5 1176 480.5 1176.4 480.8C1176.7 481.2 1176.9 481.6 1177.3 483.5C1177.6 485.3 1178 488.5 1178.4 490.9C1178.9 493.3 1179.3 495.8 1179.7 496.9C1180.1 498 1180.4 497.9 1180.7 497.2C1181.1 496.6 1181.3 495.8 1181.6 493.2C1182 490.6 1182.2 486.5 1182.6 482.9C1182.9 479.3 1183.1 475.5 1183.5 473.1C1183.8 470.7 1184.2 469.8 1184.5 469.7C1184.9 469.6 1185.1 470 1185.4 472.5C1185.7 475.1 1185.9 479.3 1186.2 484C1186.5 488.8 1186.8 494.6 1187.2 499C1187.5 503.3 1187.8 506.1 1188.1 508.2C1188.4 510.2 1188.5 511.1 1188.9 510.5C1189.2 509.8 1189.5 507.4 1189.9 504.7C1190.3 502 1190.6 498.2 1191.1 495.5C1191.5 492.9 1191.8 491.2 1192.2 490C1192.6 488.8 1192.9 488.5 1193.4 488.9C1193.8 489.2 1194.1 490.7 1194.5 492.1C1194.9 493.5 1195.1 495.6 1195.7 496.7C1196.2 497.7 1196.8 497.9 1197.5 497.8C1198.2 497.7 1198.8 496.7 1199.4 496.1C1200.1 495.5 1200.5 494.9 1201.2 494.7C1201.8 494.5 1202.4 494.5 1202.9 494.9C1203.4 495.4 1203.6 495.8 1204 497.2C1204.5 498.7 1204.8 501.6 1205.2 503C1205.6 504.4 1205.9 504.9 1206.3 504.9C1206.8 504.9 1207.3 504.2 1207.8 503C1208.3 501.8 1208.7 499.5 1209.2 498.4C1209.7 497.3 1210.1 496.8 1210.6 496.7C1211.1 496.5 1211.4 496.7 1211.8 497.6C1212.3 498.5 1212.7 500.6 1213.2 501.8C1213.7 503.1 1214.1 504.1 1214.6 504.5C1215.1 504.8 1215.5 505.4 1215.9 503.8C1216.2 502.2 1216.4 499.9 1216.7 495.5C1216.9 491.1 1217 484.8 1217.2 479.4C1217.5 474.1 1217.7 468.7 1218.1 465.7C1218.4 462.6 1218.9 462.4 1219.3 462.4C1219.7 462.4 1219.9 464.1 1220.4 465.7C1220.8 467.2 1221 469.4 1221.6 470.8C1222.2 472.2 1222.9 473.1 1223.6 473.3C1224.2 473.6 1224.6 472.9 1225.3 472C1226 471 1226.7 469.7 1227.6 468C1228.5 466.2 1229.4 464 1230.1 462.2C1230.8 460.4 1231.2 458.8 1231.6 457.8C1232.1 456.9 1232.3 456.5 1232.6 457C1233 457.6 1233.3 457.6 1233.6 461.1C1233.9 464.5 1234 470.2 1234.3 476C1234.5 481.8 1234.7 487.8 1234.9 493.2C1235.2 498.6 1235.5 503.3 1235.9 505.9C1236.2 508.4 1236.4 507.9 1236.8 507.6C1237.1 507.3 1237.3 506.2 1237.7 504.1C1238.1 502.1 1238.4 498.3 1238.8 496.1C1239.3 493.9 1239.7 492.9 1240.2 492.1C1240.7 491.2 1241 491.3 1241.6 491.4C1242.2 491.5 1242.9 491.9 1243.7 492.6C1244.4 493.4 1245 493.8 1245.7 495.3C1246.4 496.7 1246.9 499.4 1247.5 500.7C1248.1 502 1248.4 502.3 1249 502.4C1249.6 502.6 1250.1 501.9 1250.7 501.5C1251.4 501.1 1251.8 500.6 1252.5 500.3C1253.1 500.1 1253.7 499.8 1254.2 500.1C1254.7 500.4 1254.9 501.1 1255.3 501.8C1255.8 502.6 1256 503.4 1256.5 504.1C1257 504.9 1257.5 505.4 1258.2 505.9C1258.9 506.3 1259.6 506.3 1260.5 506.4C1261.4 506.6 1262 506.6 1263.4 506.5C1264.7 506.5 1266.6 506.2 1268 506C1269.3 505.7 1270 505.8 1270.8 505.3C1271.7 504.7 1272.2 504.3 1272.8 503C1273.4 501.6 1273.8 500.2 1274.3 497.8C1274.8 495.4 1275.3 493.1 1275.8 489.8C1276.3 486.5 1276.5 482.4 1276.9 479.4C1277.3 476.4 1277.5 474.5 1278 473.1C1278.4 471.8 1278.8 472.1 1279.5 471.9C1280.1 471.6 1280.9 471.7 1281.8 471.7C1282.6 471.8 1283.4 471.8 1284.1 472.3C1284.7 472.9 1285 472.9 1285.4 474.8C1285.9 476.7 1286 479.8 1286.4 482.9C1286.7 486 1286.9 489.5 1287.3 492.1C1287.6 494.7 1287.9 495.9 1288.4 497.2C1288.9 498.6 1289.4 498.9 1290 499.5C1290.7 500.2 1291.5 500.7 1292.1 500.8C1292.7 500.9 1293.1 501.1 1293.5 500.1C1293.9 499.2 1294.1 498.4 1294.4 495.5C1294.6 492.6 1294.7 488.4 1294.9 484C1295 479.7 1295.2 475.4 1295.4 471.4C1295.7 467.4 1296 463.7 1296.3 461.6C1296.7 459.6 1297.1 460 1297.5 460.1C1297.9 460.2 1298.1 460.6 1298.5 462.2C1299 463.8 1299.3 466.5 1299.9 469.1C1300.5 471.7 1301.1 473.8 1301.9 476.6C1302.6 479.4 1303.3 482 1304.2 484.6C1305 487.2 1305.7 489.1 1306.5 490.9C1307.2 492.7 1307.7 493.8 1308.4 494.6C1309.1 495.4 1309.7 495.5 1310.2 495.3C1310.8 495 1311.1 494.3 1311.6 493.2C1312.1 492.2 1312.5 490.4 1313 489.5C1313.5 488.7 1313.8 488.5 1314.3 488.4C1314.7 488.3 1315.2 488.4 1315.6 489.2C1316.1 490 1316.4 491.5 1316.8 492.6C1317.2 493.8 1317.6 495.1 1318.1 495.8C1318.5 496.4 1318.9 496.2 1319.4 496.1C1320 496 1320.4 495.9 1321 494.9C1321.7 494 1322.3 492.8 1322.9 490.9C1323.5 489.1 1323.9 487.1 1324.3 484.6C1324.7 482.1 1324.9 479.9 1325.2 477.1C1325.5 474.3 1325.6 471.1 1326 469.1C1326.3 467.1 1326.6 466.9 1327.1 466.2C1327.7 465.6 1328.1 465.6 1328.9 465.4C1329.6 465.2 1330.4 465.2 1331.2 465.2C1331.9 465.2 1332.4 464.7 1332.9 465.7C1333.3 466.6 1333.4 467.4 1333.7 470.2C1334 473.1 1334.1 477.8 1334.4 481.7C1334.7 485.7 1334.9 489.3 1335.3 492.1C1335.7 494.8 1336 495.8 1336.6 496.9C1337.2 498 1337.8 497.9 1338.6 498C1339.5 498.2 1340.5 498.2 1341.3 497.8C1342 497.5 1342.2 497.3 1342.6 496.1C1343.1 494.9 1343.2 493 1343.6 490.9C1343.9 488.9 1344.3 486.7 1344.7 484.6C1345.2 482.5 1345.5 481.2 1346.1 479.4C1346.6 477.7 1347.2 476.4 1347.8 474.8C1348.4 473.3 1349 472.5 1349.5 470.8C1350.1 469.2 1350.3 467.4 1350.7 465.7C1351.1 463.9 1351.4 462.2 1351.8 461.1C1352.3 459.9 1352.8 459.6 1353.3 459.3C1353.9 459.1 1354.4 459.3 1354.9 459.7C1355.5 460.1 1355.9 460.6 1356.4 461.6C1357 462.7 1357.4 463.7 1357.9 465.7C1358.4 467.6 1358.7 469.4 1359.1 472.5C1359.5 475.6 1359.8 479.5 1360.1 482.9C1360.5 486.3 1360.7 489.6 1361 491.5C1361.4 493.4 1361.6 493.6 1361.9 493.5C1362.3 493.3 1362.6 492.5 1362.9 490.9C1363.2 489.3 1363.3 486.5 1363.7 484.6C1364 482.7 1364.2 481.5 1364.7 480.6C1365.2 479.7 1365.5 479.6 1366.2 479.4C1366.9 479.2 1367.7 479.2 1368.5 479.4C1369.3 479.6 1369.8 480 1370.4 480.6C1371.1 481.2 1371.4 481.8 1371.9 482.9C1372.5 484 1372.9 485.5 1373.4 486.6C1373.9 487.6 1374.3 488.4 1374.8 488.6C1375.3 488.9 1375.7 488.8 1376.3 488.1C1376.9 487.3 1377.4 486.1 1378 484.6C1378.6 483.2 1379.1 482 1379.6 480C1380.2 478 1380.7 476 1381.1 473.7C1381.6 471.4 1381.9 469 1382.3 467.4C1382.7 465.8 1383 465.1 1383.4 464.7C1383.8 464.4 1384.2 464.4 1384.6 465.4C1385 466.4 1385.2 467.9 1385.6 470.2C1386 472.6 1386.2 476.2 1386.6 478.3C1387 480.4 1387.4 481.3 1387.8 482C1388.2 482.6 1388.5 482.4 1388.8 481.7C1389.2 481.1 1389.4 480.6 1389.7 478.3C1390.1 476 1390.3 472.4 1390.7 469.1C1391 465.8 1391.4 462.8 1391.8 459.9C1392.3 457 1392.7 455.3 1393.2 453C1393.7 450.7 1394.2 448.8 1394.7 447.3C1395.2 445.7 1395.6 445 1396.1 444.4C1396.6 443.8 1397 443.7 1397.4 444.2C1397.9 444.7 1398 444.6 1398.4 447.3C1398.7 449.9 1398.9 454.2 1399.2 458.8C1399.5 463.3 1399.7 469.2 1400 472.5C1400.3 475.9 1400.6 476.6 1400.9 477.4C1401.2 478.1 1401.5 477.6 1401.8 476.6C1402.1 475.5 1402.4 474.2 1402.7 471.4C1403.1 468.6 1403.4 464 1403.8 461.1C1404.2 458.2 1404.5 456.4 1404.9 455.3C1405.3 454.2 1405.7 454.5 1406.1 455.1C1406.4 455.7 1406.6 457 1407 458.8C1407.3 460.6 1407.7 462.9 1408.1 465.1C1408.6 467.2 1408.9 468.9 1409.5 470.8C1410.1 472.7 1410.6 474.3 1411.2 475.6C1411.8 477 1412.4 477.8 1412.9 478.3C1413.5 478.8 1414 478.9 1414.4 478.6C1414.9 478.3 1415.2 478.5 1415.6 476.6C1415.9 474.6 1416.1 471.4 1416.4 468C1416.7 464.5 1416.8 460.2 1417.1 457.6C1417.4 455 1417.6 454.3 1417.9 453.6C1418.2 452.9 1418.4 453.2 1418.8 453.6C1419.2 454 1419.5 455 1420 455.9C1420.4 456.8 1420.8 457.9 1421.3 458.5C1421.8 459.2 1422.2 459.3 1422.7 459.3C1423.2 459.3 1423.6 459 1424.2 458.5C1424.8 458.1 1425.4 457.1 1425.9 456.7C1426.5 456.3 1426.9 456 1427.4 456.2C1427.9 456.5 1428.2 456.5 1428.6 458.2C1428.9 459.9 1429.1 463.2 1429.4 465.7C1429.7 468.1 1429.9 470.3 1430.2 471.6C1430.5 473 1430.8 473.1 1431.1 473.1C1431.4 473.1 1431.7 472.9 1432 471.6C1432.4 470.4 1432.7 468.4 1433.1 466.2C1433.4 464 1433.8 460.9 1434.2 459.3C1434.6 457.8 1434.9 457.6 1435.4 457.6C1435.8 457.6 1436.1 458.1 1436.5 459.3C1436.9 460.6 1437.1 462.7 1437.4 464.5C1437.7 466.3 1437.9 468 1438.3 469.1C1438.8 470.2 1439.1 470.5 1439.7 470.8C1440.4 471.2 1441.2 471.2 1442 471.2C1442.8 471.2 1443.6 471.2 1444.3 470.8C1445 470.5 1445.3 470.4 1445.8 469.1C1446.3 467.8 1446.5 465.8 1446.8 463.4C1447.2 460.9 1447.4 457.3 1447.8 455.3C1448.1 453.3 1448.3 452.6 1448.7 452.2C1449 451.8 1449.4 451.8 1449.7 453C1450 454.2 1450.1 456.1 1450.4 458.8C1450.7 461.4 1450.9 465.5 1451.2 468C1451.5 470.4 1451.8 471.4 1452.1 472.3C1452.5 473.2 1452.8 473.3 1453.2 473.1C1453.5 472.9 1453.8 472.1 1454.3 471.2C1454.8 470.2 1455.2 468.8 1455.8 467.7C1456.4 466.6 1456.9 465.8 1457.5 465.1C1458.1 464.3 1458.6 464 1459.2 463.6C1459.9 463.2 1460 463.2 1461 463C1461.9 462.9 1463.3 462.8 1464.6 462.8C1465.9 462.7 1467 462.9 1468 462.7C1469.1 462.4 1469.7 462.1 1470.3 461.4C1471 460.7 1471.3 460.1 1471.7 458.8C1472.2 457.5 1472.5 455.4 1472.9 454.2C1473.3 452.9 1473.5 452.3 1474 451.9C1474.5 451.4 1475.1 451.2 1475.5 451.6C1475.9 452.1 1476.1 452.7 1476.4 454.2C1476.8 455.7 1477.1 458.2 1477.5 459.9C1477.8 461.6 1478 462.8 1478.4 463.6C1478.8 464.3 1479.2 464.3 1479.5 464C1479.9 463.8 1480.1 463.7 1480.4 462.2C1480.8 460.7 1481 458.5 1481.4 455.9C1481.7 453.3 1482 449.6 1482.4 447.8C1482.8 446.1 1483.2 446.1 1483.5 446.1C1483.9 446.1 1484.2 446.2 1484.5 447.8C1484.8 449.5 1485 452.7 1485.3 455.3C1485.6 457.9 1485.8 460.3 1486.2 462.2C1486.6 464.1 1486.9 465.5 1487.3 466C1487.8 466.5 1488.1 465.8 1488.5 464.7C1488.9 463.6 1489.2 461.4 1489.6 459.9C1490.1 458.4 1490.3 457.3 1490.8 456.5C1491.2 455.6 1491.7 455.3 1492.2 455.3C1492.7 455.3 1493 455.7 1493.5 456.5C1494.1 457.2 1494.5 458.5 1495 459.3C1495.6 460.2 1496.1 461.1 1496.5 461.1C1497 461.1 1497.3 460.5 1497.7 459.3C1498 458.2 1498.2 456.2 1498.5 454.7C1498.8 453.2 1499 451.8 1499.4 450.9C1499.8 450.1 1500.1 450.1 1500.8 449.9C1501.4 449.7 1502.3 449.7 1503.1 449.8C1503.8 449.9 1504.4 450.2 1505 450.7C1505.7 451.3 1506 451.6 1506.5 452.8C1507.1 453.9 1507.5 455.7 1508 457C1508.6 458.4 1509 459.1 1509.6 460.1C1510.3 461.2 1510.8 461.8 1511.7 462.8C1512.6 463.8 1513.5 464.9 1514.6 465.7C1515.6 466.4 1516.4 466.8 1517.4 467.1C1518.5 467.5 1519.4 467.7 1520.3 467.8C1521.2 468 1521.9 468.1 1522.6 468C1523.3 467.8 1523.6 467.6 1524 466.8C1524.4 466 1524.5 464.3 1524.9 463.4C1525.3 462.4 1525.6 461.9 1526.1 461.6C1526.5 461.4 1527 461.3 1527.4 461.9C1527.9 462.4 1528.1 463.1 1528.5 464.5C1528.8 465.9 1529.1 468.4 1529.5 469.7C1529.9 471 1530.2 471.4 1530.6 471.6C1531.1 471.8 1531.4 471.8 1531.8 470.8C1532.1 469.9 1532.3 468.7 1532.6 466.2C1532.9 463.7 1533.2 459.2 1533.5 457C1533.9 454.8 1534.1 454.6 1534.4 453.9C1534.8 453.3 1535 453.4 1535.6 453.6C1536.1 453.7 1536.7 454.1 1537.5 454.7C1538.4 455.4 1539.4 456.3 1540.4 457C1541.4 457.8 1542 458.1 1542.9 459C1543.9 459.9 1544.6 460.7 1545.6 462C1546.6 463.2 1547.5 464.7 1548.5 466C1549.4 467.3 1550 468.5 1550.8 469.3C1551.5 470.2 1551.9 470.7 1552.5 470.8C1553.1 471 1553.5 470.8 1554 470.2C1554.5 469.7 1554.9 468.4 1555.3 467.7C1555.8 467 1556.3 466.4 1556.7 466.2C1557.2 466.1 1557.6 466 1558 466.8C1558.4 467.6 1558.6 469.6 1559 470.8C1559.4 472.1 1559.8 473.1 1560.2 473.7C1560.6 474.3 1560.9 474.5 1561.3 474.3C1561.8 474 1562.1 473.2 1562.6 472.3C1563.1 471.4 1563.4 470 1564 469.3C1564.5 468.6 1564.9 468.6 1565.5 468.5C1566 468.4 1566.3 468.6 1566.8 468.9C1567.4 469.2 1567.8 469.9 1568.6 470.2C1569.3 470.6 1569.8 470.7 1570.9 470.8C1571.9 470.9 1573.3 470.9 1574.3 470.8C1575.3 470.7 1575.6 470.7 1576.3 470.4C1576.9 470.1 1577.5 469.3 1578.1 469.1C1578.7 468.9 1579.1 468.7 1579.5 469.3C1579.9 469.9 1580 471.3 1580.4 472.5C1580.7 473.8 1581 475.4 1581.4 476.2C1581.9 477.1 1582.4 477.5 1582.9 477.4C1583.4 477.3 1583.8 476.6 1584.3 475.8C1584.8 474.9 1585.1 473.5 1585.6 472.8C1586 472 1586.5 471.7 1586.9 471.6C1587.4 471.5 1587.7 471.4 1588.1 472.3C1588.5 473.2 1588.6 475.2 1589 476.6C1589.4 478 1589.7 479.2 1590.2 480C1590.6 480.8 1590.9 480.9 1591.5 480.9C1592.2 480.9 1593 480.5 1593.8 480C1594.7 479.5 1595.4 479.2 1596.1 478.3C1596.9 477.4 1597.3 476.1 1597.9 475.1C1598.4 474.1 1598.8 473.3 1599.2 472.8C1599.7 472.3 1600.1 472.1 1600.5 472.3C1600.9 472.5 1601.2 473.1 1601.6 473.9C1602.1 474.8 1602.4 476.3 1602.8 477.1C1603.2 478 1603.5 478.4 1603.9 478.6C1604.4 478.8 1604.8 478.9 1605.3 478.3C1605.9 477.7 1606.5 476.2 1607 475.4C1607.6 474.6 1607.9 474.2 1608.4 473.9C1608.9 473.7 1609.2 473.7 1609.7 473.9C1610.2 474.2 1610.5 474.8 1611.1 475.4C1611.6 476.1 1612 477.1 1612.6 477.5C1613.1 477.9 1613.4 477.9 1613.9 477.5C1614.4 477.1 1614.9 476.4 1615.3 475.4C1615.8 474.4 1616 472.8 1616.5 472C1616.9 471.1 1617.3 470.9 1617.7 470.8C1618.2 470.8 1618.5 471 1618.9 471.6C1619.3 472.2 1619.5 473.3 1619.9 474.3C1620.3 475.3 1620.7 476.2 1621.2 477.1C1621.7 478.1 1622.1 478.9 1622.8 479.7C1623.4 480.4 1624.2 481 1624.8 481.4C1625.5 481.8 1626.1 482 1626.6 481.7C1627.1 481.5 1627.3 481 1627.7 480C1628.1 479 1628.3 477.3 1628.6 476C1629 474.6 1629.3 473.3 1629.7 472.5C1630.1 471.8 1630.5 471.6 1630.9 471.6C1631.4 471.6 1631.8 471.9 1632.3 472.5C1632.8 473.2 1633.2 474.2 1633.7 475.4C1634.1 476.7 1634.5 477.7 1634.8 479.4C1635.2 481.2 1635.5 482.7 1635.8 485.2C1636.1 487.7 1636.2 490.1 1636.5 493.2C1636.7 496.3 1636.7 498.9 1636.9 502.4C1637.1 505.9 1637.2 510.4 1637.5 512.8C1637.7 515.1 1638 515 1638.3 515.6C1638.6 516.2 1638.8 516.4 1639.2 516.2C1639.6 516 1640.1 515.1 1640.6 514.2C1641.1 513.4 1641.6 512.3 1642.1 511.6C1642.6 510.9 1643 510.7 1643.5 510.6C1643.9 510.5 1644.3 510.5 1644.7 511C1645.2 511.5 1645.5 512.2 1645.9 513.3C1646.3 514.5 1646.6 515.8 1647 517.3C1647.5 518.9 1648 520.7 1648.4 521.9C1648.8 523.2 1648.9 523.4 1649.2 524.5C1649.5 525.5 1649.8 527 1650.1 527.9C1650.4 528.8 1650.4 529.3 1650.9 529.6C1651.5 530 1652.3 529.9 1653.2 529.9C1654.1 529.8 1655.3 529.4 1656.1 529.4C1656.9 529.4 1657.3 529.3 1657.8 529.9C1658.3 530.4 1658.5 531.7 1659 532.5C1659.4 533.4 1659.6 534.1 1660.1 534.6C1660.6 535 1661.1 535.4 1661.6 535.1C1662.1 534.9 1662.4 534.3 1662.7 533.1C1663.1 531.9 1663.4 529.6 1663.8 528.5C1664.2 527.3 1664.5 527 1664.9 526.8C1665.3 526.6 1665.7 526.3 1666.1 527.3C1666.4 528.4 1666.5 529.9 1666.8 532.5C1667 535.1 1667.3 539.3 1667.6 541.7C1667.9 544.1 1668.1 545.1 1668.5 546.1C1668.9 547 1669.2 547.3 1669.6 547.1C1670.1 546.9 1670.3 546 1670.8 544.9C1671.2 543.8 1671.7 542 1672.2 541.1C1672.7 540.2 1673 540.1 1673.5 540C1674.1 539.8 1674.4 540 1675 540.3C1675.7 540.6 1676.4 541.4 1677.3 541.7C1678.3 542 1679.2 542.1 1680.2 541.9C1681.2 541.8 1682.1 541.4 1683.1 540.8C1684 540.2 1684.5 539.4 1685.4 538.5C1686.2 537.5 1686.9 536.5 1687.7 535.5C1688.4 534.5 1689 533.7 1689.6 533.1C1690.3 532.4 1690.8 532 1691.3 531.9C1691.9 531.9 1692.4 531.8 1692.8 532.7C1693.3 533.7 1693.4 535.4 1693.8 537.1C1694.1 538.8 1694.5 540.5 1694.9 542.3C1695.4 544 1695.8 545.2 1696.3 546.9C1696.8 548.5 1697.2 550.3 1697.7 551.5C1698.1 552.7 1698.3 553.1 1698.8 553.5C1699.4 554 1700.1 554.3 1700.7 553.9C1701.2 553.4 1701.4 552.1 1701.8 550.9C1702.2 549.6 1702.5 548.1 1703 546.9C1703.4 545.7 1703.9 544.9 1704.6 544.2C1705.2 543.6 1705.8 543.5 1706.6 543.3C1707.4 543.1 1708 543.1 1708.9 543.1C1709.9 543.1 1710.8 543.1 1711.8 543.3C1712.8 543.5 1713.5 543.7 1714.4 544.2C1715.4 544.8 1716.1 545.4 1717 546.3C1717.8 547.2 1718.4 548.3 1719 549.2C1719.7 550 1719.9 550.6 1720.6 551.1C1721.3 551.6 1721.8 551.9 1722.9 552C1724 552.2 1725.7 552.1 1726.7 551.8C1727.8 551.5 1728 551 1728.7 550.3C1729.4 549.6 1729.9 548.8 1730.8 548C1731.6 547.2 1732.5 546.5 1733.3 545.9C1734.1 545.4 1734.5 545.1 1735.3 544.8C1736.2 544.5 1737.1 544.6 1737.9 544.2C1738.6 543.9 1739.1 543.7 1739.6 542.8C1740.1 542 1740.4 540.9 1740.9 539.4C1741.3 537.8 1741.6 535.6 1742 534.2C1742.4 532.9 1742.8 532.3 1743.2 532C1743.6 531.8 1743.9 531.8 1744.2 533.1C1744.5 534.4 1744.6 536.4 1744.8 539.4C1745 542.4 1745.1 546.2 1745.3 549.7C1745.6 553.3 1745.8 556.6 1746 558.9C1746.3 561.2 1746.5 561.9 1746.8 562.6C1747.1 563.3 1747.4 563.5 1747.8 562.9C1748.1 562.4 1748.3 561.3 1748.7 559.5C1749 557.7 1749.2 554.9 1749.6 553.2C1749.9 551.5 1750.1 550.7 1750.6 550C1751.1 549.2 1751.6 549.1 1752.3 549.2C1753.1 549.2 1753.7 549.7 1754.6 550.2C1755.6 550.7 1756.8 551.3 1757.7 551.7C1758.7 552.1 1759.3 552.6 1760 552.6C1760.8 552.6 1761.3 552.4 1761.8 551.7C1762.3 551 1762.5 549.5 1762.9 548.6C1763.3 547.7 1763.5 547.1 1764.1 546.7C1764.6 546.4 1765.3 546.2 1765.8 546.7C1766.3 547.3 1766.5 548.5 1766.9 549.7C1767.4 551 1767.7 552.8 1768.1 553.8C1768.5 554.7 1768.8 555.2 1769.2 555.2C1769.6 555.3 1770 555.5 1770.4 554.1C1770.7 552.7 1770.9 550.1 1771.2 547.4C1771.5 544.8 1771.7 541.3 1772 539.4C1772.3 537.5 1772.6 537.1 1772.9 536.8C1773.3 536.4 1773.6 536.5 1773.9 537.3C1774.3 538.1 1774.6 539.7 1775 541.1C1775.3 542.6 1775.5 544.4 1775.9 545.4C1776.3 546.4 1776.6 546.6 1777.3 546.7C1777.9 546.9 1778.5 546.5 1779.6 546.4C1780.6 546.3 1781.6 546.1 1783 545.9C1784.5 545.8 1786.2 545.6 1787.6 545.5C1789.1 545.4 1790 545.3 1791.1 545.5C1792.1 545.7 1792.5 546 1793.4 546.5C1794.2 547.1 1794.8 547.8 1795.7 548.6C1796.5 549.4 1797.1 550.1 1798 550.9C1798.8 551.7 1799.4 552.3 1800.3 553C1801.1 553.6 1801.7 554 1802.6 554.7C1803.4 555.3 1804.2 555.9 1804.8 556.6C1805.5 557.4 1805.8 558.3 1806.3 558.9C1806.9 559.5 1807.2 559.9 1807.7 560.1C1808.2 560.2 1808.6 560.2 1809.1 559.7C1809.6 559.2 1809.8 557.9 1810.2 557.2C1810.7 556.5 1811.1 556 1811.7 555.7C1812.4 555.4 1813.2 555.3 1814 555.4C1814.9 555.4 1815.6 555.5 1816.3 556.2C1817.1 556.8 1817.5 557.7 1818.1 558.9C1818.6 560.1 1818.8 561.9 1819.2 562.9C1819.6 564 1819.9 564.5 1820.4 564.9C1820.8 565.3 1821.3 565.4 1821.8 565.2C1822.4 565.1 1822.8 564.7 1823.5 563.9C1824.1 563 1824.8 561.7 1825.5 560.6C1826.2 559.6 1826.9 558.6 1827.5 557.8C1828.1 556.9 1828.5 556.3 1829 555.9C1829.5 555.6 1830 555.2 1830.4 555.7C1830.7 556.2 1830.8 557.1 1831 558.9C1831.3 560.7 1831.5 563.4 1831.8 565.8C1832.2 568.2 1832.3 570.7 1832.8 572.1C1833.2 573.6 1833.5 573.5 1834.1 573.9C1834.8 574.2 1835.6 574.1 1836.4 574.2C1837.3 574.3 1838.1 574.1 1839 574.4C1839.8 574.8 1840.4 575.6 1841.3 576.2C1842.2 576.7 1842.9 577.2 1843.9 577.5C1844.9 577.8 1846 578 1846.8 577.9C1847.6 577.8 1847.9 577.8 1848.5 577.1C1849.1 576.4 1849.5 574.7 1850 573.9C1850.5 573 1850.7 572.7 1851.1 572.5C1851.6 572.3 1852 572.2 1852.5 572.7C1853 573.2 1853.4 574.1 1853.9 575.2C1854.4 576.4 1854.6 577.6 1855 579C1855.5 580.5 1856 582.5 1856.2 583.3" fill="none" stroke="#ff0bad" stroke-width="2" stroke-linejoin="round" stroke-linecap="round"/>
<circle cx="1396.8" cy="690.2" r="4.8" fill="#e6a80c"/>
<circle cx="916.1" cy="765.5" r="4.8" fill="#e6a80c"/>
<circle cx="1050.4" cy="693.6" r="4.8" fill="#19be5b"/>
<circle cx="916.1" cy="767.3" r="4.8" fill="#19be5b"/>
<circle cx="1050.4" cy="702.4" r="4.8" fill="#ff4d4d"/>
<circle cx="916.1" cy="772.8" r="4.8" fill="#ff4d4d"/>
<circle cx="1050.4" cy="432.9" r="4.8" fill="#ff0bad"/>
<circle cx="916.2" cy="652.4" r="4.8" fill="#ff0bad"/>
<path d="M1479 400.5h25" stroke="#e6a80c" stroke-width="2"/><circle cx="1491.5" cy="400.5" r="5.4" fill="#e6a80c"/>
<text x="1509.3" y="404.6" font-size="12" fill="#333">A相有功功率</text>
<path d="M1588.5 400.5h25" stroke="#19be5b" stroke-width="2"/><circle cx="1601" cy="400.5" r="5.4" fill="#19be5b"/>
<text x="1618.3" y="404.6" font-size="12" fill="#333">B相有功功率</text>
<path d="M1697.5 400.5h25" stroke="#ff4d4d" stroke-width="2"/><circle cx="1710" cy="400.5" r="5.4" fill="#ff4d4d"/>
<text x="1727.3" y="404.6" font-size="12" fill="#333">C相有功功率</text>
<path d="M1806 400.5h25" stroke="#ff0bad" stroke-width="2"/><circle cx="1818.5" cy="400.5" r="5.4" fill="#ff0bad"/>
<text x="1836.5" y="404.6" font-size="12" fill="#333">总有功功率</text>
<g transform="translate(1749 350.8) scale(0.2857 0.2643) translate(-2 -2)"><path d="M3.8,33.4 M47,18.9h9.8V8.7 M56.3,20.1 C52.1,9,40.5,0.6,26.8,2.1C12.6,3.7,1.6,16.2,2.1,30.6 M13,41.1H3.1v10.2 M3.7,39.9c4.2,11.1,15.8,19.5,29.5,18 c14.2-1.6,25.2-14.1,24.7-28.5" fill="none" stroke="#5a5a5a" stroke-width="1.2" vector-effect="non-scaling-stroke"/></g>
<g transform="translate(1777.2 351) scale(0.2655 0.2517) translate(0 0)"><path d="M0,13.5h26.9 M13.5,26.9V0 M32.1,13.5H58V58H13.5 V32.1" fill="none" stroke="#5a5a5a" stroke-width="1.2" vector-effect="non-scaling-stroke"/></g>
<g transform="translate(1804.8 350.8) scale(0.2889 0.261) translate(-9.9 -1.4)"><path d="M22,1.4L9.9,13.5l12.3,12.3 M10.3,13.5H54.9v44.6 H10.3v-26" fill="none" stroke="#5a5a5a" stroke-width="1.2" vector-effect="non-scaling-stroke"/></g>
<g transform="translate(1830.2 351.3) scale(0.2652 0.2798) translate(-4.1 -6.9)"><path d="M4.1,28.9h7.1l9.3-22l7.4,38l9.7-19.7l3,12.8h14.9M4.1,58h51.4" fill="none" stroke="#5a5a5a" stroke-width="1.2" vector-effect="non-scaling-stroke"/></g>
<g transform="translate(1858.2 350.8) scale(0.27 0.2643) translate(-3.1 -2)"><path d="M6.7,22.9h10V48h-10V22.9zM24.9,13h10v35h-10V13zM43.2,2h10v46h-10V2zM3.1,58h53.7" fill="none" stroke="#5a5a5a" stroke-width="1.2" vector-effect="non-scaling-stroke"/></g>
<g transform="translate(1885 350.8) scale(0.2794 0.2552) translate(-4.6 0)"><path d="M4.7,22.9L29.3,45.5L54.7,23.4M4.6,43.6L4.6,58L53.8,58L53.8,43.6M29.2,45.1L29.2,0" fill="none" stroke="#5a5a5a" stroke-width="1.2" vector-effect="non-scaling-stroke"/></g>
<rect x="1886.5" y="725.5" width="17" height="17" rx="2" fill="#fff" stroke="#f0f0f0"/><g fill="none" stroke="#444" stroke-width="1"><path d="M1892.5 730.5h7.5M1890 734.5h10M1892.5 738.5h7.5"/><circle cx="1891.3" cy="730.5" r="1.1"/><circle cx="1891.3" cy="738.5" r="1.1"/><path d="M1896.5 733l1.8 1.5-1.8 1.5z" fill="#444"/></g>
</svg>
<div class="abs" style="left:1404px;top:429px;width:2px;height:370px;background:#7f7f7f"></div>

</div>
</body>
</html>
